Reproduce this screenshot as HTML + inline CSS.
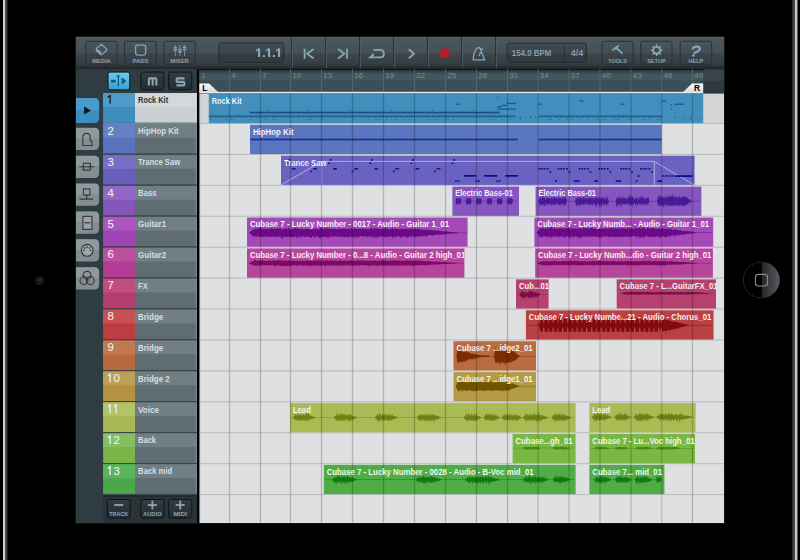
<!DOCTYPE html>
<html><head><meta charset="utf-8"><style>html,body{margin:0;padding:0;background:#000;width:800px;height:560px;overflow:hidden}svg{display:block}</style></head>
<body><svg width="800" height="560" viewBox="0 0 800 560" font-family="Liberation Sans, sans-serif">
<rect width="800" height="560" fill="#000"/>
<rect x="3.00" y="0.00" width="2.00" height="560.00" fill="#cfcfd0" />
<rect x="5.00" y="0.00" width="1.00" height="560.00" fill="#55575b" />
<rect x="6.00" y="0.00" width="1.00" height="560.00" fill="#3c3e42" />
<rect x="7.00" y="0.00" width="1.00" height="560.00" fill="#1c1d1f" />
<rect x="792.00" y="0.00" width="1.00" height="560.00" fill="#2a2b2e" />
<rect x="793.00" y="0.00" width="1.00" height="560.00" fill="#3d3f43" />
<rect x="794.00" y="0.00" width="1.00" height="560.00" fill="#4a4c50" />
<rect x="795.00" y="0.00" width="2.00" height="560.00" fill="#c6c6c8" />
<rect x="797.00" y="0.00" width="1.00" height="560.00" fill="#58595c" />
<circle cx="39.6" cy="280.4" r="4.4" fill="#171819"/>
<circle cx="39.6" cy="281" r="3.6" fill="#262729"/>
<circle cx="39.6" cy="280.2" r="3.2" fill="#141516"/>
<circle cx="39.6" cy="280.4" r="2.0" fill="#0c1630"/>
<circle cx="39.9" cy="280.0" r="1.1" fill="#1d3a98"/>
<defs><linearGradient id="hb" x1="0" x2="1" y1="0" y2="0"><stop offset="0" stop-color="#26272a"/><stop offset="1" stop-color="#5a5b5f"/></linearGradient></defs>
<circle cx="761.2" cy="280" r="17.8" fill="#000" stroke="#2c2c2e" stroke-width="0.8"/>
<path d="M762,262.2 A17.8,17.8 0 0 1 762,297.8 Z" fill="url(#hb)"/>
<rect x="755.4" y="274.4" width="12.2" height="11.6" rx="3" fill="none" stroke="#8c8c8e" stroke-width="1.1"/>
<rect x="75.00" y="36.00" width="650.00" height="488.00" fill="#121416" />
<rect x="76.00" y="37.00" width="648.00" height="486.00" fill="#2f3a40" />
<defs>
<linearGradient id="tb" x1="0" x2="0" y1="0" y2="1"><stop offset="0" stop-color="#4c585f"/><stop offset="0.55" stop-color="#454f56"/><stop offset="0.56" stop-color="#3e474d"/><stop offset="1" stop-color="#343c41"/></linearGradient>
<linearGradient id="tbb" x1="0" x2="0" y1="0" y2="1"><stop offset="0" stop-color="#2d3438"/><stop offset="1" stop-color="#1f262a"/></linearGradient>
<linearGradient id="btn" x1="0" x2="0" y1="0" y2="1"><stop offset="0" stop-color="#4a555c"/><stop offset="0.5" stop-color="#434d53"/><stop offset="0.51" stop-color="#3c454b"/><stop offset="1" stop-color="#353d42"/></linearGradient>
<linearGradient id="blueb" x1="0" x2="0" y1="0" y2="1"><stop offset="0" stop-color="#6ccaee"/><stop offset="1" stop-color="#389fd0"/></linearGradient>
<linearGradient id="darkb" x1="0" x2="0" y1="0" y2="1"><stop offset="0" stop-color="#323c42"/><stop offset="1" stop-color="#252d32"/></linearGradient>
<linearGradient id="pbox" x1="0" x2="0" y1="0" y2="1"><stop offset="0" stop-color="#414b51"/><stop offset="0.5" stop-color="#3c454b"/><stop offset="0.52" stop-color="#353d43"/><stop offset="1" stop-color="#30383d"/></linearGradient>
<linearGradient id="rul" x1="0" x2="0" y1="0" y2="1"><stop offset="0" stop-color="#27363b"/><stop offset="0.45" stop-color="#3f565d"/><stop offset="1" stop-color="#42595f"/></linearGradient>
<linearGradient id="lmk" x1="0" x2="0" y1="0" y2="1"><stop offset="0" stop-color="#ffffff"/><stop offset="1" stop-color="#d8d8d8"/></linearGradient>
</defs>
<rect x="76.00" y="37.00" width="648.00" height="28.50" fill="url(#tb)" />
<rect x="76.00" y="37.00" width="648.00" height="1.20" fill="#56636a" />
<rect x="76.00" y="65.40" width="648.00" height="3.80" fill="url(#tbb)" />
<rect x="85.80" y="41.30" width="31.20" height="23.00" rx="2" fill="url(#btn)" stroke="#2a3136" stroke-width="1"/>
<text x="101.4" y="62.8" font-size="5.9" fill="#8aa1ad" font-weight="bold" text-anchor="middle" textLength="18.5" lengthAdjust="spacingAndGlyphs" >MEDIA</text>
<rect x="124.50" y="41.30" width="31.80" height="23.00" rx="2" fill="url(#btn)" stroke="#2a3136" stroke-width="1"/>
<text x="140.4" y="62.8" font-size="5.9" fill="#8aa1ad" font-weight="bold" text-anchor="middle" textLength="15.9" lengthAdjust="spacingAndGlyphs" >PADS</text>
<rect x="163.80" y="41.30" width="31.50" height="23.00" rx="2" fill="url(#btn)" stroke="#2a3136" stroke-width="1"/>
<text x="179.55" y="62.8" font-size="5.9" fill="#8aa1ad" font-weight="bold" text-anchor="middle" textLength="18.5" lengthAdjust="spacingAndGlyphs" >MIXER</text>
<rect x="602.10" y="41.30" width="31.10" height="23.00" rx="2" fill="url(#btn)" stroke="#2a3136" stroke-width="1"/>
<text x="617.6500000000001" y="62.8" font-size="5.9" fill="#8aa1ad" font-weight="bold" text-anchor="middle" textLength="18.6" lengthAdjust="spacingAndGlyphs" >TOOLS</text>
<rect x="640.80" y="41.30" width="31.20" height="23.00" rx="2" fill="url(#btn)" stroke="#2a3136" stroke-width="1"/>
<text x="656.4" y="62.8" font-size="5.9" fill="#8aa1ad" font-weight="bold" text-anchor="middle" textLength="18.5" lengthAdjust="spacingAndGlyphs" >SETUP</text>
<rect x="680.20" y="41.30" width="31.50" height="23.00" rx="2" fill="url(#btn)" stroke="#2a3136" stroke-width="1"/>
<text x="695.95" y="62.8" font-size="5.9" fill="#8aa1ad" font-weight="bold" text-anchor="middle" textLength="14.7" lengthAdjust="spacingAndGlyphs" >HELP</text>
<path d="M101.5,44.4 L106.5,49 L106.5,50.5 L101.4,54.9 L96.4,50.8 L96.4,48.5 Z" fill="none" stroke="#86a6b7" stroke-width="1.2" stroke-linejoin="round"/>
<path d="M96.3,48.4 L101.3,51.8 L101.3,54.9 L96.3,50.9 Z" fill="#86a6b7"/>
<rect x="135.6" y="45.1" width="10" height="10" rx="1.8" fill="none" stroke="#86a6b7" stroke-width="1.3"/>
<line x1="175.3" y1="44.8" x2="175.3" y2="56" stroke="#86a6b7" stroke-width="0.9" opacity="0.8"/>
<rect x="173.70000000000002" y="47.0" width="3.2" height="3.90" fill="#86a6b7"/><rect x="173.70000000000002" y="48.65" width="3.2" height="0.6" fill="#4a565c"/>
<line x1="179.9" y1="44.8" x2="179.9" y2="56" stroke="#86a6b7" stroke-width="0.9" opacity="0.8"/>
<rect x="178.3" y="48.9" width="3.2" height="3.90" fill="#86a6b7"/><rect x="178.3" y="50.55" width="3.2" height="0.6" fill="#4a565c"/>
<line x1="184.5" y1="44.8" x2="184.5" y2="56" stroke="#86a6b7" stroke-width="0.9" opacity="0.8"/>
<rect x="182.9" y="46.5" width="3.2" height="3.70" fill="#86a6b7"/><rect x="182.9" y="48.05" width="3.2" height="0.6" fill="#4a565c"/>
<path d="M611.9,49.6 L615.6,46.7 Q617.1,45.5 618.8,45.1 L619.4,46.1 Q617.9,46.9 617.5,48.3 L616.4,49.3 Q614.6,49.5 612.7,51 Z" fill="#86a6b7"/><line x1="616.4" y1="48" x2="622.6" y2="53.7" stroke="#86a6b7" stroke-width="1.75"/>
<polygon points="655.29,46.56 656.18,44.57 657.22,44.57 658.11,46.56 658.35,46.66 660.38,45.89 661.11,46.62 660.34,48.65 660.44,48.89 662.43,49.78 662.43,50.82 660.44,51.71 660.34,51.95 661.11,53.98 660.38,54.71 658.35,53.94 658.11,54.04 657.22,56.03 656.18,56.03 655.29,54.04 655.05,53.94 653.02,54.71 652.29,53.98 653.06,51.95 652.96,51.71 650.97,50.82 650.97,49.78 652.96,48.89 653.06,48.65 652.29,46.62 653.02,45.89 655.05,46.66" fill="#86a6b7"/><circle cx="656.7" cy="50.3" r="2.45" fill="#414b51"/>
<path d="M692.4,49.4 Q693.2,46.6 696.6,46.6 Q700,46.6 699.8,49 Q699.6,50.8 697,51.8 Q694.6,52.6 694.2,53.6" fill="none" stroke="#86a6b7" stroke-width="2.3"/><path d="M692.2,54.4 L695,54.4 L694.6,56.6 L691.8,56.6 Z" fill="#86a6b7"/>
<rect x="218.9" y="42.9" width="65" height="19.6" rx="2.5" fill="url(#pbox)" stroke="#262d31" stroke-width="1"/>
<rect x="258" y="48.6" width="2.1" height="8.4" fill="#88a7b7"/><path d="M258.3,48.6 L260.1,48.6 L256.2,51.4 L255.8,49.9 Z" fill="#88a7b7"/>
<rect x="262.8" y="55.1" width="2.2" height="1.9" fill="#88a7b7"/>
<rect x="268" y="48.6" width="2.1" height="8.4" fill="#88a7b7"/><path d="M268.3,48.6 L270.1,48.6 L266.2,51.4 L265.8,49.9 Z" fill="#88a7b7"/>
<rect x="272.8" y="55.1" width="2.2" height="1.9" fill="#88a7b7"/>
<rect x="278" y="48.6" width="2.1" height="8.4" fill="#88a7b7"/><path d="M278.3,48.6 L280.1,48.6 L276.2,51.4 L275.8,49.9 Z" fill="#88a7b7"/>
<rect x="291.10" y="37.00" width="1.00" height="31.00" fill="#2a3236" />
<rect x="292.10" y="37.00" width="0.80" height="31.00" fill="#525d63" />
<rect x="325.10" y="37.00" width="1.00" height="31.00" fill="#2a3236" />
<rect x="326.10" y="37.00" width="0.80" height="31.00" fill="#525d63" />
<rect x="359.00" y="37.00" width="1.00" height="31.00" fill="#2a3236" />
<rect x="360.00" y="37.00" width="0.80" height="31.00" fill="#525d63" />
<rect x="393.00" y="37.00" width="1.00" height="31.00" fill="#2a3236" />
<rect x="394.00" y="37.00" width="0.80" height="31.00" fill="#525d63" />
<rect x="427.00" y="37.00" width="1.00" height="31.00" fill="#2a3236" />
<rect x="428.00" y="37.00" width="0.80" height="31.00" fill="#525d63" />
<rect x="461.00" y="37.00" width="1.00" height="31.00" fill="#2a3236" />
<rect x="462.00" y="37.00" width="0.80" height="31.00" fill="#525d63" />
<rect x="495.00" y="37.00" width="1.00" height="31.00" fill="#2a3236" />
<rect x="496.00" y="37.00" width="0.80" height="31.00" fill="#525d63" />
<path d="M304.6,48.7 L304.6,58.8 M313.6,49 L307.2,53.8 L313.6,58.6" fill="none" stroke="#86a6b7" stroke-width="1.85" stroke-linecap="butt" stroke-linejoin="miter"/>
<path d="M338,49 L344.4,53.8 L338,58.6 M347,48.7 L347,58.8" fill="none" stroke="#86a6b7" stroke-width="1.85" stroke-linecap="butt" stroke-linejoin="miter"/>
<path d="M373.4,49.9 L380.2,49.9 Q383.9,49.9 383.9,53.7 Q383.9,57.4 380.2,57.4 L370.2,57.4 L373.8,54" fill="none" stroke="#86a6b7" stroke-width="1.85" stroke-linecap="butt" stroke-linejoin="miter"/>
<path d="M408.8,49.2 L414,53.8 L408.8,58.4" fill="none" stroke="#86a6b7" stroke-width="1.85" stroke-linecap="butt" stroke-linejoin="miter"/>
<circle cx="444.7" cy="53.2" r="5" fill="#b31d24"/>
<path d="M473.2,59.9 Q473.4,52.4 476.6,48.6 Q478.4,46.6 480.2,48.4 L484.6,59.9 Z M479,56 L482.6,48" fill="none" stroke="#86a6b7" stroke-width="1.3" stroke-linejoin="round"/>
<rect x="507.2" y="43.2" width="79.2" height="19.2" rx="2.5" fill="url(#pbox)" stroke="#262d31" stroke-width="1"/>
<rect x="564.00" y="43.50" width="0.90" height="18.60" fill="#2b3237" />
<text x="511.8" y="56.3" font-size="8.4" fill="#879eab" font-weight="bold" text-anchor="start" textLength="39.5" lengthAdjust="spacingAndGlyphs" >154.0 BPM</text>
<text x="570.7" y="56.3" font-size="8.4" fill="#879eab" font-weight="bold" text-anchor="start" textLength="12.5" lengthAdjust="spacingAndGlyphs" >4/4</text>
<rect x="76.00" y="69.20" width="121.00" height="453.80" fill="#2f3c42" />
<rect x="108.00" y="72.10" width="21.80" height="17.80" rx="2" fill="url(#blueb)" stroke="#101417" stroke-width="1"/>
<rect x="140.80" y="72.10" width="23.10" height="17.80" rx="2" fill="url(#darkb)" stroke="#101417" stroke-width="1"/>
<rect x="168.60" y="72.10" width="23.20" height="17.80" rx="2" fill="url(#darkb)" stroke="#101417" stroke-width="1"/>
<rect x="111.1" y="79.8" width="4.5" height="2.8" fill="#0f5a80"/><path d="M115.6,75.4 L120.9,75.4 L119,77 L119,86.5 L117.8,86.5 L117.8,77 Z" fill="#0f5a80"/><path d="M121,78.3 L123.3,78.3 L126.1,81 L123.3,83.7 L121,83.7 L122,81 Z" fill="#0f5a80"/>
<path d="M148.9,85.4 L148.9,79.4 Q148.9,78.4 149.9,78.4 L155.4,78.4 Q156.4,78.4 156.4,79.4 L156.4,85.4 M152.65,78.8 L152.65,85.4" fill="none" stroke="#8aa5b3" stroke-width="2.1"/>
<path d="M184.6,78.4 L177.6,78.4 Q176.6,78.4 176.6,79.4 L176.6,80.9 Q176.6,81.9 177.6,81.9 L183.4,81.9 Q184.4,81.9 184.4,82.9 L184.4,84.4 Q184.4,85.4 183.4,85.4 L176.4,85.4" fill="none" stroke="#8aa5b3" stroke-width="2.1"/>
<rect x="103.10" y="494.50" width="93.80" height="28.50" fill="#293338" />
<rect x="103.10" y="494.50" width="93.80" height="2.20" fill="#20282c" />
<rect x="107.40" y="499.50" width="22.70" height="18.60" rx="2" fill="url(#darkb)" stroke="#101417" stroke-width="1"/>
<path d="M114.25,505 L123.25,505" stroke="#8aa8b8" stroke-width="1.8"/>
<text x="118.75" y="516.3" font-size="6.0" fill="#8aa4b2" font-weight="bold" text-anchor="middle" textLength="19" lengthAdjust="spacingAndGlyphs" >TRACK</text>
<rect x="140.80" y="499.50" width="23.10" height="18.60" rx="2" fill="url(#darkb)" stroke="#101417" stroke-width="1"/>
<path d="M147.85000000000002,505 L156.85000000000002,505" stroke="#8aa8b8" stroke-width="1.8"/>
<path d="M152.35000000000002,500.6 L152.35000000000002,509.4" stroke="#8aa8b8" stroke-width="1.8"/>
<text x="152.35000000000002" y="516.3" font-size="6.0" fill="#8aa4b2" font-weight="bold" text-anchor="middle" textLength="18.8" lengthAdjust="spacingAndGlyphs" >AUDIO</text>
<rect x="168.60" y="499.50" width="23.20" height="18.60" rx="2" fill="url(#darkb)" stroke="#101417" stroke-width="1"/>
<path d="M175.7,505 L184.7,505" stroke="#8aa8b8" stroke-width="1.8"/>
<path d="M180.2,500.6 L180.2,509.4" stroke="#8aa8b8" stroke-width="1.8"/>
<text x="180.2" y="516.3" font-size="6.0" fill="#8aa4b2" font-weight="bold" text-anchor="middle" textLength="13.4" lengthAdjust="spacingAndGlyphs" >MIDI</text>
<path d="M76,98 L94.1,98 Q99.1,98 99.1,103 L99.1,118.1 Q99.1,123.1 94.1,123.1 L76,123.1 Z" fill="#3b8dc2"/>
<clipPath id="c98"><path d="M76,98 L94.1,98 Q99.1,98 99.1,103 L99.1,118.1 Q99.1,123.1 94.1,123.1 L76,123.1 Z"/></clipPath><rect x="76" y="98" width="24" height="12.05" fill="#4a9bcd" clip-path="url(#c98)"/>
<path d="M84.1,106.6 L90.9,110.6 L84.1,114.6 Z" fill="#0e161c"/>
<path d="M76,127.8 L94.1,127.8 Q99.1,127.8 99.1,132.8 L99.1,145.1 Q99.1,150.1 94.1,150.1 L76,150.1 Z" fill="#838e92"/>
<clipPath id="c127"><path d="M76,127.8 L94.1,127.8 Q99.1,127.8 99.1,132.8 L99.1,145.1 Q99.1,150.1 94.1,150.1 L76,150.1 Z"/></clipPath><rect x="76" y="127.8" width="24" height="10.70" fill="#8f9a9e" clip-path="url(#c127)"/>
<path d="M76,155.68 L94.1,155.68 Q99.1,155.68 99.1,160.68 L99.1,172.98000000000002 Q99.1,177.98000000000002 94.1,177.98000000000002 L76,177.98000000000002 Z" fill="#838e92"/>
<clipPath id="c155"><path d="M76,155.68 L94.1,155.68 Q99.1,155.68 99.1,160.68 L99.1,172.98000000000002 Q99.1,177.98000000000002 94.1,177.98000000000002 L76,177.98000000000002 Z"/></clipPath><rect x="76" y="155.68" width="24" height="10.70" fill="#8f9a9e" clip-path="url(#c155)"/>
<path d="M76,183.56 L94.1,183.56 Q99.1,183.56 99.1,188.56 L99.1,200.86 Q99.1,205.86 94.1,205.86 L76,205.86 Z" fill="#838e92"/>
<clipPath id="c183"><path d="M76,183.56 L94.1,183.56 Q99.1,183.56 99.1,188.56 L99.1,200.86 Q99.1,205.86 94.1,205.86 L76,205.86 Z"/></clipPath><rect x="76" y="183.56" width="24" height="10.70" fill="#8f9a9e" clip-path="url(#c183)"/>
<path d="M76,211.44 L94.1,211.44 Q99.1,211.44 99.1,216.44 L99.1,228.74 Q99.1,233.74 94.1,233.74 L76,233.74 Z" fill="#838e92"/>
<clipPath id="c211"><path d="M76,211.44 L94.1,211.44 Q99.1,211.44 99.1,216.44 L99.1,228.74 Q99.1,233.74 94.1,233.74 L76,233.74 Z"/></clipPath><rect x="76" y="211.44" width="24" height="10.70" fill="#8f9a9e" clip-path="url(#c211)"/>
<path d="M76,239.32 L94.1,239.32 Q99.1,239.32 99.1,244.32 L99.1,256.62 Q99.1,261.62 94.1,261.62 L76,261.62 Z" fill="#838e92"/>
<clipPath id="c239"><path d="M76,239.32 L94.1,239.32 Q99.1,239.32 99.1,244.32 L99.1,256.62 Q99.1,261.62 94.1,261.62 L76,261.62 Z"/></clipPath><rect x="76" y="239.32" width="24" height="10.70" fill="#8f9a9e" clip-path="url(#c239)"/>
<path d="M76,267.2 L94.1,267.2 Q99.1,267.2 99.1,272.2 L99.1,284.5 Q99.1,289.5 94.1,289.5 L76,289.5 Z" fill="#838e92"/>
<clipPath id="c267"><path d="M76,267.2 L94.1,267.2 Q99.1,267.2 99.1,272.2 L99.1,284.5 Q99.1,289.5 94.1,289.5 L76,289.5 Z"/></clipPath><rect x="76" y="267.2" width="24" height="10.70" fill="#8f9a9e" clip-path="url(#c267)"/>
<path d="M82.8,145.5 L82.8,137.3 Q82.8,133.3 86.6,133.3 Q90.2,133.3 90.2,137.3 L90.2,140.4 Q92,141.0 92,142.8 L92,145.5 Z" fill="none" stroke="#3b3637" stroke-width="1.15"/>
<path d="M79.3,166.78 L94.3,166.78" stroke="#3b3637" stroke-width="1.05"/><rect x="83.4" y="163.28" width="7" height="6.9" fill="none" stroke="#3b3637" stroke-width="1.15"/>
<rect x="83.4" y="188.96" width="6.6" height="6" fill="none" stroke="#3b3637" stroke-width="1.15"/><path d="M86.7,194.96 L86.7,199.16 M79.5,199.16 L93.3,199.16" stroke="#3b3637" stroke-width="1.15"/>
<rect x="82.9" y="216.34" width="9" height="13" fill="#9ca6aa" stroke="#3b3637" stroke-width="1.15"/><path d="M84.6,222.74 L90.2,222.74" stroke="#3b3637" stroke-width="1.3"/>
<circle cx="87.2" cy="250.32" r="5.9" fill="#9fa9ad" stroke="#3b3637" stroke-width="1.15"/><circle cx="90.60" cy="250.32" r="0.85" fill="#3b3637"/><circle cx="89.60" cy="247.92" r="0.85" fill="#3b3637"/><circle cx="87.20" cy="246.92" r="0.85" fill="#3b3637"/><circle cx="84.80" cy="247.92" r="0.85" fill="#3b3637"/><circle cx="83.80" cy="250.32" r="0.85" fill="#3b3637"/>
<circle cx="87.1" cy="275.3" r="3.95" fill="none" stroke="#3b3637" stroke-width="1.1"/><circle cx="83.9" cy="280.59999999999997" r="3.95" fill="none" stroke="#3b3637" stroke-width="1.1"/><circle cx="90.3" cy="280.59999999999997" r="3.95" fill="none" stroke="#3b3637" stroke-width="1.1"/>
<rect x="103.10" y="93.10" width="31.90" height="29.68" fill="#3d8dbd" />
<rect x="103.10" y="93.10" width="31.90" height="13.80" fill="#4c9bc8" />
<rect x="135.00" y="93.10" width="61.90" height="29.68" fill="#c9cfd2" />
<rect x="135.00" y="93.10" width="61.90" height="13.80" fill="#d3d8db" />
<rect x="195.80" y="93.10" width="1.10" height="29.68" fill="#e0e6e8" />
<rect x="103.10" y="122.78" width="93.80" height="1.25" fill="#7a868b" />
<path d="M110.10,103.80 L110.10,95.70 L107.70,97.40" fill="none" stroke="#142028" stroke-width="1.3" stroke-linejoin="miter"/>
<text x="138.1" y="103.19999999999999" font-size="8.6" fill="#2a3135" font-weight="bold" text-anchor="start" textLength="30" lengthAdjust="spacingAndGlyphs" >Rock Kit</text>
<rect x="103.10" y="124.03" width="31.90" height="29.68" fill="#5a72bd" />
<rect x="103.10" y="124.03" width="31.90" height="13.80" fill="#6680c4" />
<rect x="135.00" y="124.03" width="61.90" height="29.68" fill="#5f6d73" />
<rect x="135.00" y="124.03" width="61.90" height="13.80" fill="#717f85" />
<rect x="195.80" y="124.03" width="1.10" height="29.68" fill="#8a969b" />
<rect x="103.10" y="153.71" width="93.80" height="1.25" fill="#3c474c" />
<text x="107.40" y="134.73" font-size="11.4" fill="#eef2f6" font-weight="normal" text-anchor="start" stroke="#eef2f6" stroke-width="0.08">2</text>
<text x="138.1" y="134.13" font-size="8.6" fill="#d6dee2" font-weight="bold" text-anchor="start" textLength="40.6" lengthAdjust="spacingAndGlyphs" >HipHop Kit</text>
<rect x="103.10" y="154.96" width="31.90" height="29.68" fill="#6a5ebd" />
<rect x="103.10" y="154.96" width="31.90" height="13.80" fill="#7a6ec4" />
<rect x="135.00" y="154.96" width="61.90" height="29.68" fill="#5f6d73" />
<rect x="135.00" y="154.96" width="61.90" height="13.80" fill="#717f85" />
<rect x="195.80" y="154.96" width="1.10" height="29.68" fill="#8a969b" />
<rect x="103.10" y="184.64" width="93.80" height="1.25" fill="#3c474c" />
<text x="107.40" y="165.66" font-size="11.4" fill="#eef2f6" font-weight="normal" text-anchor="start" stroke="#eef2f6" stroke-width="0.08">3</text>
<text x="138.1" y="165.05999999999997" font-size="8.6" fill="#d6dee2" font-weight="bold" text-anchor="start" textLength="42" lengthAdjust="spacingAndGlyphs" >Trance Saw</text>
<rect x="103.10" y="185.89" width="31.90" height="29.68" fill="#8456b8" />
<rect x="103.10" y="185.89" width="31.90" height="13.80" fill="#9268c4" />
<rect x="135.00" y="185.89" width="61.90" height="29.68" fill="#5f6d73" />
<rect x="135.00" y="185.89" width="61.90" height="13.80" fill="#717f85" />
<rect x="195.80" y="185.89" width="1.10" height="29.68" fill="#8a969b" />
<rect x="103.10" y="215.57" width="93.80" height="1.25" fill="#3c474c" />
<text x="107.40" y="196.59" font-size="11.4" fill="#eef2f6" font-weight="normal" text-anchor="start" stroke="#eef2f6" stroke-width="0.08">4</text>
<text x="138.1" y="195.98999999999998" font-size="8.6" fill="#d6dee2" font-weight="bold" text-anchor="start" textLength="18.4" lengthAdjust="spacingAndGlyphs" >Bass</text>
<rect x="103.10" y="216.82" width="31.90" height="29.68" fill="#a043b4" />
<rect x="103.10" y="216.82" width="31.90" height="13.80" fill="#ad55bc" />
<rect x="135.00" y="216.82" width="61.90" height="29.68" fill="#5f6d73" />
<rect x="135.00" y="216.82" width="61.90" height="13.80" fill="#717f85" />
<rect x="195.80" y="216.82" width="1.10" height="29.68" fill="#8a969b" />
<rect x="103.10" y="246.50" width="93.80" height="1.25" fill="#3c474c" />
<text x="107.40" y="227.52" font-size="11.4" fill="#eef2f6" font-weight="normal" text-anchor="start" stroke="#eef2f6" stroke-width="0.08">5</text>
<text x="138.1" y="226.92" font-size="8.6" fill="#d6dee2" font-weight="bold" text-anchor="start" textLength="28" lengthAdjust="spacingAndGlyphs" >Guitar1</text>
<rect x="103.10" y="247.75" width="31.90" height="29.68" fill="#b33c94" />
<rect x="103.10" y="247.75" width="31.90" height="13.80" fill="#bd509e" />
<rect x="135.00" y="247.75" width="61.90" height="29.68" fill="#5f6d73" />
<rect x="135.00" y="247.75" width="61.90" height="13.80" fill="#717f85" />
<rect x="195.80" y="247.75" width="1.10" height="29.68" fill="#8a969b" />
<rect x="103.10" y="277.43" width="93.80" height="1.25" fill="#3c474c" />
<text x="107.40" y="258.45" font-size="11.4" fill="#eef2f6" font-weight="normal" text-anchor="start" stroke="#eef2f6" stroke-width="0.08">6</text>
<text x="138.1" y="257.85" font-size="8.6" fill="#d6dee2" font-weight="bold" text-anchor="start" textLength="28" lengthAdjust="spacingAndGlyphs" >Guitar2</text>
<rect x="103.10" y="278.68" width="31.90" height="29.68" fill="#b53d6c" />
<rect x="103.10" y="278.68" width="31.90" height="13.80" fill="#c04c80" />
<rect x="135.00" y="278.68" width="61.90" height="29.68" fill="#5f6d73" />
<rect x="135.00" y="278.68" width="61.90" height="13.80" fill="#717f85" />
<rect x="195.80" y="278.68" width="1.10" height="29.68" fill="#8a969b" />
<rect x="103.10" y="308.36" width="93.80" height="1.25" fill="#3c474c" />
<text x="107.40" y="289.38" font-size="11.4" fill="#eef2f6" font-weight="normal" text-anchor="start" stroke="#eef2f6" stroke-width="0.08">7</text>
<text x="138.1" y="288.78" font-size="8.6" fill="#d6dee2" font-weight="bold" text-anchor="start" textLength="9.6" lengthAdjust="spacingAndGlyphs" >FX</text>
<rect x="103.10" y="309.61" width="31.90" height="29.68" fill="#bd3e42" />
<rect x="103.10" y="309.61" width="31.90" height="13.80" fill="#c85050" />
<rect x="135.00" y="309.61" width="61.90" height="29.68" fill="#5f6d73" />
<rect x="135.00" y="309.61" width="61.90" height="13.80" fill="#717f85" />
<rect x="195.80" y="309.61" width="1.10" height="29.68" fill="#8a969b" />
<rect x="103.10" y="339.29" width="93.80" height="1.25" fill="#3c474c" />
<text x="107.40" y="320.31" font-size="11.4" fill="#eef2f6" font-weight="normal" text-anchor="start" stroke="#eef2f6" stroke-width="0.08">8</text>
<text x="138.1" y="319.71000000000004" font-size="8.6" fill="#d6dee2" font-weight="bold" text-anchor="start" textLength="25" lengthAdjust="spacingAndGlyphs" >Bridge</text>
<rect x="103.10" y="340.54" width="31.90" height="29.68" fill="#b86a3e" />
<rect x="103.10" y="340.54" width="31.90" height="13.80" fill="#c07a50" />
<rect x="135.00" y="340.54" width="61.90" height="29.68" fill="#5f6d73" />
<rect x="135.00" y="340.54" width="61.90" height="13.80" fill="#717f85" />
<rect x="195.80" y="340.54" width="1.10" height="29.68" fill="#8a969b" />
<rect x="103.10" y="370.22" width="93.80" height="1.25" fill="#3c474c" />
<text x="107.40" y="351.24" font-size="11.4" fill="#eef2f6" font-weight="normal" text-anchor="start" stroke="#eef2f6" stroke-width="0.08">9</text>
<text x="138.1" y="350.64" font-size="8.6" fill="#d6dee2" font-weight="bold" text-anchor="start" textLength="25" lengthAdjust="spacingAndGlyphs" >Bridge</text>
<rect x="103.10" y="371.47" width="31.90" height="29.68" fill="#b39244" />
<rect x="103.10" y="371.47" width="31.90" height="13.80" fill="#bca056" />
<rect x="135.00" y="371.47" width="61.90" height="29.68" fill="#5f6d73" />
<rect x="135.00" y="371.47" width="61.90" height="13.80" fill="#717f85" />
<rect x="195.80" y="371.47" width="1.10" height="29.68" fill="#8a969b" />
<rect x="103.10" y="401.15" width="93.80" height="1.25" fill="#3c474c" />
<path d="M110.10,382.17 L110.10,374.07 L107.70,375.77" fill="none" stroke="#eef2f6" stroke-width="1.3" stroke-linejoin="miter"/>
<text x="113.50" y="382.17" font-size="11.4" fill="#eef2f6" font-weight="normal" text-anchor="start" stroke="#eef2f6" stroke-width="0.08">0</text>
<text x="138.1" y="381.57000000000005" font-size="8.6" fill="#d6dee2" font-weight="bold" text-anchor="start" textLength="31.5" lengthAdjust="spacingAndGlyphs" >Bridge 2</text>
<rect x="103.10" y="402.40" width="31.90" height="29.68" fill="#a8b852" />
<rect x="103.10" y="402.40" width="31.90" height="13.80" fill="#b4c464" />
<rect x="135.00" y="402.40" width="61.90" height="29.68" fill="#5f6d73" />
<rect x="135.00" y="402.40" width="61.90" height="13.80" fill="#717f85" />
<rect x="195.80" y="402.40" width="1.10" height="29.68" fill="#8a969b" />
<rect x="103.10" y="432.08" width="93.80" height="1.25" fill="#3c474c" />
<path d="M110.10,413.10 L110.10,405.00 L107.70,406.70" fill="none" stroke="#eef2f6" stroke-width="1.3" stroke-linejoin="miter"/>
<path d="M116.20,413.10 L116.20,405.00 L113.80,406.70" fill="none" stroke="#eef2f6" stroke-width="1.3" stroke-linejoin="miter"/>
<text x="138.1" y="412.5" font-size="8.6" fill="#d6dee2" font-weight="bold" text-anchor="start" textLength="20.8" lengthAdjust="spacingAndGlyphs" >Voice</text>
<rect x="103.10" y="433.33" width="31.90" height="29.68" fill="#78b448" />
<rect x="103.10" y="433.33" width="31.90" height="13.80" fill="#84c060" />
<rect x="135.00" y="433.33" width="61.90" height="29.68" fill="#5f6d73" />
<rect x="135.00" y="433.33" width="61.90" height="13.80" fill="#717f85" />
<rect x="195.80" y="433.33" width="1.10" height="29.68" fill="#8a969b" />
<rect x="103.10" y="463.01" width="93.80" height="1.25" fill="#3c474c" />
<path d="M110.10,444.03 L110.10,435.93 L107.70,437.63" fill="none" stroke="#eef2f6" stroke-width="1.3" stroke-linejoin="miter"/>
<text x="113.50" y="444.03" font-size="11.4" fill="#eef2f6" font-weight="normal" text-anchor="start" stroke="#eef2f6" stroke-width="0.08">2</text>
<text x="138.1" y="443.43000000000006" font-size="8.6" fill="#d6dee2" font-weight="bold" text-anchor="start" textLength="17.9" lengthAdjust="spacingAndGlyphs" >Back</text>
<rect x="103.10" y="464.26" width="31.90" height="29.68" fill="#4aa848" />
<rect x="103.10" y="464.26" width="31.90" height="13.80" fill="#5cb45a" />
<rect x="135.00" y="464.26" width="61.90" height="29.68" fill="#5f6d73" />
<rect x="135.00" y="464.26" width="61.90" height="13.80" fill="#717f85" />
<rect x="195.80" y="464.26" width="1.10" height="29.68" fill="#8a969b" />
<rect x="103.10" y="493.94" width="93.80" height="1.25" fill="#3c474c" />
<path d="M110.10,474.96 L110.10,466.86 L107.70,468.56" fill="none" stroke="#eef2f6" stroke-width="1.3" stroke-linejoin="miter"/>
<text x="113.50" y="474.96" font-size="11.4" fill="#eef2f6" font-weight="normal" text-anchor="start" stroke="#eef2f6" stroke-width="0.08">3</text>
<text x="138.1" y="474.36" font-size="8.6" fill="#d6dee2" font-weight="bold" text-anchor="start" textLength="34.2" lengthAdjust="spacingAndGlyphs" >Back mid</text>
<rect x="196.90" y="69.20" width="2.20" height="454.00" fill="#030404" />
<rect x="199.30" y="93.30" width="524.70" height="429.70" fill="#dfe0e2" />
<rect x="199.30" y="93.30" width="524.70" height="30.40" fill="#d2d4d6" />
<rect x="199.30" y="122.95" width="524.70" height="1.00" fill="#b5babc" />
<rect x="199.30" y="153.88" width="524.70" height="1.00" fill="#b5babc" />
<rect x="199.30" y="184.81" width="524.70" height="1.00" fill="#b5babc" />
<rect x="199.30" y="215.74" width="524.70" height="1.00" fill="#b5babc" />
<rect x="199.30" y="246.67" width="524.70" height="1.00" fill="#b5babc" />
<rect x="199.30" y="277.60" width="524.70" height="1.00" fill="#b5babc" />
<rect x="199.30" y="308.53" width="524.70" height="1.00" fill="#b5babc" />
<rect x="199.30" y="339.46" width="524.70" height="1.00" fill="#b5babc" />
<rect x="199.30" y="370.39" width="524.70" height="1.00" fill="#b5babc" />
<rect x="199.30" y="401.32" width="524.70" height="1.00" fill="#b5babc" />
<rect x="199.30" y="432.25" width="524.70" height="1.00" fill="#b5babc" />
<rect x="199.30" y="463.18" width="524.70" height="1.00" fill="#b5babc" />
<rect x="199.30" y="494.11" width="524.70" height="1.00" fill="#b5babc" />
<rect x="199.30" y="69.20" width="524.70" height="11.60" fill="url(#rul)" />
<rect x="199.30" y="80.80" width="524.70" height="11.20" fill="#3a4f56" />
<rect x="199.30" y="69.00" width="524.70" height="1.10" fill="#0f1417" />
<rect x="703.20" y="69.20" width="20.80" height="11.60" fill="#374449" />
<rect x="703.20" y="80.80" width="20.80" height="12.80" fill="#2d393e" />
<rect x="229.00" y="69.20" width="1.00" height="22.60" fill="#51656b" />
<rect x="260.00" y="69.20" width="1.00" height="22.60" fill="#51656b" />
<rect x="290.00" y="69.20" width="1.00" height="22.60" fill="#51656b" />
<rect x="321.00" y="69.20" width="1.00" height="22.60" fill="#51656b" />
<rect x="352.00" y="69.20" width="1.00" height="22.60" fill="#51656b" />
<rect x="383.00" y="69.20" width="1.00" height="22.60" fill="#51656b" />
<rect x="414.00" y="69.20" width="1.00" height="22.60" fill="#51656b" />
<rect x="445.00" y="69.20" width="1.00" height="22.60" fill="#51656b" />
<rect x="476.00" y="69.20" width="1.00" height="22.60" fill="#51656b" />
<rect x="507.00" y="69.20" width="1.00" height="22.60" fill="#51656b" />
<rect x="537.50" y="69.20" width="1.00" height="22.60" fill="#51656b" />
<rect x="568.50" y="69.20" width="1.00" height="22.60" fill="#51656b" />
<rect x="599.50" y="69.20" width="1.00" height="22.60" fill="#51656b" />
<rect x="630.50" y="69.20" width="1.00" height="22.60" fill="#51656b" />
<rect x="661.20" y="69.20" width="1.00" height="22.60" fill="#51656b" />
<rect x="692.00" y="69.20" width="1.00" height="22.60" fill="#51656b" />
<text x="201.3" y="78.0" font-size="7.9" fill="#768d94" font-weight="normal" text-anchor="start" >1</text>
<text x="231.3" y="78.0" font-size="7.9" fill="#768d94" font-weight="normal" text-anchor="start" >4</text>
<text x="262.3" y="78.0" font-size="7.9" fill="#768d94" font-weight="normal" text-anchor="start" >7</text>
<text x="292.3" y="78.0" font-size="7.9" fill="#768d94" font-weight="normal" text-anchor="start" >10</text>
<text x="323.3" y="78.0" font-size="7.9" fill="#768d94" font-weight="normal" text-anchor="start" >13</text>
<text x="354.3" y="78.0" font-size="7.9" fill="#768d94" font-weight="normal" text-anchor="start" >16</text>
<text x="385.3" y="78.0" font-size="7.9" fill="#768d94" font-weight="normal" text-anchor="start" >19</text>
<text x="416.3" y="78.0" font-size="7.9" fill="#768d94" font-weight="normal" text-anchor="start" >22</text>
<text x="447.3" y="78.0" font-size="7.9" fill="#768d94" font-weight="normal" text-anchor="start" >25</text>
<text x="478.3" y="78.0" font-size="7.9" fill="#768d94" font-weight="normal" text-anchor="start" >28</text>
<text x="509.3" y="78.0" font-size="7.9" fill="#768d94" font-weight="normal" text-anchor="start" >31</text>
<text x="539.8" y="78.0" font-size="7.9" fill="#768d94" font-weight="normal" text-anchor="start" >34</text>
<text x="570.8" y="78.0" font-size="7.9" fill="#768d94" font-weight="normal" text-anchor="start" >37</text>
<text x="601.8" y="78.0" font-size="7.9" fill="#768d94" font-weight="normal" text-anchor="start" >40</text>
<text x="632.8" y="78.0" font-size="7.9" fill="#768d94" font-weight="normal" text-anchor="start" >43</text>
<text x="663.5" y="78.0" font-size="7.9" fill="#768d94" font-weight="normal" text-anchor="start" >46</text>
<text x="694.3" y="78.0" font-size="7.9" fill="#768d94" font-weight="normal" text-anchor="start" >49</text>
<rect x="199.30" y="91.80" width="503.90" height="1.60" fill="#e8e8e8" />
<rect x="199.30" y="93.30" width="503.90" height="0.70" fill="#6a6662" />
<path d="M199.3,83.5 L209,83.5 L218.2,92 L199.3,92 Z" fill="url(#lmk)"/>
<text x="202.3" y="91.4" font-size="8.4" fill="#000" font-weight="bold" text-anchor="start" >L</text>
<path d="M692,83.5 L703.2,83.5 L703.2,92 L683,92 Z" fill="url(#lmk)"/>
<text x="694" y="91.4" font-size="8.4" fill="#000" font-weight="bold" text-anchor="start" >R</text>
<rect x="208.80" y="93.90" width="494.40" height="29.20" fill="#428ebd" />
<clipPath id="cl0"><rect x="208.8" y="93.9" width="494.40000000000003" height="29.2"/></clipPath>
<rect x="250.00" y="124.81" width="411.70" height="29.20" fill="#5a76c0" />
<clipPath id="cl1"><rect x="250" y="124.815" width="411.70000000000005" height="29.2"/></clipPath>
<rect x="281.00" y="155.73" width="413.60" height="29.20" fill="#6a62c0" />
<clipPath id="cl2"><rect x="281" y="155.73000000000002" width="413.6" height="29.2"/></clipPath>
<rect x="452.40" y="186.65" width="66.60" height="29.20" fill="#8557be" />
<clipPath id="cl3"><rect x="452.4" y="186.645" width="66.60000000000002" height="29.2"/></clipPath>
<rect x="535.60" y="186.65" width="165.80" height="29.20" fill="#8557be" />
<clipPath id="cl4"><rect x="535.6" y="186.645" width="165.79999999999995" height="29.2"/></clipPath>
<rect x="247.00" y="217.56" width="220.60" height="29.20" fill="#a34ab8" />
<clipPath id="cl5"><rect x="247" y="217.56" width="220.60000000000002" height="29.2"/></clipPath>
<rect x="534.40" y="217.56" width="178.80" height="29.20" fill="#a34ab8" />
<clipPath id="cl6"><rect x="534.4" y="217.56" width="178.80000000000007" height="29.2"/></clipPath>
<rect x="247.00" y="248.47" width="217.40" height="29.20" fill="#b6459c" />
<clipPath id="cl7"><rect x="247" y="248.475" width="217.39999999999998" height="29.2"/></clipPath>
<rect x="535.20" y="248.47" width="177.70" height="29.20" fill="#b6459c" />
<clipPath id="cl8"><rect x="535.2" y="248.475" width="177.69999999999993" height="29.2"/></clipPath>
<rect x="516.00" y="279.39" width="32.60" height="29.20" fill="#b5426e" />
<clipPath id="cl9"><rect x="516" y="279.39" width="32.60000000000002" height="29.2"/></clipPath>
<rect x="616.70" y="279.39" width="99.30" height="29.20" fill="#b5426e" />
<clipPath id="cl10"><rect x="616.7" y="279.39" width="99.29999999999995" height="29.2"/></clipPath>
<rect x="525.90" y="310.31" width="187.70" height="29.20" fill="#b94142" />
<clipPath id="cl11"><rect x="525.9" y="310.305" width="187.70000000000005" height="29.2"/></clipPath>
<rect x="453.50" y="341.22" width="82.50" height="29.20" fill="#b86c40" />
<clipPath id="cl12"><rect x="453.5" y="341.22" width="82.5" height="29.2"/></clipPath>
<rect x="453.50" y="372.13" width="82.50" height="29.20" fill="#b39b46" />
<clipPath id="cl13"><rect x="453.5" y="372.135" width="82.5" height="29.2"/></clipPath>
<rect x="290.00" y="403.05" width="285.60" height="29.20" fill="#a9bb54" />
<clipPath id="cl14"><rect x="290" y="403.04999999999995" width="285.6" height="29.2"/></clipPath>
<rect x="589.40" y="403.05" width="106.20" height="29.20" fill="#a9bb54" />
<clipPath id="cl15"><rect x="589.4" y="403.04999999999995" width="106.20000000000005" height="29.2"/></clipPath>
<rect x="512.60" y="433.97" width="63.00" height="29.20" fill="#7ab842" />
<clipPath id="cl16"><rect x="512.6" y="433.96500000000003" width="63.0" height="29.2"/></clipPath>
<rect x="589.40" y="433.97" width="105.60" height="29.20" fill="#7ab842" />
<clipPath id="cl17"><rect x="589.4" y="433.96500000000003" width="105.60000000000002" height="29.2"/></clipPath>
<rect x="323.80" y="464.88" width="251.80" height="29.20" fill="#4fad45" />
<clipPath id="cl18"><rect x="323.8" y="464.88" width="251.8" height="29.2"/></clipPath>
<rect x="589.40" y="464.88" width="75.00" height="29.20" fill="#4fad45" />
<clipPath id="cl19"><rect x="589.4" y="464.88" width="75.0" height="29.2"/></clipPath>
<rect x="249.70" y="111.70" width="249.80" height="1.70" fill="#1a5282" />
<rect x="266.70" y="109.60" width="1.20" height="1.20" fill="#1d5a88" />
<rect x="308.00" y="109.60" width="1.20" height="1.20" fill="#1d5a88" />
<rect x="349.30" y="109.60" width="1.20" height="1.20" fill="#1d5a88" />
<rect x="390.60" y="109.60" width="1.20" height="1.20" fill="#1d5a88" />
<rect x="431.90" y="109.60" width="1.20" height="1.20" fill="#1d5a88" />
<rect x="473.20" y="109.60" width="1.20" height="1.20" fill="#1d5a88" />
<rect x="208.80" y="115.50" width="306.40" height="1.30" fill="#1f5a86" />
<rect x="538.70" y="115.50" width="123.30" height="1.30" fill="#1f5a86" />
<rect x="210.00" y="116.50" width="1.20" height="1.30" fill="#1f5b88" />
<rect x="210.60" y="118.90" width="1.00" height="1.30" fill="#2a6896" />
<rect x="212.58" y="117.00" width="1.00" height="0.70" fill="#2d6e9c" />
<rect x="215.16" y="116.50" width="1.20" height="1.30" fill="#1f5b88" />
<rect x="217.74" y="117.00" width="1.00" height="0.70" fill="#2d6e9c" />
<rect x="220.32" y="116.50" width="1.20" height="1.30" fill="#1f5b88" />
<rect x="222.90" y="117.00" width="1.00" height="0.70" fill="#2d6e9c" />
<rect x="223.50" y="118.90" width="1.00" height="1.30" fill="#2a6896" />
<rect x="225.48" y="116.50" width="1.20" height="1.30" fill="#1f5b88" />
<rect x="226.08" y="118.90" width="1.00" height="1.30" fill="#2a6896" />
<rect x="228.06" y="117.00" width="1.00" height="0.70" fill="#2d6e9c" />
<rect x="230.64" y="116.50" width="1.20" height="1.30" fill="#1f5b88" />
<rect x="231.24" y="118.90" width="1.00" height="1.30" fill="#2a6896" />
<rect x="233.22" y="117.00" width="1.00" height="0.70" fill="#2d6e9c" />
<rect x="233.82" y="118.90" width="1.00" height="1.30" fill="#2a6896" />
<rect x="235.80" y="116.50" width="1.20" height="1.30" fill="#1f5b88" />
<rect x="238.38" y="117.00" width="1.00" height="0.70" fill="#2d6e9c" />
<rect x="240.96" y="116.50" width="1.20" height="1.30" fill="#1f5b88" />
<rect x="243.54" y="117.00" width="1.00" height="0.70" fill="#2d6e9c" />
<rect x="246.12" y="116.50" width="1.20" height="1.30" fill="#1f5b88" />
<rect x="248.70" y="117.00" width="1.00" height="0.70" fill="#2d6e9c" />
<rect x="249.30" y="118.90" width="1.00" height="1.30" fill="#2a6896" />
<rect x="251.28" y="116.50" width="1.20" height="1.30" fill="#1f5b88" />
<rect x="253.86" y="117.00" width="1.00" height="0.70" fill="#2d6e9c" />
<rect x="256.44" y="116.50" width="1.20" height="1.30" fill="#1f5b88" />
<rect x="259.02" y="117.00" width="1.00" height="0.70" fill="#2d6e9c" />
<rect x="261.60" y="116.50" width="1.20" height="1.30" fill="#1f5b88" />
<rect x="264.18" y="117.00" width="1.00" height="0.70" fill="#2d6e9c" />
<rect x="264.78" y="118.90" width="1.00" height="1.30" fill="#2a6896" />
<rect x="266.76" y="116.50" width="1.20" height="1.30" fill="#1f5b88" />
<rect x="269.34" y="117.00" width="1.00" height="0.70" fill="#2d6e9c" />
<rect x="271.92" y="116.50" width="1.20" height="1.30" fill="#1f5b88" />
<rect x="272.52" y="118.90" width="1.00" height="1.30" fill="#2a6896" />
<rect x="274.50" y="117.00" width="1.00" height="0.70" fill="#2d6e9c" />
<rect x="275.10" y="118.90" width="1.00" height="1.30" fill="#2a6896" />
<rect x="277.08" y="116.50" width="1.20" height="1.30" fill="#1f5b88" />
<rect x="279.66" y="117.00" width="1.00" height="0.70" fill="#2d6e9c" />
<rect x="282.24" y="116.50" width="1.20" height="1.30" fill="#1f5b88" />
<rect x="284.82" y="117.00" width="1.00" height="0.70" fill="#2d6e9c" />
<rect x="287.40" y="116.50" width="1.20" height="1.30" fill="#1f5b88" />
<rect x="289.98" y="117.00" width="1.00" height="0.70" fill="#2d6e9c" />
<rect x="292.56" y="116.50" width="1.20" height="1.30" fill="#1f5b88" />
<rect x="295.14" y="117.00" width="1.00" height="0.70" fill="#2d6e9c" />
<rect x="297.72" y="116.50" width="1.20" height="1.30" fill="#1f5b88" />
<rect x="300.30" y="117.00" width="1.00" height="0.70" fill="#2d6e9c" />
<rect x="302.88" y="116.50" width="1.20" height="1.30" fill="#1f5b88" />
<rect x="305.46" y="117.00" width="1.00" height="0.70" fill="#2d6e9c" />
<rect x="306.06" y="118.90" width="1.00" height="1.30" fill="#2a6896" />
<rect x="308.04" y="116.50" width="1.20" height="1.30" fill="#1f5b88" />
<rect x="308.64" y="118.90" width="1.00" height="1.30" fill="#2a6896" />
<rect x="310.62" y="117.00" width="1.00" height="0.70" fill="#2d6e9c" />
<rect x="311.22" y="118.90" width="1.00" height="1.30" fill="#2a6896" />
<rect x="313.20" y="116.50" width="1.20" height="1.30" fill="#1f5b88" />
<rect x="315.78" y="117.00" width="1.00" height="0.70" fill="#2d6e9c" />
<rect x="318.36" y="116.50" width="1.20" height="1.30" fill="#1f5b88" />
<rect x="320.94" y="117.00" width="1.00" height="0.70" fill="#2d6e9c" />
<rect x="321.54" y="118.90" width="1.00" height="1.30" fill="#2a6896" />
<rect x="323.52" y="116.50" width="1.20" height="1.30" fill="#1f5b88" />
<rect x="326.10" y="117.00" width="1.00" height="0.70" fill="#2d6e9c" />
<rect x="328.68" y="116.50" width="1.20" height="1.30" fill="#1f5b88" />
<rect x="331.26" y="117.00" width="1.00" height="0.70" fill="#2d6e9c" />
<rect x="333.84" y="116.50" width="1.20" height="1.30" fill="#1f5b88" />
<rect x="336.42" y="117.00" width="1.00" height="0.70" fill="#2d6e9c" />
<rect x="339.00" y="116.50" width="1.20" height="1.30" fill="#1f5b88" />
<rect x="341.58" y="117.00" width="1.00" height="0.70" fill="#2d6e9c" />
<rect x="344.16" y="116.50" width="1.20" height="1.30" fill="#1f5b88" />
<rect x="346.74" y="117.00" width="1.00" height="0.70" fill="#2d6e9c" />
<rect x="349.32" y="116.50" width="1.20" height="1.30" fill="#1f5b88" />
<rect x="351.90" y="117.00" width="1.00" height="0.70" fill="#2d6e9c" />
<rect x="352.50" y="118.90" width="1.00" height="1.30" fill="#2a6896" />
<rect x="354.48" y="116.50" width="1.20" height="1.30" fill="#1f5b88" />
<rect x="357.06" y="117.00" width="1.00" height="0.70" fill="#2d6e9c" />
<rect x="359.64" y="116.50" width="1.20" height="1.30" fill="#1f5b88" />
<rect x="362.22" y="117.00" width="1.00" height="0.70" fill="#2d6e9c" />
<rect x="364.80" y="116.50" width="1.20" height="1.30" fill="#1f5b88" />
<rect x="367.38" y="117.00" width="1.00" height="0.70" fill="#2d6e9c" />
<rect x="367.98" y="118.90" width="1.00" height="1.30" fill="#2a6896" />
<rect x="369.96" y="116.50" width="1.20" height="1.30" fill="#1f5b88" />
<rect x="372.54" y="117.00" width="1.00" height="0.70" fill="#2d6e9c" />
<rect x="375.12" y="116.50" width="1.20" height="1.30" fill="#1f5b88" />
<rect x="375.72" y="118.90" width="1.00" height="1.30" fill="#2a6896" />
<rect x="377.70" y="117.00" width="1.00" height="0.70" fill="#2d6e9c" />
<rect x="378.30" y="118.90" width="1.00" height="1.30" fill="#2a6896" />
<rect x="380.28" y="116.50" width="1.20" height="1.30" fill="#1f5b88" />
<rect x="382.86" y="117.00" width="1.00" height="0.70" fill="#2d6e9c" />
<rect x="385.44" y="116.50" width="1.20" height="1.30" fill="#1f5b88" />
<rect x="386.04" y="118.90" width="1.00" height="1.30" fill="#2a6896" />
<rect x="388.02" y="117.00" width="1.00" height="0.70" fill="#2d6e9c" />
<rect x="390.60" y="116.50" width="1.20" height="1.30" fill="#1f5b88" />
<rect x="393.18" y="117.00" width="1.00" height="0.70" fill="#2d6e9c" />
<rect x="393.78" y="118.90" width="1.00" height="1.30" fill="#2a6896" />
<rect x="395.76" y="116.50" width="1.20" height="1.30" fill="#1f5b88" />
<rect x="396.36" y="118.90" width="1.00" height="1.30" fill="#2a6896" />
<rect x="398.34" y="117.00" width="1.00" height="0.70" fill="#2d6e9c" />
<rect x="400.92" y="116.50" width="1.20" height="1.30" fill="#1f5b88" />
<rect x="403.50" y="117.00" width="1.00" height="0.70" fill="#2d6e9c" />
<rect x="404.10" y="118.90" width="1.00" height="1.30" fill="#2a6896" />
<rect x="406.08" y="116.50" width="1.20" height="1.30" fill="#1f5b88" />
<rect x="408.66" y="117.00" width="1.00" height="0.70" fill="#2d6e9c" />
<rect x="409.26" y="118.90" width="1.00" height="1.30" fill="#2a6896" />
<rect x="411.24" y="116.50" width="1.20" height="1.30" fill="#1f5b88" />
<rect x="413.82" y="117.00" width="1.00" height="0.70" fill="#2d6e9c" />
<rect x="414.42" y="118.90" width="1.00" height="1.30" fill="#2a6896" />
<rect x="416.40" y="116.50" width="1.20" height="1.30" fill="#1f5b88" />
<rect x="418.98" y="117.00" width="1.00" height="0.70" fill="#2d6e9c" />
<rect x="421.56" y="116.50" width="1.20" height="1.30" fill="#1f5b88" />
<rect x="424.14" y="117.00" width="1.00" height="0.70" fill="#2d6e9c" />
<rect x="426.72" y="116.50" width="1.20" height="1.30" fill="#1f5b88" />
<rect x="427.32" y="118.90" width="1.00" height="1.30" fill="#2a6896" />
<rect x="429.30" y="117.00" width="1.00" height="0.70" fill="#2d6e9c" />
<rect x="429.90" y="118.90" width="1.00" height="1.30" fill="#2a6896" />
<rect x="431.88" y="116.50" width="1.20" height="1.30" fill="#1f5b88" />
<rect x="434.46" y="117.00" width="1.00" height="0.70" fill="#2d6e9c" />
<rect x="435.06" y="118.90" width="1.00" height="1.30" fill="#2a6896" />
<rect x="437.04" y="116.50" width="1.20" height="1.30" fill="#1f5b88" />
<rect x="437.64" y="118.90" width="1.00" height="1.30" fill="#2a6896" />
<rect x="439.62" y="117.00" width="1.00" height="0.70" fill="#2d6e9c" />
<rect x="442.20" y="116.50" width="1.20" height="1.30" fill="#1f5b88" />
<rect x="444.78" y="117.00" width="1.00" height="0.70" fill="#2d6e9c" />
<rect x="445.38" y="118.90" width="1.00" height="1.30" fill="#2a6896" />
<rect x="447.36" y="116.50" width="1.20" height="1.30" fill="#1f5b88" />
<rect x="447.96" y="118.90" width="1.00" height="1.30" fill="#2a6896" />
<rect x="449.94" y="117.00" width="1.00" height="0.70" fill="#2d6e9c" />
<rect x="452.52" y="116.50" width="1.20" height="1.30" fill="#1f5b88" />
<rect x="453.12" y="118.90" width="1.00" height="1.30" fill="#2a6896" />
<rect x="455.10" y="117.00" width="1.00" height="0.70" fill="#2d6e9c" />
<rect x="457.68" y="116.50" width="1.20" height="1.30" fill="#1f5b88" />
<rect x="460.26" y="117.00" width="1.00" height="0.70" fill="#2d6e9c" />
<rect x="462.84" y="116.50" width="1.20" height="1.30" fill="#1f5b88" />
<rect x="465.42" y="117.00" width="1.00" height="0.70" fill="#2d6e9c" />
<rect x="468.00" y="116.50" width="1.20" height="1.30" fill="#1f5b88" />
<rect x="470.58" y="117.00" width="1.00" height="0.70" fill="#2d6e9c" />
<rect x="473.16" y="116.50" width="1.20" height="1.30" fill="#1f5b88" />
<rect x="475.74" y="117.00" width="1.00" height="0.70" fill="#2d6e9c" />
<rect x="478.32" y="116.50" width="1.20" height="1.30" fill="#1f5b88" />
<rect x="480.90" y="117.00" width="1.00" height="0.70" fill="#2d6e9c" />
<rect x="483.48" y="116.50" width="1.20" height="1.30" fill="#1f5b88" />
<rect x="486.06" y="117.00" width="1.00" height="0.70" fill="#2d6e9c" />
<rect x="488.64" y="116.50" width="1.20" height="1.30" fill="#1f5b88" />
<rect x="489.24" y="118.90" width="1.00" height="1.30" fill="#2a6896" />
<rect x="491.22" y="117.00" width="1.00" height="0.70" fill="#2d6e9c" />
<rect x="491.82" y="118.90" width="1.00" height="1.30" fill="#2a6896" />
<rect x="493.80" y="116.50" width="1.20" height="1.30" fill="#1f5b88" />
<rect x="496.38" y="117.00" width="1.00" height="0.70" fill="#2d6e9c" />
<rect x="498.96" y="116.50" width="1.20" height="1.30" fill="#1f5b88" />
<rect x="501.54" y="117.00" width="1.00" height="0.70" fill="#2d6e9c" />
<rect x="502.14" y="118.90" width="1.00" height="1.30" fill="#2a6896" />
<rect x="504.12" y="116.50" width="1.20" height="1.30" fill="#1f5b88" />
<rect x="506.70" y="117.00" width="1.00" height="0.70" fill="#2d6e9c" />
<rect x="509.28" y="116.50" width="1.20" height="1.30" fill="#1f5b88" />
<rect x="509.88" y="118.90" width="1.00" height="1.30" fill="#2a6896" />
<rect x="511.86" y="117.00" width="1.00" height="0.70" fill="#2d6e9c" />
<rect x="514.44" y="116.50" width="1.20" height="1.30" fill="#1f5b88" />
<rect x="519.60" y="116.50" width="1.20" height="1.30" fill="#1f5b88" />
<rect x="520.20" y="118.90" width="1.00" height="1.30" fill="#2a6896" />
<rect x="524.76" y="116.50" width="1.20" height="1.30" fill="#1f5b88" />
<rect x="529.92" y="116.50" width="1.20" height="1.30" fill="#1f5b88" />
<rect x="535.08" y="116.50" width="1.20" height="1.30" fill="#1f5b88" />
<rect x="540.24" y="116.50" width="1.20" height="1.30" fill="#1f5b88" />
<rect x="542.82" y="117.00" width="1.00" height="0.70" fill="#2d6e9c" />
<rect x="545.40" y="116.50" width="1.20" height="1.30" fill="#1f5b88" />
<rect x="547.98" y="117.00" width="1.00" height="0.70" fill="#2d6e9c" />
<rect x="548.58" y="118.90" width="1.00" height="1.30" fill="#2a6896" />
<rect x="550.56" y="116.50" width="1.20" height="1.30" fill="#1f5b88" />
<rect x="551.16" y="118.90" width="1.00" height="1.30" fill="#2a6896" />
<rect x="553.14" y="117.00" width="1.00" height="0.70" fill="#2d6e9c" />
<rect x="555.72" y="116.50" width="1.20" height="1.30" fill="#1f5b88" />
<rect x="558.30" y="117.00" width="1.00" height="0.70" fill="#2d6e9c" />
<rect x="558.90" y="118.90" width="1.00" height="1.30" fill="#2a6896" />
<rect x="560.88" y="116.50" width="1.20" height="1.30" fill="#1f5b88" />
<rect x="563.46" y="117.00" width="1.00" height="0.70" fill="#2d6e9c" />
<rect x="566.04" y="116.50" width="1.20" height="1.30" fill="#1f5b88" />
<rect x="566.64" y="118.90" width="1.00" height="1.30" fill="#2a6896" />
<rect x="568.62" y="117.00" width="1.00" height="0.70" fill="#2d6e9c" />
<rect x="571.20" y="116.50" width="1.20" height="1.30" fill="#1f5b88" />
<rect x="571.80" y="118.90" width="1.00" height="1.30" fill="#2a6896" />
<rect x="573.78" y="117.00" width="1.00" height="0.70" fill="#2d6e9c" />
<rect x="576.36" y="116.50" width="1.20" height="1.30" fill="#1f5b88" />
<rect x="578.94" y="117.00" width="1.00" height="0.70" fill="#2d6e9c" />
<rect x="579.54" y="118.90" width="1.00" height="1.30" fill="#2a6896" />
<rect x="581.52" y="116.50" width="1.20" height="1.30" fill="#1f5b88" />
<rect x="584.10" y="117.00" width="1.00" height="0.70" fill="#2d6e9c" />
<rect x="586.68" y="116.50" width="1.20" height="1.30" fill="#1f5b88" />
<rect x="587.28" y="118.90" width="1.00" height="1.30" fill="#2a6896" />
<rect x="589.26" y="117.00" width="1.00" height="0.70" fill="#2d6e9c" />
<rect x="591.84" y="116.50" width="1.20" height="1.30" fill="#1f5b88" />
<rect x="594.42" y="117.00" width="1.00" height="0.70" fill="#2d6e9c" />
<rect x="595.02" y="118.90" width="1.00" height="1.30" fill="#2a6896" />
<rect x="597.00" y="116.50" width="1.20" height="1.30" fill="#1f5b88" />
<rect x="597.60" y="118.90" width="1.00" height="1.30" fill="#2a6896" />
<rect x="599.58" y="117.00" width="1.00" height="0.70" fill="#2d6e9c" />
<rect x="602.16" y="116.50" width="1.20" height="1.30" fill="#1f5b88" />
<rect x="602.76" y="118.90" width="1.00" height="1.30" fill="#2a6896" />
<rect x="604.74" y="117.00" width="1.00" height="0.70" fill="#2d6e9c" />
<rect x="605.34" y="118.90" width="1.00" height="1.30" fill="#2a6896" />
<rect x="607.32" y="116.50" width="1.20" height="1.30" fill="#1f5b88" />
<rect x="609.90" y="117.00" width="1.00" height="0.70" fill="#2d6e9c" />
<rect x="612.48" y="116.50" width="1.20" height="1.30" fill="#1f5b88" />
<rect x="613.08" y="118.90" width="1.00" height="1.30" fill="#2a6896" />
<rect x="615.06" y="117.00" width="1.00" height="0.70" fill="#2d6e9c" />
<rect x="615.66" y="118.90" width="1.00" height="1.30" fill="#2a6896" />
<rect x="617.64" y="116.50" width="1.20" height="1.30" fill="#1f5b88" />
<rect x="618.24" y="118.90" width="1.00" height="1.30" fill="#2a6896" />
<rect x="620.22" y="117.00" width="1.00" height="0.70" fill="#2d6e9c" />
<rect x="622.80" y="116.50" width="1.20" height="1.30" fill="#1f5b88" />
<rect x="625.38" y="117.00" width="1.00" height="0.70" fill="#2d6e9c" />
<rect x="627.96" y="116.50" width="1.20" height="1.30" fill="#1f5b88" />
<rect x="628.56" y="118.90" width="1.00" height="1.30" fill="#2a6896" />
<rect x="630.54" y="117.00" width="1.00" height="0.70" fill="#2d6e9c" />
<rect x="631.14" y="118.90" width="1.00" height="1.30" fill="#2a6896" />
<rect x="633.12" y="116.50" width="1.20" height="1.30" fill="#1f5b88" />
<rect x="635.70" y="117.00" width="1.00" height="0.70" fill="#2d6e9c" />
<rect x="638.28" y="116.50" width="1.20" height="1.30" fill="#1f5b88" />
<rect x="640.86" y="117.00" width="1.00" height="0.70" fill="#2d6e9c" />
<rect x="641.46" y="118.90" width="1.00" height="1.30" fill="#2a6896" />
<rect x="643.44" y="116.50" width="1.20" height="1.30" fill="#1f5b88" />
<rect x="644.04" y="118.90" width="1.00" height="1.30" fill="#2a6896" />
<rect x="646.02" y="117.00" width="1.00" height="0.70" fill="#2d6e9c" />
<rect x="648.60" y="116.50" width="1.20" height="1.30" fill="#1f5b88" />
<rect x="649.20" y="118.90" width="1.00" height="1.30" fill="#2a6896" />
<rect x="651.18" y="117.00" width="1.00" height="0.70" fill="#2d6e9c" />
<rect x="653.76" y="116.50" width="1.20" height="1.30" fill="#1f5b88" />
<rect x="656.34" y="117.00" width="1.00" height="0.70" fill="#2d6e9c" />
<rect x="656.94" y="118.90" width="1.00" height="1.30" fill="#2a6896" />
<rect x="658.92" y="116.50" width="1.20" height="1.30" fill="#1f5b88" />
<rect x="659.52" y="118.90" width="1.00" height="1.30" fill="#2a6896" />
<rect x="661.50" y="117.00" width="1.00" height="0.70" fill="#2d6e9c" />
<rect x="666.66" y="117.00" width="1.00" height="0.70" fill="#2d6e9c" />
<rect x="674.40" y="116.50" width="1.20" height="1.30" fill="#1f5b88" />
<rect x="682.14" y="117.00" width="1.00" height="0.70" fill="#2d6e9c" />
<rect x="682.74" y="118.90" width="1.00" height="1.30" fill="#2a6896" />
<rect x="689.88" y="116.50" width="1.20" height="1.30" fill="#1f5b88" />
<rect x="690.48" y="118.90" width="1.00" height="1.30" fill="#2a6896" />
<rect x="697.62" y="117.00" width="1.00" height="0.70" fill="#2d6e9c" />
<rect x="698.22" y="118.90" width="1.00" height="1.30" fill="#2a6896" />
<rect x="456.30" y="103.60" width="3.60" height="1.30" fill="#1d5a88" />
<rect x="538.70" y="103.60" width="3.30" height="1.30" fill="#1d5a88" />
<rect x="507.00" y="102.80" width="9.00" height="1.30" fill="#1d5a88" />
<rect x="497.30" y="106.00" width="4.70" height="1.30" fill="#1d5a88" />
<rect x="502.00" y="104.70" width="5.00" height="1.30" fill="#1d5a88" />
<rect x="497.30" y="108.40" width="18.70" height="1.30" fill="#1d5a88" />
<rect x="579.40" y="100.30" width="4.00" height="1.30" fill="#1d5a88" />
<rect x="620.60" y="103.60" width="4.10" height="1.30" fill="#1d5a88" />
<rect x="662.00" y="100.30" width="4.20" height="1.30" fill="#1d5a88" />
<rect x="674.30" y="103.60" width="9.70" height="1.30" fill="#1d5a88" />
<rect x="497.00" y="96.80" width="1.20" height="1.20" fill="#1d5a88" />
<rect x="670.90" y="104.40" width="1.20" height="1.20" fill="#1d5a88" />
<rect x="670.90" y="108.10" width="1.20" height="1.20" fill="#1d5a88" />
<rect x="250.00" y="138.60" width="268.00" height="1.80" fill="#1a3696" />
<rect x="538.75" y="138.60" width="122.90" height="1.80" fill="#1a3696" />
<path d="M281.5,184.8 L321.8,161.4 L654.3,161.4 L693.8,184.8 M321.8,161.4 L321.8,185 M654.3,161.4 L654.3,185" fill="none" stroke="#b9b2ec" stroke-width="0.9"/>
<rect x="288.40" y="159.20" width="2.00" height="1.60" fill="#0c0c8c" />
<rect x="286.95" y="162.45" width="1.70" height="1.50" fill="#0c0c8c" />
<rect x="329.60" y="159.20" width="2.00" height="1.60" fill="#0c0c8c" />
<rect x="328.15" y="162.45" width="1.70" height="1.50" fill="#0c0c8c" />
<rect x="370.80" y="159.20" width="2.00" height="1.60" fill="#0c0c8c" />
<rect x="369.35" y="162.45" width="1.70" height="1.50" fill="#0c0c8c" />
<rect x="412.00" y="159.20" width="2.00" height="1.60" fill="#0c0c8c" />
<rect x="410.55" y="162.45" width="1.70" height="1.50" fill="#0c0c8c" />
<rect x="453.20" y="159.20" width="2.00" height="1.60" fill="#0c0c8c" />
<rect x="451.75" y="162.45" width="1.70" height="1.50" fill="#0c0c8c" />
<rect x="292.05" y="168.00" width="1.70" height="1.60" fill="#0c0c8c" />
<rect x="293.85" y="168.00" width="1.70" height="1.60" fill="#0c0c8c" />
<rect x="310.45" y="170.60" width="1.70" height="1.60" fill="#0c0c8c" />
<rect x="313.05" y="168.00" width="1.70" height="1.60" fill="#0c0c8c" />
<rect x="315.05" y="168.00" width="1.70" height="1.60" fill="#0c0c8c" />
<rect x="333.25" y="168.00" width="1.70" height="1.60" fill="#0c0c8c" />
<rect x="335.05" y="168.00" width="1.70" height="1.60" fill="#0c0c8c" />
<rect x="351.65" y="170.60" width="1.70" height="1.60" fill="#0c0c8c" />
<rect x="354.25" y="168.00" width="1.70" height="1.60" fill="#0c0c8c" />
<rect x="356.25" y="168.00" width="1.70" height="1.60" fill="#0c0c8c" />
<rect x="374.45" y="168.00" width="1.70" height="1.60" fill="#0c0c8c" />
<rect x="376.25" y="168.00" width="1.70" height="1.60" fill="#0c0c8c" />
<rect x="392.85" y="170.60" width="1.70" height="1.60" fill="#0c0c8c" />
<rect x="395.45" y="168.00" width="1.70" height="1.60" fill="#0c0c8c" />
<rect x="397.45" y="168.00" width="1.70" height="1.60" fill="#0c0c8c" />
<rect x="415.65" y="168.00" width="1.70" height="1.60" fill="#0c0c8c" />
<rect x="417.45" y="168.00" width="1.70" height="1.60" fill="#0c0c8c" />
<rect x="434.05" y="170.60" width="1.70" height="1.60" fill="#0c0c8c" />
<rect x="436.65" y="168.00" width="1.70" height="1.60" fill="#0c0c8c" />
<rect x="438.65" y="168.00" width="1.70" height="1.60" fill="#0c0c8c" />
<rect x="464.00" y="175.00" width="12.30" height="1.70" fill="#0c0c8c" />
<rect x="484.20" y="175.00" width="13.10" height="1.70" fill="#0c0c8c" />
<rect x="505.20" y="175.00" width="12.80" height="1.70" fill="#0c0c8c" />
<rect x="455.15" y="180.20" width="1.70" height="1.60" fill="#0c0c8c" />
<rect x="457.65" y="180.20" width="1.70" height="1.60" fill="#0c0c8c" />
<rect x="475.45" y="180.20" width="1.70" height="1.60" fill="#0c0c8c" />
<rect x="477.95" y="180.20" width="1.70" height="1.60" fill="#0c0c8c" />
<rect x="496.45" y="180.20" width="1.70" height="1.60" fill="#0c0c8c" />
<rect x="498.95" y="180.20" width="1.70" height="1.60" fill="#0c0c8c" />
<rect x="538.45" y="168.00" width="1.70" height="1.60" fill="#0c0c8c" />
<rect x="541.05" y="168.00" width="1.70" height="1.60" fill="#0c0c8c" />
<rect x="543.65" y="168.00" width="1.70" height="1.60" fill="#0c0c8c" />
<rect x="546.85" y="168.00" width="1.70" height="1.60" fill="#0c0c8c" />
<rect x="549.45" y="171.20" width="1.70" height="1.60" fill="#0c0c8c" />
<rect x="557.75" y="168.00" width="1.70" height="1.60" fill="#0c0c8c" />
<rect x="560.35" y="168.00" width="1.70" height="1.60" fill="#0c0c8c" />
<rect x="562.95" y="168.00" width="1.70" height="1.60" fill="#0c0c8c" />
<rect x="566.15" y="168.00" width="1.70" height="1.60" fill="#0c0c8c" />
<rect x="568.75" y="171.20" width="1.70" height="1.60" fill="#0c0c8c" />
<rect x="578.65" y="168.00" width="1.70" height="1.60" fill="#0c0c8c" />
<rect x="581.25" y="168.00" width="1.70" height="1.60" fill="#0c0c8c" />
<rect x="583.85" y="168.00" width="1.70" height="1.60" fill="#0c0c8c" />
<rect x="587.05" y="168.00" width="1.70" height="1.60" fill="#0c0c8c" />
<rect x="589.65" y="171.20" width="1.70" height="1.60" fill="#0c0c8c" />
<rect x="598.55" y="168.00" width="1.70" height="1.60" fill="#0c0c8c" />
<rect x="601.15" y="168.00" width="1.70" height="1.60" fill="#0c0c8c" />
<rect x="603.75" y="168.00" width="1.70" height="1.60" fill="#0c0c8c" />
<rect x="606.95" y="168.00" width="1.70" height="1.60" fill="#0c0c8c" />
<rect x="609.55" y="171.20" width="1.70" height="1.60" fill="#0c0c8c" />
<rect x="620.15" y="168.00" width="1.70" height="1.60" fill="#0c0c8c" />
<rect x="622.75" y="168.00" width="1.70" height="1.60" fill="#0c0c8c" />
<rect x="625.35" y="168.00" width="1.70" height="1.60" fill="#0c0c8c" />
<rect x="628.55" y="168.00" width="1.70" height="1.60" fill="#0c0c8c" />
<rect x="631.15" y="171.20" width="1.70" height="1.60" fill="#0c0c8c" />
<rect x="640.15" y="168.00" width="1.70" height="1.60" fill="#0c0c8c" />
<rect x="642.75" y="168.00" width="1.70" height="1.60" fill="#0c0c8c" />
<rect x="645.35" y="168.00" width="1.70" height="1.60" fill="#0c0c8c" />
<rect x="648.55" y="168.00" width="1.70" height="1.60" fill="#0c0c8c" />
<rect x="651.15" y="171.20" width="1.70" height="1.60" fill="#0c0c8c" />
<rect x="555.00" y="180.30" width="2.00" height="1.60" fill="#0c0c8c" />
<rect x="574.00" y="180.30" width="5.50" height="1.60" fill="#0c0c8c" />
<rect x="594.50" y="180.30" width="3.60" height="1.60" fill="#0c0c8c" />
<rect x="615.70" y="180.30" width="5.40" height="1.60" fill="#0c0c8c" />
<rect x="635.60" y="180.30" width="1.80" height="1.60" fill="#0c0c8c" />
<rect x="657.40" y="180.30" width="4.60" height="1.60" fill="#0c0c8c" />
<rect x="637.70" y="175.20" width="2.00" height="1.60" fill="#0c0c8c" />
<rect x="662.40" y="175.20" width="1.80" height="1.60" fill="#0c0c8c" />
<rect x="665.40" y="175.20" width="1.80" height="1.60" fill="#0c0c8c" />
<rect x="668.40" y="175.20" width="1.80" height="1.60" fill="#0c0c8c" />
<rect x="671.40" y="175.20" width="1.80" height="1.60" fill="#0c0c8c" />
<rect x="674.60" y="175.20" width="18.00" height="1.80" fill="#0c0c8c" />
<rect x="455.00" y="200.80" width="62.00" height="0.80" fill="#4a1a96" opacity="0.55"/>
<polygon points="455.80,200.95 456.30,198.02 456.80,198.21 457.30,198.06 457.80,197.99 458.30,199.87 458.80,198.17 459.30,198.15 459.80,198.04 460.30,198.50 460.80,199.06 461.10,199.40 461.10,203.17 460.80,203.40 460.30,203.92 459.80,204.28 459.30,204.49 458.80,204.32 458.30,202.51 457.80,204.63 457.30,204.59 456.80,204.44 456.30,204.41 455.80,201.55" fill="#4a1a96"/>
<polygon points="466.00,200.95 466.50,198.07 467.00,198.21 467.50,197.90 468.00,198.01 468.50,199.93 469.00,197.98 469.50,198.08 470.00,198.18 470.50,198.67 471.00,199.15 471.30,199.28 471.30,203.23 471.00,203.44 470.50,203.87 470.00,204.30 469.50,204.53 469.00,204.65 468.50,202.59 468.00,204.45 467.50,204.39 467.00,204.53 466.50,204.56 466.00,201.55" fill="#4a1a96"/>
<polygon points="476.20,200.95 476.70,198.16 477.20,198.00 477.70,198.08 478.20,198.03 478.70,199.88 479.20,198.08 479.70,198.20 480.20,198.12 480.70,198.68 481.20,199.02 481.50,199.38 481.50,203.08 481.20,203.36 480.70,203.90 480.20,204.27 479.70,204.30 479.20,204.43 478.70,202.61 478.20,204.51 477.70,204.49 477.20,204.38 476.70,204.36 476.20,201.55" fill="#4a1a96"/>
<polygon points="486.90,200.95 487.40,198.09 487.90,198.21 488.40,198.02 488.90,197.90 489.40,199.97 489.90,198.10 490.40,197.90 490.90,198.16 491.40,198.70 491.90,198.94 492.20,199.25 492.20,203.13 491.90,203.44 491.40,203.88 490.90,204.45 490.40,204.58 489.90,204.36 489.40,202.61 488.90,204.54 488.40,204.29 487.90,204.63 487.40,204.38 486.90,201.55" fill="#4a1a96"/>
<polygon points="497.00,200.95 497.50,197.91 498.00,198.19 498.50,197.94 499.00,198.10 499.50,199.94 500.00,198.17 500.50,198.17 501.00,198.12 501.50,198.41 502.00,199.07 502.30,199.40 502.30,203.11 502.00,203.54 501.50,203.99 501.00,204.46 500.50,204.59 500.00,204.33 499.50,202.63 499.00,204.58 498.50,204.46 498.00,204.52 497.50,204.46 497.00,201.55" fill="#4a1a96"/>
<polygon points="507.30,200.95 507.80,198.09 508.30,198.07 508.80,198.03 509.30,198.22 509.80,199.90 510.30,198.02 510.80,198.13 511.30,198.04 511.80,198.52 512.30,199.06 512.60,199.31 512.60,203.23 512.30,203.46 511.80,203.95 511.30,204.54 510.80,204.38 510.30,204.57 509.80,202.58 509.30,204.58 508.80,204.28 508.30,204.62 507.80,204.45 507.30,201.55" fill="#4a1a96"/>
<rect x="538.00" y="200.80" width="162.00" height="0.80" fill="#4a1a96" opacity="0.55"/>
<polygon points="538.50,200.90 539.00,199.31 539.50,198.22 540.00,198.05 540.50,196.54 541.00,199.39 541.50,198.04 542.00,197.96 542.50,195.57 543.00,195.36 543.50,198.18 544.00,198.29 544.50,197.50 545.00,198.06 545.50,199.68 546.00,199.69 546.50,196.98 547.00,197.43 547.50,197.82 548.00,199.10 548.50,197.72 549.00,197.33 549.50,197.85 550.00,199.59 550.50,199.00 551.00,197.56 551.50,197.66 552.00,196.02 552.50,199.70 553.00,198.20 553.50,197.79 554.00,198.04 554.50,196.36 555.00,198.83 555.50,197.39 556.00,197.22 556.50,198.28 557.00,199.22 557.50,199.09 558.00,196.33 558.50,198.28 559.00,196.85 559.50,199.29 560.00,197.16 560.50,197.89 561.00,198.15 561.50,199.18 562.00,199.02 562.50,197.01 563.00,198.22 563.50,196.84 564.00,199.32 564.50,197.04 565.00,196.83 565.50,198.24 566.00,196.97 566.50,199.52 567.00,200.90 567.00,200.90 567.00,201.50 567.00,201.50 566.50,202.60 566.00,204.63 565.50,204.59 565.00,206.08 564.50,204.19 564.00,203.28 563.50,206.05 563.00,204.58 562.50,204.17 562.00,203.34 561.50,204.07 561.00,205.76 560.50,204.09 560.00,205.88 559.50,203.42 559.00,205.71 558.50,205.76 558.00,204.34 557.50,203.46 557.00,203.13 556.50,204.08 556.00,204.58 555.50,205.07 555.00,202.97 554.50,205.16 554.00,204.95 553.50,204.53 553.00,205.77 552.50,203.33 552.00,204.75 551.50,205.75 551.00,205.08 550.50,203.04 550.00,203.79 549.50,204.06 549.00,205.70 548.50,204.66 548.00,202.79 547.50,204.30 547.00,204.73 546.50,205.80 546.00,203.51 545.50,202.69 545.00,205.93 544.50,205.92 544.00,205.64 543.50,203.54 543.00,205.09 542.50,204.94 542.00,206.12 541.50,204.92 541.00,203.09 540.50,206.03 540.00,205.51 539.50,205.42 539.00,202.86 538.50,201.50" fill="#4a1a96"/>
<polygon points="575.00,200.90 575.50,199.96 576.00,196.67 576.50,197.89 577.00,198.36 577.50,199.63 578.00,198.37 578.50,196.45 579.00,197.60 579.50,197.62 580.00,199.67 580.50,197.85 581.00,197.60 581.50,197.06 582.00,199.09 582.50,199.06 583.00,196.45 583.50,197.75 584.00,197.01 584.50,199.61 585.00,197.34 585.50,197.44 586.00,197.66 586.50,199.23 587.00,199.38 587.50,198.24 588.00,197.33 588.50,197.81 589.00,198.87 589.50,198.30 590.00,197.15 590.50,196.66 591.00,198.14 591.50,198.88 592.00,195.86 592.50,197.89 593.00,198.11 593.50,199.66 594.00,199.40 594.50,197.75 595.00,196.54 595.50,196.38 596.00,199.30 596.50,196.99 597.00,197.67 597.50,196.72 598.00,198.86 598.50,199.56 599.00,197.34 599.50,196.99 600.00,197.93 600.50,199.71 601.00,196.85 601.50,197.99 602.00,196.99 602.50,198.02 603.00,198.87 603.50,197.63 604.00,198.27 604.50,197.97 605.00,199.38 605.50,199.73 606.00,196.82 606.50,196.39 607.00,196.28 607.50,198.91 608.00,197.89 608.50,199.67 608.75,200.90 608.75,201.50 608.50,202.63 608.00,205.01 607.50,204.01 607.00,204.60 606.50,205.31 606.00,205.89 605.50,202.70 605.00,204.25 604.50,206.26 604.00,205.01 603.50,205.73 603.00,202.75 602.50,204.04 602.00,204.81 601.50,207.98 601.00,206.09 600.50,203.00 600.00,208.09 599.50,205.99 599.00,204.42 598.50,203.35 598.00,202.93 597.50,205.56 597.00,204.90 596.50,207.95 596.00,203.27 595.50,207.28 595.00,205.01 594.50,204.98 594.00,203.45 593.50,202.70 593.00,204.55 592.50,205.93 592.00,205.17 591.50,203.31 591.00,204.35 590.50,205.80 590.00,204.03 589.50,205.50 589.00,204.30 588.50,204.54 588.00,205.33 587.50,204.60 587.00,203.13 586.50,203.46 586.00,204.22 585.50,205.59 585.00,204.49 584.50,202.79 584.00,204.65 583.50,205.56 583.00,204.29 582.50,204.02 582.00,202.68 581.50,205.92 581.00,206.01 580.50,204.58 580.00,203.42 579.50,206.45 579.00,204.84 578.50,205.51 578.00,205.58 577.50,202.96 577.00,205.05 576.50,207.86 576.00,205.08 575.50,202.70 575.00,201.50" fill="#4a1a96"/>
<polygon points="615.50,200.90 616.00,199.84 616.50,197.96 617.00,198.30 617.50,196.54 618.00,199.67 618.50,197.89 619.00,196.82 619.50,196.63 620.00,196.84 620.50,199.62 621.00,197.55 621.50,196.70 622.00,197.39 622.50,199.19 623.00,198.86 623.50,196.58 624.00,196.41 624.50,197.92 625.00,199.52 625.50,198.35 626.00,197.72 626.50,198.24 627.00,199.17 627.50,199.38 628.00,197.72 628.50,196.58 629.00,195.05 629.50,199.37 630.00,195.85 630.50,195.31 631.00,197.60 631.50,195.67 632.00,199.01 632.50,196.42 633.00,196.45 633.50,196.66 634.00,199.38 634.50,199.56 635.00,198.12 635.50,198.28 636.00,196.63 636.50,199.18 637.00,197.49 637.50,198.32 638.00,196.79 638.50,199.32 639.00,199.68 639.50,197.05 640.00,197.31 640.50,196.40 641.00,199.08 641.50,197.35 642.00,194.87 642.50,196.80 643.00,196.68 643.50,199.57 644.00,198.29 644.50,196.96 645.00,198.13 645.50,198.95 646.00,199.66 646.50,196.72 647.00,197.62 647.50,196.83 648.00,199.17 648.50,196.29 649.00,199.21 649.30,200.90 649.30,201.50 649.00,203.02 648.50,204.03 648.00,203.56 647.50,204.13 647.00,205.61 646.50,204.58 646.00,203.56 645.50,203.16 645.00,205.13 644.50,205.88 644.00,204.41 643.50,202.88 643.00,204.33 642.50,204.36 642.00,205.96 641.50,206.01 641.00,203.40 640.50,204.31 640.00,204.14 639.50,204.20 639.00,203.75 638.50,202.74 638.00,205.64 637.50,205.31 637.00,205.39 636.50,202.92 636.00,204.27 635.50,206.86 635.00,204.54 634.50,203.01 634.00,203.43 633.50,204.36 633.00,204.83 632.50,208.10 632.00,203.54 631.50,205.95 631.00,205.07 630.50,205.91 630.00,204.37 629.50,203.40 629.00,204.45 628.50,206.09 628.00,205.20 627.50,202.90 627.00,202.72 626.50,204.24 626.00,204.45 625.50,204.71 625.00,203.20 624.50,204.79 624.00,204.25 623.50,204.96 623.00,203.18 622.50,202.91 622.00,205.73 621.50,207.13 621.00,206.08 620.50,203.46 620.00,204.44 619.50,204.64 619.00,205.78 618.50,204.89 618.00,203.10 617.50,208.13 617.00,205.17 616.50,207.43 616.00,203.08 615.50,201.50" fill="#4a1a96"/>
<polygon points="657.00,200.90 657.50,199.19 658.00,196.29 658.50,195.07 659.00,195.90 659.50,197.24 660.00,198.11 660.50,195.06 661.00,194.70 661.50,197.24 662.00,196.95 662.50,197.95 663.00,197.18 663.50,197.25 664.00,196.10 664.50,196.90 665.00,198.07 665.50,198.20 666.00,196.85 666.50,195.89 667.00,196.10 667.50,197.89 668.00,198.13 668.50,196.53 669.00,196.58 669.50,195.14 670.00,195.29 670.50,197.27 671.00,196.18 671.50,197.16 672.00,193.77 672.50,193.55 673.00,198.61 673.50,196.27 674.00,197.10 674.50,194.90 675.00,196.82 675.50,197.81 676.00,197.21 676.50,196.72 677.00,195.91 677.50,197.26 678.00,198.71 678.50,198.54 679.00,196.85 679.50,194.04 680.00,197.13 680.50,198.13 681.00,197.88 681.50,196.94 682.00,196.67 682.50,196.43 683.00,196.72 683.50,198.10 684.00,196.05 684.50,195.88 685.00,196.16 685.50,197.16 686.00,198.76 686.50,196.57 687.00,197.20 687.50,197.22 688.00,198.47 688.50,199.48 689.00,199.25 689.50,199.09 690.00,199.67 690.50,199.86 691.00,200.50 691.50,200.74 692.00,200.90 692.00,200.90 692.00,201.50 692.00,201.50 691.50,201.68 691.00,201.87 690.50,202.51 690.00,202.64 689.50,203.04 689.00,203.46 688.50,202.83 688.00,203.61 687.50,204.48 687.00,204.99 686.50,205.54 686.00,203.52 685.50,205.35 685.00,206.46 684.50,205.51 684.00,206.04 683.50,204.38 683.00,205.65 682.50,206.32 682.00,206.52 681.50,205.55 681.00,204.78 680.50,204.02 680.00,206.37 679.50,205.92 679.00,206.61 678.50,204.15 678.00,204.14 677.50,205.46 677.00,205.28 676.50,206.24 676.00,205.78 675.50,204.16 675.00,206.26 674.50,205.80 674.00,205.29 673.50,206.43 673.00,203.72 672.50,206.61 672.00,206.53 671.50,206.06 671.00,206.13 670.50,204.86 670.00,205.18 669.50,206.11 669.00,206.27 668.50,206.45 668.00,204.33 667.50,203.99 667.00,206.61 666.50,205.16 666.00,206.14 665.50,204.09 665.00,204.48 664.50,205.20 664.00,207.80 663.50,206.46 663.00,206.53 662.50,203.85 662.00,206.09 661.50,206.00 661.00,205.51 660.50,206.55 660.00,204.10 659.50,206.15 659.00,206.36 658.50,205.37 658.00,205.88 657.50,203.45 657.00,201.50" fill="#4a1a96"/>
<rect x="249.00" y="232.40" width="218.00" height="0.80" fill="#6a0a86" opacity="0.55"/>
<polygon points="249.50,232.50 250.00,231.88 250.50,231.74 251.00,231.39 251.50,230.78 252.00,230.42 252.50,230.02 253.00,229.65 253.50,229.66 254.00,229.12 254.50,228.38 255.00,229.07 255.50,228.54 256.00,229.28 256.50,228.53 257.00,228.87 257.50,228.49 258.00,227.46 258.50,229.21 259.00,229.02 259.50,226.54 260.00,228.42 260.50,227.08 261.00,227.04 261.50,229.27 262.00,228.42 262.50,228.79 263.00,228.57 263.50,228.89 264.00,228.86 264.50,228.94 265.00,228.94 265.50,229.55 266.00,228.72 266.50,228.35 267.00,229.52 267.50,229.14 268.00,228.43 268.50,229.13 269.00,228.90 269.50,229.03 270.00,228.52 270.50,228.92 271.00,229.14 271.50,227.08 272.00,226.62 272.50,229.55 273.00,228.73 273.50,228.78 274.00,228.70 274.50,228.60 275.00,228.58 275.50,228.52 276.00,229.18 276.50,227.06 277.00,229.51 277.50,226.56 278.00,228.81 278.50,229.04 279.00,227.96 279.50,228.01 280.00,229.40 280.50,226.90 281.00,228.66 281.50,228.77 282.00,229.24 282.50,229.54 283.00,229.17 283.50,228.95 284.00,229.01 284.50,229.10 285.00,229.07 285.50,227.20 286.00,228.67 286.50,228.33 287.00,229.02 287.50,228.80 288.00,229.56 288.50,226.75 289.00,228.54 289.50,228.49 290.00,229.12 290.50,229.31 291.00,228.80 291.50,229.24 292.00,229.45 292.50,228.83 293.00,228.96 293.50,229.33 294.00,229.05 294.50,226.42 295.00,228.57 295.50,227.29 296.00,228.47 296.50,228.58 297.00,228.53 297.50,227.87 298.00,228.86 298.50,228.41 299.00,229.41 299.50,228.75 300.00,229.00 300.50,229.28 301.00,228.42 301.50,228.57 302.00,229.49 302.50,228.71 303.00,229.43 303.50,228.95 304.00,228.71 304.50,229.51 305.00,228.47 305.50,229.44 306.00,228.99 306.50,228.77 307.00,228.66 307.50,229.22 308.00,228.50 308.50,227.66 309.00,229.49 309.50,228.96 310.00,229.10 310.50,229.44 311.00,228.64 311.50,228.54 312.00,228.51 312.50,228.41 313.00,229.33 313.50,229.46 314.00,229.21 314.50,228.54 315.00,228.64 315.50,228.54 316.00,228.94 316.50,228.46 317.00,229.10 317.50,229.55 318.00,229.41 318.50,229.16 319.00,229.48 319.50,228.91 320.00,228.34 320.50,227.78 321.00,226.96 321.50,228.83 322.00,226.65 322.50,228.94 323.00,229.05 323.50,229.37 324.00,228.52 324.50,228.50 325.00,228.58 325.50,229.01 326.00,226.75 326.50,228.35 327.00,228.76 327.50,227.45 328.00,228.34 328.50,228.54 329.00,228.75 329.50,228.88 330.00,228.90 330.50,229.18 331.00,228.36 331.50,228.89 332.00,229.19 332.50,229.45 333.00,228.84 333.50,228.98 334.00,229.17 334.50,227.54 335.00,228.47 335.50,229.20 336.00,229.36 336.50,229.48 337.00,229.42 337.50,229.37 338.00,228.78 338.50,228.63 339.00,228.57 339.50,228.46 340.00,228.93 340.50,228.57 341.00,228.99 341.50,229.07 342.00,228.57 342.50,229.33 343.00,228.83 343.50,228.50 344.00,227.46 344.50,228.85 345.00,228.88 345.50,228.70 346.00,229.12 346.50,229.44 347.00,228.84 347.50,229.01 348.00,228.89 348.50,228.33 349.00,228.43 349.50,228.44 350.00,228.92 350.50,228.77 351.00,228.76 351.50,227.68 352.00,228.50 352.50,228.93 353.00,228.89 353.50,229.41 354.00,229.43 354.50,227.12 355.00,228.59 355.50,227.93 356.00,228.83 356.50,229.49 357.00,229.01 357.50,228.39 358.00,228.53 358.50,228.94 359.00,228.65 359.50,228.95 360.00,229.11 360.50,228.85 361.00,229.05 361.50,229.12 362.00,229.26 362.50,227.95 363.00,228.51 363.50,228.55 364.00,229.09 364.50,228.92 365.00,228.67 365.50,229.10 366.00,228.46 366.50,229.22 367.00,228.84 367.50,229.34 368.00,229.42 368.50,229.19 369.00,229.40 369.50,228.41 370.00,228.00 370.50,228.72 371.00,228.68 371.50,227.09 372.00,226.90 372.50,229.36 373.00,229.51 373.50,228.50 374.00,229.01 374.50,228.51 375.00,226.68 375.50,229.42 376.00,228.62 376.50,228.62 377.00,228.37 377.50,228.63 378.00,229.49 378.50,228.39 379.00,228.67 379.50,228.34 380.00,229.49 380.50,229.17 381.00,229.26 381.50,228.38 382.00,229.38 382.50,228.87 383.00,228.81 383.50,229.42 384.00,229.48 384.50,229.00 385.00,227.57 385.50,226.42 386.00,226.45 386.50,229.01 387.00,228.40 387.50,228.74 388.00,229.53 388.50,229.33 389.00,229.35 389.50,229.15 390.00,229.10 390.50,229.26 391.00,228.53 391.50,228.94 392.00,228.83 392.50,227.43 393.00,229.01 393.50,228.50 394.00,229.20 394.50,229.13 395.00,228.42 395.50,228.85 396.00,229.15 396.50,228.47 397.00,228.54 397.50,229.19 398.00,228.74 398.50,229.52 399.00,229.45 399.50,229.04 400.00,229.42 400.50,229.42 401.00,228.89 401.50,227.82 402.00,228.82 402.50,229.01 403.00,228.61 403.50,229.43 404.00,228.35 404.50,228.58 405.00,229.54 405.50,228.67 406.00,228.46 406.50,229.35 407.00,228.70 407.50,228.63 408.00,228.80 408.50,229.42 409.00,229.32 409.50,228.03 410.00,229.33 410.50,229.08 411.00,228.69 411.50,229.13 412.00,228.55 412.50,228.70 413.00,228.50 413.50,229.46 414.00,228.82 414.50,228.97 415.00,229.55 415.50,227.40 416.00,228.72 416.50,229.28 417.00,228.42 417.50,228.62 418.00,229.27 418.50,228.63 419.00,228.92 419.50,227.69 420.00,229.48 420.50,229.61 421.00,229.91 421.50,229.34 422.00,229.67 422.50,229.03 423.00,229.98 423.50,229.73 424.00,230.06 424.50,229.91 425.00,229.51 425.50,229.65 426.00,229.57 426.50,229.55 427.00,230.17 427.50,229.54 428.00,229.84 428.50,229.46 429.00,230.20 429.50,230.13 430.00,229.73 430.50,230.32 431.00,230.01 431.50,230.24 432.00,230.23 432.50,230.19 433.00,230.20 433.50,230.42 434.00,230.50 434.50,230.19 435.00,230.17 435.50,230.58 436.00,230.88 436.50,230.91 437.00,230.44 437.50,230.60 438.00,230.41 438.50,230.22 439.00,230.96 439.50,231.11 440.00,231.14 440.50,231.14 441.00,231.26 441.50,231.01 442.00,231.18 442.50,231.17 443.00,231.38 443.50,231.14 444.00,230.94 444.50,231.58 445.00,231.58 445.50,231.53 446.00,231.35 446.50,231.49 447.00,231.23 447.50,231.70 448.00,231.79 448.50,231.82 449.00,231.81 449.50,231.88 450.00,231.91 450.50,232.00 451.00,231.97 451.50,231.98 452.00,231.97 452.50,232.08 453.00,232.13 453.50,232.14 454.00,232.21 454.50,232.21 455.00,232.27 455.50,232.27 456.00,232.36 456.50,232.42 457.00,232.45 457.50,232.50 457.50,232.50 457.50,233.10 457.50,233.10 457.00,233.14 456.50,233.19 456.00,233.23 455.50,233.30 455.00,233.30 454.50,233.51 454.00,233.50 453.50,233.49 453.00,233.59 452.50,233.60 452.00,233.61 451.50,233.62 451.00,233.56 450.50,233.70 450.00,233.93 449.50,233.90 449.00,233.83 448.50,234.31 448.00,233.89 447.50,234.07 447.00,233.88 446.50,233.89 446.00,233.92 445.50,234.28 445.00,234.47 444.50,234.38 444.00,234.06 443.50,234.17 443.00,234.51 442.50,234.37 442.00,234.61 441.50,234.63 441.00,234.70 440.50,234.81 440.00,234.44 439.50,234.51 439.00,234.92 438.50,234.94 438.00,234.91 437.50,234.79 437.00,234.86 436.50,234.60 436.00,234.74 435.50,234.78 435.00,234.78 434.50,235.69 434.00,235.23 433.50,236.55 433.00,235.56 432.50,235.44 432.00,235.16 431.50,235.40 431.00,235.04 430.50,235.08 430.00,235.09 429.50,235.09 429.00,235.54 428.50,235.51 428.00,235.55 427.50,235.41 427.00,235.75 426.50,236.11 426.00,237.66 425.50,236.20 425.00,235.61 424.50,235.46 424.00,235.96 423.50,236.30 423.00,235.72 422.50,235.93 422.00,235.94 421.50,237.27 421.00,236.64 420.50,235.98 420.00,236.87 419.50,236.25 419.00,236.41 418.50,236.66 418.00,236.23 417.50,236.87 417.00,236.00 416.50,236.70 416.00,236.38 415.50,237.28 415.00,238.42 414.50,236.77 414.00,236.10 413.50,236.45 413.00,236.54 412.50,236.53 412.00,236.08 411.50,236.23 411.00,238.84 410.50,236.22 410.00,236.74 409.50,236.07 409.00,236.60 408.50,237.21 408.00,236.17 407.50,239.10 407.00,237.08 406.50,236.98 406.00,236.75 405.50,236.58 405.00,236.79 404.50,236.11 404.00,236.75 403.50,237.09 403.00,236.18 402.50,237.13 402.00,237.51 401.50,236.76 401.00,236.36 400.50,238.94 400.00,236.27 399.50,236.71 399.00,236.87 398.50,236.28 398.00,236.42 397.50,236.76 397.00,236.12 396.50,237.27 396.00,236.62 395.50,238.00 395.00,236.25 394.50,236.59 394.00,236.87 393.50,237.12 393.00,237.71 392.50,239.13 392.00,236.14 391.50,236.67 391.00,236.93 390.50,236.09 390.00,236.73 389.50,236.27 389.00,237.03 388.50,236.84 388.00,237.02 387.50,236.36 387.00,236.85 386.50,237.71 386.00,236.75 385.50,236.99 385.00,237.67 384.50,236.18 384.00,236.39 383.50,236.40 383.00,236.62 382.50,237.00 382.00,236.75 381.50,236.48 381.00,236.34 380.50,236.21 380.00,236.49 379.50,236.84 379.00,237.06 378.50,237.60 378.00,236.92 377.50,237.09 377.00,236.57 376.50,238.88 376.00,236.15 375.50,237.04 375.00,236.81 374.50,238.78 374.00,238.61 373.50,236.76 373.00,236.43 372.50,236.29 372.00,238.66 371.50,236.27 371.00,236.35 370.50,236.48 370.00,236.39 369.50,237.02 369.00,236.94 368.50,236.12 368.00,236.75 367.50,237.11 367.00,237.93 366.50,237.01 366.00,236.19 365.50,236.35 365.00,236.37 364.50,236.33 364.00,237.25 363.50,236.24 363.00,236.20 362.50,236.93 362.00,236.08 361.50,236.35 361.00,236.12 360.50,236.18 360.00,236.28 359.50,237.04 359.00,236.32 358.50,237.24 358.00,236.42 357.50,237.12 357.00,238.50 356.50,237.16 356.00,236.48 355.50,236.38 355.00,236.45 354.50,238.84 354.00,236.25 353.50,237.65 353.00,237.30 352.50,236.74 352.00,236.78 351.50,236.91 351.00,236.09 350.50,236.80 350.00,236.68 349.50,236.57 349.00,236.91 348.50,238.87 348.00,237.07 347.50,236.83 347.00,237.15 346.50,236.51 346.00,237.23 345.50,236.53 345.00,237.30 344.50,236.67 344.00,239.03 343.50,237.10 343.00,236.15 342.50,236.42 342.00,237.11 341.50,236.74 341.00,236.62 340.50,237.14 340.00,237.25 339.50,236.05 339.00,236.93 338.50,236.98 338.00,237.11 337.50,236.46 337.00,236.32 336.50,236.53 336.00,236.12 335.50,237.28 335.00,236.34 334.50,236.78 334.00,236.35 333.50,236.73 333.00,236.86 332.50,236.73 332.00,236.55 331.50,236.23 331.00,236.69 330.50,236.86 330.00,236.59 329.50,237.20 329.00,236.37 328.50,238.98 328.00,237.02 327.50,236.68 327.00,238.03 326.50,237.22 326.00,237.11 325.50,237.28 325.00,236.47 324.50,236.70 324.00,237.22 323.50,236.76 323.00,236.21 322.50,236.67 322.00,236.94 321.50,238.32 321.00,236.29 320.50,238.86 320.00,237.77 319.50,238.33 319.00,237.14 318.50,236.94 318.00,236.94 317.50,236.69 317.00,236.25 316.50,236.38 316.00,236.06 315.50,236.46 315.00,238.11 314.50,238.43 314.00,236.30 313.50,236.15 313.00,237.01 312.50,236.32 312.00,236.70 311.50,237.99 311.00,237.90 310.50,237.89 310.00,237.29 309.50,236.40 309.00,237.17 308.50,237.18 308.00,236.46 307.50,236.56 307.00,236.74 306.50,237.62 306.00,236.47 305.50,237.21 305.00,237.16 304.50,237.21 304.00,236.06 303.50,236.25 303.00,236.45 302.50,236.42 302.00,236.22 301.50,236.93 301.00,239.02 300.50,236.09 300.00,236.24 299.50,237.25 299.00,237.25 298.50,236.12 298.00,237.14 297.50,237.69 297.00,239.12 296.50,236.58 296.00,236.65 295.50,236.07 295.00,236.24 294.50,236.51 294.00,238.31 293.50,236.92 293.00,236.78 292.50,237.17 292.00,237.06 291.50,236.99 291.00,236.89 290.50,236.99 290.00,236.15 289.50,237.06 289.00,237.13 288.50,237.16 288.00,236.37 287.50,237.17 287.00,237.16 286.50,237.09 286.00,237.08 285.50,236.41 285.00,237.03 284.50,236.85 284.00,236.89 283.50,236.12 283.00,236.96 282.50,238.55 282.00,239.12 281.50,236.93 281.00,238.93 280.50,236.28 280.00,236.06 279.50,237.26 279.00,236.06 278.50,236.17 278.00,237.22 277.50,236.60 277.00,236.19 276.50,237.22 276.00,236.57 275.50,237.03 275.00,237.19 274.50,237.55 274.00,236.31 273.50,236.83 273.00,237.03 272.50,236.28 272.00,236.73 271.50,237.03 271.00,236.44 270.50,237.27 270.00,236.55 269.50,236.74 269.00,237.01 268.50,237.13 268.00,236.08 267.50,237.28 267.00,236.81 266.50,236.13 266.00,237.10 265.50,237.10 265.00,236.67 264.50,236.11 264.00,236.37 263.50,236.97 263.00,237.10 262.50,237.02 262.00,237.04 261.50,237.02 261.00,236.36 260.50,236.06 260.00,237.03 259.50,237.12 259.00,236.84 258.50,236.35 258.00,236.27 257.50,236.38 257.00,236.20 256.50,237.07 256.00,237.25 255.50,236.84 255.00,236.31 254.50,236.70 254.00,236.37 253.50,236.43 253.00,235.63 252.50,235.91 252.00,235.58 251.50,234.90 251.00,234.42 250.50,234.04 250.00,233.60 249.50,233.10" fill="#6a0a86"/>
<rect x="536.00" y="232.20" width="177.00" height="0.80" fill="#6a0a86" opacity="0.55"/>
<polygon points="537.00,232.30 537.50,231.77 538.00,231.12 538.50,230.74 539.00,229.68 539.50,229.49 540.00,227.82 540.50,228.16 541.00,228.70 541.50,228.59 542.00,228.32 542.50,228.73 543.00,227.45 543.50,228.27 544.00,228.12 544.50,228.95 545.00,228.73 545.50,228.28 546.00,228.15 546.50,228.00 547.00,228.73 547.50,228.22 548.00,226.11 548.50,228.61 549.00,228.59 549.50,228.54 550.00,228.69 550.50,226.36 551.00,227.69 551.50,226.39 552.00,226.47 552.50,228.67 553.00,228.07 553.50,229.21 554.00,228.81 554.50,226.86 555.00,228.08 555.50,228.95 556.00,228.61 556.50,228.16 557.00,229.15 557.50,228.47 558.00,228.84 558.50,228.62 559.00,229.14 559.50,228.08 560.00,228.00 560.50,228.33 561.00,228.11 561.50,229.09 562.00,228.67 562.50,226.52 563.00,229.16 563.50,228.45 564.00,228.02 564.50,228.16 565.00,228.72 565.50,229.10 566.00,228.32 566.50,228.00 567.00,228.84 567.50,227.99 568.00,226.69 568.50,228.86 569.00,228.00 569.50,228.77 570.00,228.78 570.50,228.98 571.00,228.48 571.50,226.69 572.00,229.09 572.50,228.75 573.00,229.00 573.50,228.07 574.00,228.06 574.50,229.06 575.00,228.55 575.50,228.95 576.00,226.87 576.50,228.58 577.00,228.92 577.50,229.18 578.00,228.04 578.50,228.43 579.00,228.90 579.50,228.40 580.00,228.15 580.50,227.98 581.00,228.90 581.50,228.77 582.00,228.78 582.50,228.59 583.00,228.23 583.50,226.22 584.00,228.76 584.50,228.24 585.00,228.03 585.50,228.44 586.00,228.07 586.50,227.97 587.00,228.89 587.50,228.62 588.00,228.32 588.50,228.17 589.00,228.68 589.50,228.77 590.00,227.83 590.50,228.15 591.00,228.78 591.50,226.65 592.00,228.29 592.50,227.60 593.00,228.98 593.50,228.92 594.00,228.70 594.50,227.92 595.00,228.52 595.50,228.62 596.00,229.09 596.50,228.72 597.00,229.12 597.50,228.74 598.00,228.53 598.50,227.14 599.00,228.32 599.50,228.04 600.00,228.79 600.50,229.03 601.00,228.70 601.50,228.21 602.00,227.93 602.50,228.72 603.00,228.85 603.50,228.17 604.00,228.06 604.50,228.81 605.00,227.94 605.50,227.97 606.00,229.08 606.50,227.95 607.00,228.63 607.50,228.80 608.00,228.48 608.50,228.74 609.00,228.39 609.50,228.13 610.00,227.33 610.50,228.23 611.00,229.07 611.50,228.38 612.00,227.98 612.50,228.16 613.00,228.52 613.50,227.58 614.00,228.56 614.50,228.69 615.00,228.18 615.50,228.22 616.00,228.24 616.50,229.05 617.00,228.86 617.50,228.86 618.00,228.33 618.50,228.30 619.00,229.22 619.50,229.14 620.00,227.76 620.50,228.39 621.00,228.93 621.50,226.29 622.00,229.18 622.50,228.39 623.00,228.54 623.50,227.91 624.00,227.92 624.50,228.62 625.00,228.77 625.50,228.96 626.00,228.96 626.50,228.48 627.00,227.97 627.50,227.71 628.00,228.27 628.50,229.00 629.00,229.16 629.50,226.29 630.00,229.02 630.50,228.02 631.00,229.05 631.50,227.43 632.00,228.28 632.50,228.25 633.00,229.04 633.50,228.72 634.00,228.61 634.50,229.13 635.00,228.58 635.50,226.10 636.00,229.05 636.50,228.38 637.00,228.26 637.50,228.33 638.00,228.31 638.50,228.43 639.00,228.92 639.50,226.62 640.00,225.97 640.50,228.90 641.00,227.99 641.50,229.02 642.00,227.94 642.50,227.52 643.00,226.13 643.50,228.49 644.00,226.70 644.50,228.50 645.00,228.24 645.50,228.62 646.00,228.65 646.50,228.75 647.00,228.10 647.50,228.21 648.00,226.36 648.50,228.31 649.00,228.68 649.50,228.25 650.00,228.27 650.50,228.65 651.00,228.64 651.50,227.17 652.00,227.93 652.50,228.12 653.00,227.36 653.50,228.05 654.00,228.20 654.50,229.08 655.00,228.74 655.50,228.52 656.00,228.68 656.50,229.10 657.00,229.20 657.50,228.99 658.00,228.24 658.50,229.18 659.00,227.95 659.50,228.43 660.00,229.13 660.50,229.07 661.00,228.86 661.50,228.82 662.00,228.26 662.50,228.12 663.00,228.09 663.50,229.21 664.00,228.35 664.50,229.04 665.00,228.43 665.50,229.30 666.00,228.91 666.50,229.11 667.00,229.17 667.50,228.60 668.00,229.11 668.50,228.61 669.00,229.40 669.50,227.80 670.00,229.23 670.50,229.68 671.00,227.33 671.50,229.14 672.00,229.09 672.50,229.76 673.00,229.97 673.50,229.41 674.00,229.95 674.50,229.30 675.00,228.48 675.50,229.65 676.00,229.83 676.50,229.61 677.00,229.71 677.50,229.78 678.00,230.20 678.50,230.15 679.00,230.62 679.50,230.32 680.00,230.30 680.50,230.12 681.00,230.62 681.50,230.86 682.00,230.92 682.50,230.64 683.00,230.95 683.50,230.79 684.00,230.99 684.50,230.96 685.00,230.76 685.50,230.75 686.00,231.18 686.50,231.18 687.00,230.63 687.50,231.21 688.00,230.66 688.50,231.36 689.00,231.52 689.50,231.62 690.00,231.16 690.50,231.58 691.00,231.58 691.50,231.65 692.00,231.72 692.50,231.83 693.00,231.79 693.50,231.84 694.00,231.99 694.50,232.09 695.00,232.14 695.50,232.20 696.00,232.26 696.30,232.30 696.30,232.90 696.00,232.94 695.50,233.01 695.00,233.03 694.50,233.17 694.00,233.18 693.50,233.22 693.00,233.26 692.50,233.39 692.00,233.36 691.50,233.41 691.00,233.58 690.50,233.63 690.00,233.72 689.50,233.77 689.00,233.72 688.50,233.71 688.00,233.77 687.50,233.96 687.00,234.00 686.50,234.06 686.00,234.02 685.50,235.01 685.00,234.12 684.50,234.48 684.00,234.17 683.50,235.14 683.00,234.71 682.50,234.64 682.00,234.64 681.50,234.56 681.00,234.64 680.50,234.73 680.00,234.62 679.50,235.18 679.00,235.25 678.50,235.31 678.00,234.78 677.50,235.63 677.00,234.91 676.50,235.42 676.00,235.41 675.50,235.37 675.00,235.41 674.50,236.59 674.00,236.91 673.50,235.17 673.00,235.41 672.50,235.37 672.00,235.36 671.50,235.88 671.00,235.93 670.50,235.47 670.00,235.63 669.50,237.80 669.00,236.78 668.50,235.65 668.00,236.06 667.50,235.95 667.00,236.70 666.50,237.73 666.00,236.74 665.50,236.97 665.00,238.36 664.50,236.10 664.00,236.75 663.50,236.23 663.00,237.04 662.50,236.02 662.00,236.11 661.50,236.52 661.00,238.84 660.50,236.63 660.00,236.00 659.50,238.70 659.00,236.83 658.50,236.89 658.00,236.97 657.50,236.56 657.00,236.32 656.50,236.26 656.00,237.19 655.50,236.84 655.00,236.69 654.50,237.07 654.00,237.15 653.50,237.20 653.00,236.52 652.50,237.29 652.00,236.84 651.50,236.41 651.00,236.91 650.50,237.14 650.00,236.02 649.50,237.03 649.00,236.79 648.50,236.77 648.00,237.38 647.50,236.18 647.00,236.11 646.50,236.10 646.00,236.13 645.50,236.14 645.00,236.01 644.50,237.92 644.00,238.90 643.50,237.06 643.00,237.19 642.50,236.66 642.00,236.92 641.50,237.40 641.00,236.82 640.50,237.21 640.00,238.90 639.50,238.79 639.00,236.50 638.50,236.06 638.00,236.60 637.50,236.92 637.00,236.05 636.50,238.72 636.00,236.24 635.50,236.49 635.00,236.82 634.50,236.41 634.00,236.04 633.50,235.99 633.00,236.00 632.50,236.49 632.00,237.23 631.50,236.31 631.00,236.12 630.50,237.03 630.00,237.01 629.50,238.24 629.00,236.21 628.50,236.81 628.00,236.81 627.50,236.25 627.00,237.19 626.50,236.91 626.00,236.91 625.50,236.95 625.00,236.23 624.50,236.88 624.00,236.07 623.50,237.04 623.00,236.76 622.50,236.94 622.00,238.33 621.50,236.69 621.00,237.03 620.50,236.43 620.00,237.07 619.50,236.57 619.00,236.81 618.50,236.08 618.00,237.27 617.50,237.77 617.00,236.07 616.50,236.91 616.00,237.06 615.50,236.64 615.00,237.09 614.50,236.74 614.00,237.10 613.50,236.43 613.00,236.67 612.50,236.44 612.00,236.96 611.50,236.89 611.00,236.39 610.50,236.88 610.00,236.30 609.50,236.73 609.00,237.86 608.50,237.19 608.00,236.87 607.50,236.18 607.00,237.08 606.50,236.33 606.00,236.32 605.50,236.24 605.00,237.25 604.50,236.05 604.00,236.19 603.50,236.44 603.00,236.19 602.50,237.25 602.00,236.84 601.50,236.36 601.00,236.97 600.50,238.49 600.00,236.16 599.50,238.76 599.00,236.72 598.50,237.27 598.00,236.87 597.50,236.85 597.00,236.80 596.50,237.21 596.00,236.71 595.50,237.05 595.00,235.98 594.50,236.23 594.00,236.64 593.50,237.15 593.00,236.34 592.50,236.88 592.00,236.56 591.50,236.37 591.00,236.26 590.50,236.53 590.00,238.30 589.50,236.77 589.00,236.09 588.50,236.88 588.00,236.92 587.50,236.29 587.00,237.09 586.50,236.13 586.00,236.37 585.50,236.55 585.00,236.96 584.50,236.16 584.00,236.19 583.50,237.02 583.00,236.82 582.50,236.64 582.00,237.27 581.50,236.17 581.00,236.95 580.50,238.15 580.00,238.25 579.50,236.89 579.00,238.51 578.50,238.87 578.00,236.09 577.50,236.50 577.00,236.97 576.50,237.02 576.00,237.16 575.50,236.15 575.00,236.46 574.50,236.60 574.00,236.13 573.50,238.29 573.00,237.22 572.50,236.47 572.00,236.83 571.50,236.59 571.00,236.11 570.50,238.87 570.00,236.57 569.50,239.17 569.00,236.02 568.50,237.16 568.00,236.69 567.50,236.10 567.00,236.44 566.50,237.29 566.00,236.13 565.50,236.59 565.00,236.83 564.50,239.24 564.00,236.41 563.50,236.40 563.00,237.08 562.50,236.18 562.00,236.85 561.50,236.11 561.00,236.17 560.50,236.87 560.00,236.72 559.50,236.07 559.00,238.20 558.50,237.21 558.00,236.92 557.50,236.41 557.00,236.39 556.50,236.24 556.00,236.63 555.50,236.05 555.00,237.04 554.50,236.53 554.00,236.32 553.50,237.29 553.00,236.17 552.50,236.75 552.00,236.62 551.50,236.73 551.00,238.93 550.50,237.00 550.00,236.03 549.50,237.07 549.00,237.16 548.50,236.59 548.00,236.98 547.50,236.48 547.00,238.64 546.50,236.23 546.00,236.45 545.50,236.37 545.00,236.04 544.50,236.54 544.00,236.10 543.50,236.34 543.00,236.73 542.50,238.02 542.00,236.46 541.50,237.03 541.00,237.30 540.50,238.36 540.00,236.11 539.50,236.18 539.00,236.78 538.50,234.86 538.00,234.09 537.50,233.41 537.00,232.90" fill="#6a0a86"/>
<rect x="249.00" y="262.70" width="215.00" height="0.80" fill="#7a0a62" opacity="0.55"/>
<polygon points="249.50,262.80 250.00,262.61 250.50,262.41 251.00,262.23 251.50,260.99 252.00,261.25 252.50,261.43 253.00,261.44 253.50,260.67 254.00,260.48 254.50,259.14 255.00,260.52 255.50,259.34 256.00,261.04 256.50,261.00 257.00,261.10 257.50,260.58 258.00,259.73 258.50,261.01 259.00,260.60 259.50,260.55 260.00,260.44 260.50,260.41 261.00,260.45 261.50,260.71 262.00,259.84 262.50,260.70 263.00,259.37 263.50,260.74 264.00,260.91 264.50,260.85 265.00,260.60 265.50,260.95 266.00,261.11 266.50,261.17 267.00,260.41 267.50,261.19 268.00,261.13 268.50,260.37 269.00,260.80 269.50,260.23 270.00,260.31 270.50,260.61 271.00,260.48 271.50,261.13 272.00,260.97 272.50,260.35 273.00,260.88 273.50,259.24 274.00,260.61 274.50,260.36 275.00,260.85 275.50,261.00 276.00,260.32 276.50,260.40 277.00,260.39 277.50,260.37 278.00,260.39 278.50,260.33 279.00,259.52 279.50,260.67 280.00,260.43 280.50,260.98 281.00,259.34 281.50,260.47 282.00,260.41 282.50,260.31 283.00,260.92 283.50,260.63 284.00,260.81 284.50,260.86 285.00,260.35 285.50,260.79 286.00,260.70 286.50,261.01 287.00,260.32 287.50,260.50 288.00,260.90 288.50,260.72 289.00,260.20 289.50,260.29 290.00,260.86 290.50,260.72 291.00,260.71 291.50,260.58 292.00,260.97 292.50,259.83 293.00,260.49 293.50,260.70 294.00,261.03 294.50,260.50 295.00,260.28 295.50,261.15 296.00,261.09 296.50,260.89 297.00,261.07 297.50,260.29 298.00,260.91 298.50,260.78 299.00,260.75 299.50,261.06 300.00,260.82 300.50,260.52 301.00,260.64 301.50,260.87 302.00,260.79 302.50,260.48 303.00,260.35 303.50,260.89 304.00,261.05 304.50,261.21 305.00,260.86 305.50,260.27 306.00,260.84 306.50,260.85 307.00,260.68 307.50,260.30 308.00,261.18 308.50,261.18 309.00,260.29 309.50,261.15 310.00,260.46 310.50,260.33 311.00,261.20 311.50,259.47 312.00,261.05 312.50,260.86 313.00,260.98 313.50,260.51 314.00,260.01 314.50,260.53 315.00,260.64 315.50,260.89 316.00,260.29 316.50,259.96 317.00,259.35 317.50,260.81 318.00,260.81 318.50,260.60 319.00,260.30 319.50,260.21 320.00,260.97 320.50,260.73 321.00,260.27 321.50,260.64 322.00,260.27 322.50,260.95 323.00,260.48 323.50,261.14 324.00,260.56 324.50,260.26 325.00,260.40 325.50,260.82 326.00,260.46 326.50,260.21 327.00,260.58 327.50,260.49 328.00,260.31 328.50,260.49 329.00,261.05 329.50,261.05 330.00,260.27 330.50,260.29 331.00,260.23 331.50,259.25 332.00,260.40 332.50,260.76 333.00,261.07 333.50,261.07 334.00,260.96 334.50,260.63 335.00,260.24 335.50,260.23 336.00,261.21 336.50,260.59 337.00,260.86 337.50,260.34 338.00,260.93 338.50,261.17 339.00,260.71 339.50,260.53 340.00,259.46 340.50,260.23 341.00,260.81 341.50,261.23 342.00,261.13 342.50,260.70 343.00,260.51 343.50,261.13 344.00,260.86 344.50,260.21 345.00,260.48 345.50,260.97 346.00,260.63 346.50,260.64 347.00,261.22 347.50,260.45 348.00,261.14 348.50,260.44 349.00,260.77 349.50,260.27 350.00,261.15 350.50,260.71 351.00,260.92 351.50,259.89 352.00,260.36 352.50,261.18 353.00,260.47 353.50,260.54 354.00,260.30 354.50,261.03 355.00,260.89 355.50,260.82 356.00,261.17 356.50,261.14 357.00,260.54 357.50,260.27 358.00,260.74 358.50,259.67 359.00,260.41 359.50,260.63 360.00,260.86 360.50,259.88 361.00,260.34 361.50,260.49 362.00,261.24 362.50,260.20 363.00,260.34 363.50,260.25 364.00,260.74 364.50,260.63 365.00,260.72 365.50,260.69 366.00,260.43 366.50,260.71 367.00,260.50 367.50,261.02 368.00,260.87 368.50,261.00 369.00,260.58 369.50,260.86 370.00,260.54 370.50,260.89 371.00,260.73 371.50,260.50 372.00,260.78 372.50,261.05 373.00,260.35 373.50,260.80 374.00,261.12 374.50,259.64 375.00,260.85 375.50,260.89 376.00,261.22 376.50,261.03 377.00,260.63 377.50,260.90 378.00,261.11 378.50,259.99 379.00,260.99 379.50,260.85 380.00,260.96 380.50,261.18 381.00,260.43 381.50,260.41 382.00,259.87 382.50,260.22 383.00,260.86 383.50,260.51 384.00,260.71 384.50,261.02 385.00,260.60 385.50,259.10 386.00,260.69 386.50,260.89 387.00,260.82 387.50,260.78 388.00,260.76 388.50,261.21 389.00,260.54 389.50,261.06 390.00,260.57 390.50,260.71 391.00,260.74 391.50,260.53 392.00,260.65 392.50,260.65 393.00,260.23 393.50,260.60 394.00,260.48 394.50,259.29 395.00,260.78 395.50,260.34 396.00,260.50 396.50,260.59 397.00,260.95 397.50,260.21 398.00,260.28 398.50,261.14 399.00,260.34 399.50,260.42 400.00,260.95 400.50,260.52 401.00,260.25 401.50,261.21 402.00,260.87 402.50,260.56 403.00,260.28 403.50,261.03 404.00,261.14 404.50,260.85 405.00,261.24 405.50,260.67 406.00,260.43 406.50,260.53 407.00,259.10 407.50,260.71 408.00,260.84 408.50,261.04 409.00,259.78 409.50,261.03 410.00,260.68 410.50,260.48 411.00,259.98 411.50,260.52 412.00,261.13 412.50,260.98 413.00,260.73 413.50,260.85 414.00,261.01 414.50,260.51 415.00,261.20 415.50,259.95 416.00,260.73 416.50,260.43 417.00,260.40 417.50,260.86 418.00,260.49 418.50,260.41 419.00,260.57 419.50,260.72 420.00,259.90 420.50,261.13 421.00,260.84 421.50,260.16 422.00,260.81 422.50,261.18 423.00,261.17 423.50,260.73 424.00,260.76 424.50,261.26 425.00,261.56 425.50,261.27 426.00,261.23 426.50,261.47 427.00,261.34 427.50,261.17 428.00,260.90 428.50,261.12 429.00,261.05 429.50,261.41 430.00,261.61 430.50,261.31 431.00,260.82 431.50,261.40 432.00,261.55 432.50,261.52 433.00,261.85 433.50,261.85 434.00,261.72 434.50,261.40 435.00,261.83 435.50,261.45 436.00,261.97 436.50,261.71 437.00,261.64 437.50,261.28 438.00,261.63 438.50,261.78 439.00,261.87 439.50,261.72 440.00,261.80 440.50,261.79 441.00,261.88 441.50,261.91 442.00,262.17 442.50,262.13 443.00,262.20 443.50,262.19 444.00,261.89 444.50,262.21 445.00,262.04 445.50,262.20 446.00,262.12 446.50,262.18 447.00,262.22 447.50,262.41 448.00,262.42 448.50,262.35 449.00,262.39 449.50,262.50 450.00,262.42 450.50,262.48 451.00,262.56 451.50,262.50 452.00,262.55 452.50,262.58 453.00,262.44 453.50,262.67 454.00,262.66 454.50,262.69 455.00,262.69 455.50,262.71 456.00,262.76 456.50,262.77 457.00,262.80 457.00,262.80 457.00,263.40 457.00,263.40 456.50,263.43 456.00,263.44 455.50,263.49 455.00,263.50 454.50,263.51 454.00,263.58 453.50,263.57 453.00,263.57 452.50,263.66 452.00,263.63 451.50,263.73 451.00,263.72 450.50,263.72 450.00,263.78 449.50,263.74 449.00,263.77 448.50,263.85 448.00,263.90 447.50,263.89 447.00,263.95 446.50,264.02 446.00,263.92 445.50,263.98 445.00,263.86 444.50,263.87 444.00,264.01 443.50,264.27 443.00,264.22 442.50,263.98 442.00,264.02 441.50,264.31 441.00,264.19 440.50,264.36 440.00,264.14 439.50,264.40 439.00,264.31 438.50,264.44 438.00,264.30 437.50,264.47 437.00,264.48 436.50,264.27 436.00,264.64 435.50,264.56 435.00,264.68 434.50,264.75 434.00,264.50 433.50,264.58 433.00,264.78 432.50,264.50 432.00,264.46 431.50,264.73 431.00,265.63 430.50,264.46 430.00,265.11 429.50,264.53 429.00,264.51 428.50,264.81 428.00,265.01 427.50,265.08 427.00,265.22 426.50,265.68 426.00,264.90 425.50,265.19 425.00,264.96 424.50,266.06 424.00,264.91 423.50,264.98 423.00,264.78 422.50,264.85 422.00,265.54 421.50,265.45 421.00,265.01 420.50,265.32 420.00,265.40 419.50,265.49 419.00,265.28 418.50,264.86 418.00,264.94 417.50,265.45 417.00,265.31 416.50,265.41 416.00,265.39 415.50,265.28 415.00,265.75 414.50,265.77 414.00,265.67 413.50,266.85 413.00,265.22 412.50,265.79 412.00,266.93 411.50,265.12 411.00,265.46 410.50,265.20 410.00,265.19 409.50,265.00 409.00,265.83 408.50,265.45 408.00,265.11 407.50,265.12 407.00,265.16 406.50,265.81 406.00,265.26 405.50,265.59 405.00,265.79 404.50,265.56 404.00,265.25 403.50,265.71 403.00,265.45 402.50,265.38 402.00,265.18 401.50,265.74 401.00,265.34 400.50,265.37 400.00,265.73 399.50,265.43 399.00,265.11 398.50,265.92 398.00,265.80 397.50,265.42 397.00,265.92 396.50,265.09 396.00,266.17 395.50,265.17 395.00,265.82 394.50,265.50 394.00,265.24 393.50,264.99 393.00,266.90 392.50,265.74 392.00,265.19 391.50,265.53 391.00,265.60 390.50,265.29 390.00,265.10 389.50,265.63 389.00,265.48 388.50,265.19 388.00,265.83 387.50,265.38 387.00,265.13 386.50,265.39 386.00,265.30 385.50,265.34 385.00,266.51 384.50,265.87 384.00,265.47 383.50,265.50 383.00,265.41 382.50,265.67 382.00,265.99 381.50,265.07 381.00,265.84 380.50,265.36 380.00,265.77 379.50,265.00 379.00,265.85 378.50,265.90 378.00,265.18 377.50,265.63 377.00,266.53 376.50,265.85 376.00,265.66 375.50,265.67 375.00,264.97 374.50,265.23 374.00,265.90 373.50,265.16 373.00,265.30 372.50,265.12 372.00,265.40 371.50,265.89 371.00,265.34 370.50,265.07 370.00,265.97 369.50,264.99 369.00,266.71 368.50,265.78 368.00,265.74 367.50,265.43 367.00,265.81 366.50,265.35 366.00,265.50 365.50,265.25 365.00,265.40 364.50,265.19 364.00,265.31 363.50,265.55 363.00,265.57 362.50,265.29 362.00,265.00 361.50,265.08 361.00,265.62 360.50,264.96 360.00,265.70 359.50,265.71 359.00,265.83 358.50,265.98 358.00,265.09 357.50,265.81 357.00,265.48 356.50,265.48 356.00,265.52 355.50,265.68 355.00,265.24 354.50,265.05 354.00,264.96 353.50,266.32 353.00,265.71 352.50,266.43 352.00,265.63 351.50,265.13 351.00,265.30 350.50,265.93 350.00,265.63 349.50,265.03 349.00,265.48 348.50,265.19 348.00,265.46 347.50,265.21 347.00,265.02 346.50,265.54 346.00,265.79 345.50,265.11 345.00,265.53 344.50,265.61 344.00,265.65 343.50,265.74 343.00,265.03 342.50,265.30 342.00,265.93 341.50,265.17 341.00,265.90 340.50,266.13 340.00,264.96 339.50,265.92 339.00,265.08 338.50,264.97 338.00,265.97 337.50,265.66 337.00,265.95 336.50,265.55 336.00,265.17 335.50,265.36 335.00,265.98 334.50,265.13 334.00,265.34 333.50,265.10 333.00,265.67 332.50,265.82 332.00,265.67 331.50,265.42 331.00,265.76 330.50,265.19 330.00,265.45 329.50,265.48 329.00,265.10 328.50,265.72 328.00,265.00 327.50,265.46 327.00,265.35 326.50,265.52 326.00,265.88 325.50,267.09 325.00,265.75 324.50,266.00 324.00,265.25 323.50,265.47 323.00,265.23 322.50,265.08 322.00,265.79 321.50,265.90 321.00,265.75 320.50,266.08 320.00,265.60 319.50,265.68 319.00,265.78 318.50,265.29 318.00,265.96 317.50,265.66 317.00,265.50 316.50,265.68 316.00,265.54 315.50,265.37 315.00,265.43 314.50,264.99 314.00,265.73 313.50,265.14 313.00,265.20 312.50,265.98 312.00,265.59 311.50,265.62 311.00,265.75 310.50,265.74 310.00,266.96 309.50,265.92 309.00,265.94 308.50,265.23 308.00,265.80 307.50,265.68 307.00,265.25 306.50,265.36 306.00,265.59 305.50,265.62 305.00,265.89 304.50,265.30 304.00,265.08 303.50,265.94 303.00,265.78 302.50,265.95 302.00,265.27 301.50,265.62 301.00,264.97 300.50,265.37 300.00,265.33 299.50,265.04 299.00,265.17 298.50,265.97 298.00,265.48 297.50,265.19 297.00,265.39 296.50,265.76 296.00,265.44 295.50,265.03 295.00,265.01 294.50,265.70 294.00,265.57 293.50,265.14 293.00,265.74 292.50,265.06 292.00,265.25 291.50,265.80 291.00,265.93 290.50,265.89 290.00,267.06 289.50,265.53 289.00,265.54 288.50,265.66 288.00,265.72 287.50,265.93 287.00,265.99 286.50,265.73 286.00,265.81 285.50,266.74 285.00,265.91 284.50,265.34 284.00,265.88 283.50,265.82 283.00,266.98 282.50,265.45 282.00,265.95 281.50,265.17 281.00,266.00 280.50,265.81 280.00,265.86 279.50,265.43 279.00,265.64 278.50,265.10 278.00,265.32 277.50,265.10 277.00,265.22 276.50,265.99 276.00,265.75 275.50,265.91 275.00,266.19 274.50,265.81 274.00,265.90 273.50,265.56 273.00,265.16 272.50,265.29 272.00,265.45 271.50,265.81 271.00,265.09 270.50,265.26 270.00,265.90 269.50,265.08 269.00,265.31 268.50,265.14 268.00,265.03 267.50,265.26 267.00,265.37 266.50,265.74 266.00,265.44 265.50,265.00 265.00,265.07 264.50,265.42 264.00,265.46 263.50,265.22 263.00,265.07 262.50,265.34 262.00,265.17 261.50,265.12 261.00,266.58 260.50,265.28 260.00,265.82 259.50,265.23 259.00,265.90 258.50,265.26 258.00,265.71 257.50,265.21 257.00,265.95 256.50,265.06 256.00,265.70 255.50,265.79 255.00,265.36 254.50,265.54 254.00,265.32 253.50,265.60 253.00,265.41 252.50,264.84 252.00,264.43 251.50,264.16 251.00,264.05 250.50,263.78 250.00,263.65 249.50,263.40" fill="#7a0a62"/>
<rect x="537.00" y="262.75" width="175.00" height="0.80" fill="#7a0a62" opacity="0.55"/>
<polygon points="538.30,262.85 538.80,262.43 539.30,262.25 539.80,261.95 540.30,261.67 540.80,261.66 541.30,261.46 541.80,260.92 542.30,261.28 542.80,261.15 543.30,260.29 543.80,260.95 544.30,261.13 544.80,261.47 545.30,261.39 545.80,260.89 546.30,261.37 546.80,260.21 547.30,261.26 547.80,261.33 548.30,261.39 548.80,261.09 549.30,261.24 549.80,261.48 550.30,261.65 550.80,261.04 551.30,260.86 551.80,261.40 552.30,261.20 552.80,261.54 553.30,261.09 553.80,260.22 554.30,261.03 554.80,261.56 555.30,261.02 555.80,261.58 556.30,260.64 556.80,261.46 557.30,261.22 557.80,261.42 558.30,261.39 558.80,261.27 559.30,261.29 559.80,261.44 560.30,261.52 560.80,261.34 561.30,261.55 561.80,261.12 562.30,261.29 562.80,260.91 563.30,260.91 563.80,260.86 564.30,261.35 564.80,261.28 565.30,261.07 565.80,261.35 566.30,260.89 566.80,261.59 567.30,260.86 567.80,261.51 568.30,261.31 568.80,261.29 569.30,261.61 569.80,260.94 570.30,260.49 570.80,261.12 571.30,260.16 571.80,260.35 572.30,261.62 572.80,261.29 573.30,261.00 573.80,261.00 574.30,261.20 574.80,260.49 575.30,260.84 575.80,260.96 576.30,261.46 576.80,261.37 577.30,260.86 577.80,260.95 578.30,261.03 578.80,261.21 579.30,261.03 579.80,261.44 580.30,261.30 580.80,261.22 581.30,260.75 581.80,261.07 582.30,261.56 582.80,261.45 583.30,260.90 583.80,261.20 584.30,261.64 584.80,260.61 585.30,261.40 585.80,261.48 586.30,261.51 586.80,261.41 587.30,261.38 587.80,261.27 588.30,261.16 588.80,261.62 589.30,260.98 589.80,261.50 590.30,260.89 590.80,261.56 591.30,261.01 591.80,261.55 592.30,260.90 592.80,261.37 593.30,260.48 593.80,261.03 594.30,260.88 594.80,261.40 595.30,261.62 595.80,261.27 596.30,261.08 596.80,261.11 597.30,260.88 597.80,261.17 598.30,261.17 598.80,260.04 599.30,260.85 599.80,260.93 600.30,260.63 600.80,261.04 601.30,260.13 601.80,261.26 602.30,261.01 602.80,261.44 603.30,261.19 603.80,259.96 604.30,261.40 604.80,260.91 605.30,261.07 605.80,261.49 606.30,261.52 606.80,260.87 607.30,261.07 607.80,261.24 608.30,261.13 608.80,261.19 609.30,261.30 609.80,261.31 610.30,261.64 610.80,261.18 611.30,260.95 611.80,261.39 612.30,261.46 612.80,261.27 613.30,260.11 613.80,260.86 614.30,261.04 614.80,261.12 615.30,261.16 615.80,261.45 616.30,261.47 616.80,261.30 617.30,261.39 617.80,261.17 618.30,260.37 618.80,261.20 619.30,260.93 619.80,261.43 620.30,261.30 620.80,261.54 621.30,261.04 621.80,261.03 622.30,261.45 622.80,261.34 623.30,261.36 623.80,261.48 624.30,261.22 624.80,261.59 625.30,261.21 625.80,261.43 626.30,261.09 626.80,261.61 627.30,260.99 627.80,260.86 628.30,260.86 628.80,261.13 629.30,261.57 629.80,261.14 630.30,261.01 630.80,261.37 631.30,261.45 631.80,261.24 632.30,261.51 632.80,261.21 633.30,261.06 633.80,261.54 634.30,261.41 634.80,261.10 635.30,261.12 635.80,261.33 636.30,261.21 636.80,261.39 637.30,261.04 637.80,260.97 638.30,261.39 638.80,261.09 639.30,261.40 639.80,261.35 640.30,261.28 640.80,261.24 641.30,261.10 641.80,261.21 642.30,260.18 642.80,260.88 643.30,261.21 643.80,261.01 644.30,261.11 644.80,260.03 645.30,261.03 645.80,261.52 646.30,261.33 646.80,261.02 647.30,261.26 647.80,261.10 648.30,260.50 648.80,261.08 649.30,261.38 649.80,259.96 650.30,261.59 650.80,261.29 651.30,261.20 651.80,261.37 652.30,260.99 652.80,261.55 653.30,260.88 653.80,261.43 654.30,261.11 654.80,261.06 655.30,260.57 655.80,261.16 656.30,260.97 656.80,261.43 657.30,261.64 657.80,261.56 658.30,261.39 658.80,260.43 659.30,261.06 659.80,261.35 660.30,261.45 660.80,261.20 661.30,260.89 661.80,261.64 662.30,261.36 662.80,261.13 663.30,261.09 663.80,260.85 664.30,260.87 664.80,261.24 665.30,261.01 665.80,260.95 666.30,261.27 666.80,261.59 667.30,261.75 667.80,261.58 668.30,261.66 668.80,261.55 669.30,261.42 669.80,261.38 670.30,261.21 670.80,261.78 671.30,260.74 671.80,261.09 672.30,261.53 672.80,261.51 673.30,261.62 673.80,261.68 674.30,261.83 674.80,261.90 675.30,261.55 675.80,261.97 676.30,261.94 676.80,261.11 677.30,261.78 677.80,261.85 678.30,261.73 678.80,261.72 679.30,262.07 679.80,262.10 680.30,261.93 680.80,262.09 681.30,262.00 681.80,261.99 682.30,262.22 682.80,261.94 683.30,261.70 683.80,262.34 684.30,261.84 684.80,262.17 685.30,262.19 685.80,262.19 686.30,262.32 686.80,262.26 687.30,262.43 687.80,262.43 688.30,262.40 688.80,262.49 689.30,262.53 689.80,262.39 690.30,262.45 690.80,262.54 691.30,262.56 691.80,262.63 692.30,262.63 692.80,262.67 693.30,262.70 693.80,262.72 694.30,262.72 694.80,262.78 695.30,262.80 695.80,262.83 696.30,262.85 696.30,262.85 696.30,263.45 696.30,263.45 695.80,263.47 695.30,263.49 694.80,263.57 694.30,263.62 693.80,263.66 693.30,263.63 692.80,263.59 692.30,263.70 691.80,263.65 691.30,263.72 690.80,263.74 690.30,263.70 689.80,263.94 689.30,263.87 688.80,263.88 688.30,263.86 687.80,263.80 687.30,264.06 686.80,263.83 686.30,264.08 685.80,263.96 685.30,264.10 684.80,264.13 684.30,264.16 683.80,264.15 683.30,264.21 682.80,264.08 682.30,264.69 681.80,264.25 681.30,264.66 680.80,264.43 680.30,264.22 679.80,264.73 679.30,264.94 678.80,264.46 678.30,264.30 677.80,264.25 677.30,264.38 676.80,265.00 676.30,264.45 675.80,264.84 675.30,264.48 674.80,264.64 674.30,264.41 673.80,264.82 673.30,264.57 672.80,264.62 672.30,264.59 671.80,264.95 671.30,264.52 670.80,264.68 670.30,264.65 669.80,264.53 669.30,265.91 668.80,264.51 668.30,264.52 667.80,265.11 667.30,264.62 666.80,264.88 666.30,264.70 665.80,265.27 665.30,264.95 664.80,265.43 664.30,265.39 663.80,265.29 663.30,265.59 662.80,265.30 662.30,265.12 661.80,264.98 661.30,265.35 660.80,264.94 660.30,264.67 659.80,265.45 659.30,266.33 658.80,265.31 658.30,264.89 657.80,265.33 657.30,264.93 656.80,266.05 656.30,265.30 655.80,264.80 655.30,264.88 654.80,265.20 654.30,265.10 653.80,264.70 653.30,265.45 652.80,264.99 652.30,264.71 651.80,265.43 651.30,265.01 650.80,264.71 650.30,265.11 649.80,265.17 649.30,265.22 648.80,265.04 648.30,265.42 647.80,265.01 647.30,265.29 646.80,265.19 646.30,265.03 645.80,265.07 645.30,264.77 644.80,264.69 644.30,265.16 643.80,265.39 643.30,265.08 642.80,264.68 642.30,264.89 641.80,264.94 641.30,264.97 640.80,265.25 640.30,265.30 639.80,264.92 639.30,264.77 638.80,265.29 638.30,265.66 637.80,264.85 637.30,265.08 636.80,265.40 636.30,265.66 635.80,264.75 635.30,264.91 634.80,265.29 634.30,266.18 633.80,265.13 633.30,265.31 632.80,265.23 632.30,264.84 631.80,265.40 631.30,264.78 630.80,264.80 630.30,265.44 629.80,265.20 629.30,264.81 628.80,264.94 628.30,265.49 627.80,266.06 627.30,265.12 626.80,264.78 626.30,266.22 625.80,264.93 625.30,264.91 624.80,264.86 624.30,264.65 623.80,264.79 623.30,265.21 622.80,264.87 622.30,265.43 621.80,265.37 621.30,264.97 620.80,264.82 620.30,265.38 619.80,265.28 619.30,265.06 618.80,264.79 618.30,264.92 617.80,264.74 617.30,265.41 616.80,265.30 616.30,264.92 615.80,265.39 615.30,264.73 614.80,265.03 614.30,265.24 613.80,265.22 613.30,265.34 612.80,264.96 612.30,264.85 611.80,264.70 611.30,265.40 610.80,265.62 610.30,265.23 609.80,265.62 609.30,265.10 608.80,264.75 608.30,265.12 607.80,265.10 607.30,265.25 606.80,265.33 606.30,264.93 605.80,265.09 605.30,265.26 604.80,265.04 604.30,265.33 603.80,264.82 603.30,265.36 602.80,264.84 602.30,264.76 601.80,265.04 601.30,265.24 600.80,265.45 600.30,265.41 599.80,265.18 599.30,265.24 598.80,264.87 598.30,266.14 597.80,264.66 597.30,264.72 596.80,264.99 596.30,265.04 595.80,265.30 595.30,265.40 594.80,265.20 594.30,264.73 593.80,266.06 593.30,265.40 592.80,265.42 592.30,264.92 591.80,264.82 591.30,264.73 590.80,264.77 590.30,265.22 589.80,265.15 589.30,264.93 588.80,265.21 588.30,264.73 587.80,264.91 587.30,265.38 586.80,265.07 586.30,264.85 585.80,265.33 585.30,264.66 584.80,265.37 584.30,264.91 583.80,264.85 583.30,264.88 582.80,265.06 582.30,266.06 581.80,265.11 581.30,264.92 580.80,265.13 580.30,265.24 579.80,265.18 579.30,265.44 578.80,266.07 578.30,264.90 577.80,264.67 577.30,265.63 576.80,265.26 576.30,265.21 575.80,265.28 575.30,265.32 574.80,265.16 574.30,264.80 573.80,265.13 573.30,265.01 572.80,264.84 572.30,265.24 571.80,264.83 571.30,264.89 570.80,265.20 570.30,265.81 569.80,264.84 569.30,264.78 568.80,265.43 568.30,264.85 567.80,265.40 567.30,264.98 566.80,265.07 566.30,265.92 565.80,264.98 565.30,264.72 564.80,264.98 564.30,265.31 563.80,264.67 563.30,265.16 562.80,265.03 562.30,265.02 561.80,264.90 561.30,265.16 560.80,265.32 560.30,265.00 559.80,264.73 559.30,265.10 558.80,264.95 558.30,264.88 557.80,264.88 557.30,265.21 556.80,265.28 556.30,265.01 555.80,264.85 555.30,265.25 554.80,264.93 554.30,265.02 553.80,264.90 553.30,265.19 552.80,265.34 552.30,264.87 551.80,265.20 551.30,264.91 550.80,265.27 550.30,266.20 549.80,265.40 549.30,264.76 548.80,265.11 548.30,264.77 547.80,265.83 547.30,265.40 546.80,265.40 546.30,265.29 545.80,264.85 545.30,265.12 544.80,265.21 544.30,265.29 543.80,265.26 543.30,265.41 542.80,265.03 542.30,265.09 541.80,265.85 541.30,265.00 540.80,264.59 540.30,264.66 539.80,264.27 539.30,264.36 538.80,263.72 538.30,263.45" fill="#7a0a62"/>
<rect x="517.00" y="294.20" width="30.00" height="0.80" fill="#7e0c48" opacity="0.55"/>
<polygon points="519.50,294.30 520.00,293.90 520.50,292.59 521.00,292.31 521.50,291.34 522.00,289.31 522.50,291.98 523.00,290.98 523.50,292.47 524.00,292.14 524.50,292.80 525.00,291.76 525.50,290.58 526.00,292.96 526.50,292.93 527.00,293.09 527.50,292.34 528.00,291.75 528.50,292.03 529.00,291.11 529.50,290.61 530.00,290.45 530.50,292.57 531.00,291.28 531.50,291.03 532.00,290.66 532.50,291.91 533.00,290.78 533.50,292.23 534.00,292.80 534.50,292.50 535.00,291.20 535.50,292.96 536.00,291.65 536.50,292.49 537.00,293.61 537.50,293.67 538.00,293.55 538.50,292.68 539.00,293.01 539.50,294.09 540.00,294.04 540.50,294.30 540.50,294.30 540.50,294.90 540.50,294.90 540.00,295.02 539.50,295.26 539.00,295.24 538.50,295.45 538.00,296.96 537.50,296.39 537.00,296.95 536.50,296.63 536.00,296.55 535.50,296.58 535.00,299.02 534.50,296.88 534.00,296.09 533.50,297.37 533.00,296.23 532.50,298.61 532.00,298.28 531.50,296.74 531.00,297.97 530.50,297.93 530.00,297.21 529.50,300.30 529.00,297.47 528.50,297.48 528.00,296.94 527.50,298.10 527.00,296.29 526.50,296.62 526.00,296.97 525.50,297.21 525.00,299.85 524.50,296.78 524.00,296.94 523.50,298.77 523.00,298.25 522.50,296.96 522.00,298.45 521.50,296.16 521.00,296.99 520.50,296.15 520.00,296.05 519.50,294.90" fill="#7e0c48"/>
<rect x="620.00" y="292.90" width="94.00" height="0.80" fill="#7e0c48" opacity="0.55"/>
<polygon points="622.60,293.00 623.10,292.79 623.60,292.55 624.10,292.18 624.60,292.32 625.10,292.28 625.60,292.13 626.10,292.20 626.60,291.91 627.10,292.23 627.60,292.12 628.10,292.29 628.60,292.26 629.10,292.07 629.60,291.93 630.10,292.01 630.60,291.91 631.10,291.71 631.60,292.14 632.10,291.97 632.60,292.06 633.10,292.29 633.60,291.41 634.10,292.28 634.60,292.34 635.10,291.87 635.60,291.95 636.10,292.07 636.60,292.29 637.10,292.29 637.60,292.18 638.10,292.09 638.60,292.09 639.10,292.08 639.60,292.33 640.10,291.98 640.60,292.23 641.10,292.00 641.60,291.97 642.10,292.00 642.60,292.04 643.10,292.27 643.60,292.08 644.10,292.33 644.60,292.10 645.10,292.22 645.60,292.34 646.10,292.12 646.60,292.30 647.10,291.63 647.60,291.51 648.10,291.94 648.60,291.93 649.10,292.30 649.60,292.28 650.10,292.31 650.60,291.95 651.10,292.19 651.60,292.05 652.10,292.31 652.60,292.12 653.10,291.91 653.60,292.20 654.10,292.22 654.60,292.27 655.10,292.22 655.60,292.21 656.10,292.00 656.60,292.13 657.10,292.03 657.60,292.09 658.10,291.80 658.60,292.32 659.10,292.27 659.60,292.05 660.10,291.97 660.60,292.23 661.10,291.95 661.60,291.95 662.10,292.10 662.60,292.05 663.10,291.91 663.60,292.18 664.10,292.00 664.60,292.32 665.10,291.92 665.60,292.07 666.10,292.20 666.60,291.63 667.10,292.18 667.60,292.06 668.10,292.27 668.60,291.99 669.10,291.98 669.60,292.26 670.10,292.00 670.60,292.00 671.10,292.18 671.60,292.06 672.10,292.22 672.60,292.28 673.10,292.31 673.60,292.32 674.10,292.15 674.60,292.16 675.10,292.26 675.60,292.02 676.10,291.93 676.60,292.11 677.10,292.03 677.60,292.02 678.10,292.29 678.60,292.05 679.10,292.23 679.60,292.09 680.10,292.15 680.60,292.30 681.10,292.06 681.60,292.18 682.10,292.25 682.60,291.92 683.10,291.97 683.60,291.96 684.10,292.15 684.60,292.29 685.10,292.21 685.60,292.25 686.10,292.30 686.60,292.25 687.10,291.89 687.60,291.59 688.10,291.93 688.60,292.12 689.10,292.19 689.60,291.97 690.10,292.25 690.60,291.68 691.10,292.06 691.60,292.15 692.10,292.03 692.60,292.01 693.10,292.34 693.60,292.21 694.10,292.22 694.60,292.22 695.10,292.18 695.60,292.30 696.10,292.42 696.60,291.99 697.10,292.35 697.60,292.54 698.10,292.51 698.60,292.51 699.10,292.50 699.60,292.51 700.10,292.68 700.60,292.68 701.10,292.58 701.60,292.63 702.10,292.71 702.60,292.69 703.10,292.81 703.60,292.60 704.10,292.83 704.60,292.84 705.10,292.82 705.60,292.90 706.10,292.90 706.60,292.91 707.10,292.93 707.60,292.98 708.00,293.00 708.00,293.60 707.60,293.62 707.10,293.65 706.60,293.68 706.10,293.69 705.60,293.78 705.10,293.75 704.60,293.78 704.10,293.94 703.60,293.79 703.10,293.91 702.60,293.86 702.10,293.89 701.60,293.92 701.10,293.90 700.60,294.03 700.10,294.02 699.60,294.24 699.10,293.97 698.60,294.09 698.10,294.13 697.60,294.04 697.10,294.26 696.60,294.05 696.10,294.30 695.60,294.35 695.10,294.41 694.60,294.32 694.10,294.28 693.60,294.42 693.10,294.45 692.60,294.36 692.10,294.23 691.60,294.24 691.10,294.52 690.60,294.27 690.10,294.27 689.60,294.43 689.10,294.39 688.60,294.28 688.10,294.43 687.60,294.48 687.10,294.96 686.60,294.34 686.10,294.47 685.60,294.54 685.10,294.51 684.60,294.64 684.10,294.32 683.60,294.53 683.10,294.27 682.60,294.68 682.10,294.32 681.60,294.42 681.10,294.30 680.60,294.42 680.10,294.53 679.60,294.37 679.10,294.34 678.60,294.41 678.10,294.32 677.60,294.97 677.10,294.39 676.60,294.38 676.10,294.39 675.60,294.28 675.10,294.32 674.60,294.49 674.10,294.59 673.60,294.55 673.10,294.67 672.60,294.48 672.10,294.49 671.60,294.45 671.10,294.43 670.60,294.40 670.10,294.74 669.60,294.41 669.10,294.61 668.60,294.68 668.10,294.59 667.60,294.29 667.10,294.47 666.60,294.29 666.10,294.26 665.60,294.49 665.10,294.54 664.60,295.10 664.10,294.42 663.60,294.29 663.10,294.73 662.60,294.41 662.10,294.48 661.60,294.29 661.10,294.56 660.60,294.82 660.10,294.50 659.60,294.53 659.10,294.64 658.60,294.70 658.10,294.50 657.60,294.48 657.10,294.32 656.60,294.55 656.10,294.28 655.60,294.30 655.10,294.69 654.60,294.87 654.10,294.44 653.60,294.55 653.10,294.50 652.60,294.30 652.10,294.64 651.60,294.54 651.10,294.65 650.60,294.31 650.10,294.51 649.60,295.11 649.10,294.46 648.60,294.64 648.10,294.50 647.60,294.52 647.10,294.48 646.60,294.27 646.10,294.47 645.60,294.42 645.10,294.46 644.60,294.66 644.10,294.54 643.60,294.31 643.10,294.42 642.60,294.41 642.10,294.54 641.60,294.66 641.10,294.48 640.60,294.48 640.10,294.47 639.60,294.48 639.10,294.40 638.60,294.69 638.10,294.64 637.60,294.68 637.10,294.37 636.60,294.70 636.10,294.53 635.60,294.92 635.10,294.64 634.60,294.26 634.10,294.53 633.60,294.52 633.10,294.61 632.60,294.69 632.10,294.31 631.60,294.40 631.10,294.50 630.60,294.78 630.10,294.30 629.60,294.36 629.10,294.30 628.60,294.74 628.10,294.46 627.60,294.69 627.10,294.59 626.60,294.29 626.10,294.63 625.60,294.32 625.10,294.49 624.60,294.64 624.10,294.51 623.60,294.22 623.10,293.97 622.60,293.60" fill="#7e0c48"/>
<rect x="527.00" y="324.90" width="185.00" height="0.80" fill="#820a12" opacity="0.55"/>
<polygon points="538.20,325.00 538.70,324.64 539.20,324.22 539.70,321.47 540.20,319.83 540.70,319.09 541.20,318.92 541.70,318.52 542.20,318.74 542.70,319.02 543.20,323.08 543.70,323.06 544.20,323.09 544.70,319.08 545.20,318.69 545.70,318.81 546.20,318.79 546.70,319.03 547.20,318.49 547.70,319.19 548.20,323.13 548.70,323.04 549.20,318.49 549.70,318.49 550.20,318.56 550.70,318.56 551.20,318.61 551.70,318.79 552.20,318.52 552.70,323.12 553.20,323.03 553.70,323.20 554.20,318.56 554.70,318.90 555.20,318.65 555.70,319.11 556.20,318.65 556.70,318.77 557.20,318.73 557.70,323.18 558.20,323.20 558.70,318.84 559.20,318.60 559.70,318.41 560.20,318.99 560.70,318.94 561.20,319.05 561.70,318.52 562.20,323.07 562.70,323.19 563.20,323.13 563.70,318.97 564.20,318.46 564.70,318.51 565.20,319.14 565.70,318.99 566.20,319.09 566.70,319.11 567.20,323.07 567.70,323.06 568.20,323.21 568.70,319.12 569.20,318.66 569.70,318.50 570.20,319.14 570.70,318.72 571.20,318.97 571.70,318.78 572.20,323.14 572.70,323.14 573.20,318.57 573.70,318.94 574.20,318.40 574.70,318.46 575.20,318.89 575.70,319.08 576.20,318.82 576.70,323.08 577.20,323.21 577.70,323.23 578.20,318.65 578.70,318.59 579.20,318.64 579.70,318.76 580.20,318.42 580.70,318.42 581.20,319.05 581.70,323.24 582.20,323.07 582.70,319.08 583.20,318.57 583.70,319.16 584.20,318.59 584.70,318.52 585.20,319.16 585.70,318.62 586.20,323.11 586.70,323.04 587.20,323.04 587.70,318.80 588.20,318.93 588.70,318.60 589.20,319.09 589.70,318.89 590.20,318.67 590.70,318.87 591.20,323.12 591.70,323.12 592.20,323.09 592.70,318.81 593.20,319.12 593.70,318.77 594.20,318.51 594.70,319.10 595.20,319.03 595.70,318.63 596.20,323.16 596.70,323.25 597.20,318.95 597.70,319.10 598.20,318.81 598.70,319.05 599.20,318.58 599.70,318.42 600.20,318.85 600.70,323.24 601.20,323.14 601.70,323.17 602.20,319.18 602.70,318.61 603.20,318.44 603.70,318.45 604.20,318.57 604.70,319.13 605.20,319.05 605.70,323.06 606.20,323.16 606.70,318.97 607.20,318.50 607.70,318.63 608.20,318.95 608.70,318.92 609.20,318.41 609.70,318.78 610.20,323.14 610.70,323.09 611.20,323.24 611.70,319.08 612.20,319.01 612.70,319.18 613.20,318.86 613.70,318.93 614.20,318.55 614.70,318.52 615.20,323.14 615.70,323.16 616.20,323.13 616.70,319.04 617.20,318.98 617.70,319.18 618.20,319.11 618.70,318.55 619.20,319.10 619.70,319.09 620.20,323.08 620.70,323.21 621.20,318.72 621.70,318.94 622.20,318.81 622.70,318.53 623.20,318.72 623.70,319.11 624.20,318.45 624.70,323.08 625.20,323.08 625.70,323.19 626.20,318.60 626.70,318.85 627.20,318.96 627.70,318.65 628.20,318.62 628.70,319.08 629.20,318.89 629.70,323.24 630.20,323.16 630.70,319.18 631.20,318.78 631.70,318.49 632.20,318.77 632.70,318.65 633.20,318.94 633.70,318.59 634.20,323.24 634.70,323.18 635.20,323.10 635.70,318.81 636.20,318.88 636.70,318.79 637.20,318.89 637.70,318.73 638.20,318.92 638.70,318.98 639.20,323.08 639.70,323.14 640.20,323.06 640.70,318.54 641.20,318.90 641.70,319.15 642.20,318.96 642.70,318.41 643.20,318.84 643.70,319.14 644.20,323.23 644.70,323.03 645.20,319.09 645.70,319.08 646.20,318.59 646.70,318.61 647.20,318.61 647.70,318.93 648.20,319.02 648.70,323.18 649.20,323.05 649.70,323.03 650.20,318.46 650.70,319.19 651.20,318.41 651.70,318.91 652.20,318.81 652.70,318.81 653.20,318.82 653.70,323.18 654.20,323.17 654.70,318.89 655.20,319.17 655.70,318.49 656.20,318.62 656.70,318.52 657.20,318.80 657.70,318.83 658.20,323.04 658.70,323.12 659.20,323.10 659.70,318.68 660.20,319.49 660.70,320.80 661.20,322.17 661.70,323.53 662.20,324.76 662.30,325.00 662.30,325.60 662.20,325.87 661.70,327.07 661.20,328.47 660.70,329.54 660.20,330.87 659.70,332.20 659.20,327.43 658.70,327.48 658.20,327.38 657.70,332.18 657.20,331.82 656.70,332.10 656.20,332.00 655.70,331.86 655.20,331.84 654.70,331.69 654.20,327.56 653.70,327.53 653.20,331.79 652.70,331.85 652.20,331.48 651.70,332.03 651.20,331.65 650.70,331.83 650.20,332.16 649.70,327.52 649.20,327.44 648.70,327.51 648.20,332.20 647.70,332.05 647.20,332.20 646.70,332.04 646.20,331.46 645.70,331.54 645.20,331.89 644.70,327.57 644.20,327.44 643.70,331.43 643.20,331.63 642.70,331.51 642.20,331.87 641.70,331.62 641.20,331.59 640.70,331.76 640.20,327.40 639.70,327.52 639.20,327.49 638.70,331.86 638.20,331.92 637.70,331.77 637.20,331.86 636.70,331.99 636.20,331.92 635.70,332.07 635.20,327.56 634.70,327.49 634.20,327.47 633.70,331.72 633.20,332.14 632.70,332.13 632.20,332.07 631.70,331.46 631.20,331.41 630.70,331.85 630.20,327.55 629.70,327.49 629.20,331.83 628.70,332.13 628.20,331.66 627.70,332.02 627.20,331.97 626.70,331.69 626.20,332.06 625.70,327.40 625.20,327.45 624.70,327.48 624.20,331.93 623.70,332.14 623.20,332.18 622.70,331.94 622.20,331.52 621.70,331.94 621.20,331.82 620.70,327.40 620.20,327.45 619.70,331.63 619.20,331.60 618.70,331.45 618.20,331.94 617.70,331.60 617.20,332.03 616.70,331.79 616.20,327.38 615.70,327.46 615.20,327.45 614.70,331.50 614.20,332.04 613.70,332.20 613.20,331.42 612.70,331.97 612.20,331.58 611.70,331.75 611.20,327.39 610.70,327.47 610.20,327.52 609.70,331.85 609.20,331.69 608.70,331.74 608.20,332.06 607.70,331.76 607.20,331.85 606.70,331.55 606.20,327.45 605.70,327.57 605.20,331.86 604.70,331.82 604.20,331.92 603.70,331.76 603.20,332.16 602.70,331.42 602.20,331.56 601.70,327.51 601.20,327.52 600.70,327.44 600.20,331.83 599.70,331.97 599.20,331.50 598.70,331.47 598.20,331.70 597.70,331.94 597.20,331.82 596.70,327.37 596.20,327.50 595.70,332.15 595.20,331.52 594.70,332.11 594.20,331.47 593.70,331.47 593.20,332.02 592.70,332.02 592.20,327.51 591.70,327.48 591.20,327.52 590.70,332.11 590.20,331.68 589.70,331.54 589.20,331.82 588.70,332.11 588.20,331.72 587.70,331.43 587.20,327.50 586.70,327.43 586.20,327.51 585.70,331.95 585.20,331.78 584.70,331.96 584.20,331.57 583.70,331.49 583.20,331.84 582.70,331.71 582.20,327.41 581.70,327.39 581.20,331.60 580.70,332.00 580.20,331.52 579.70,331.45 579.20,331.52 578.70,332.10 578.20,331.67 577.70,327.50 577.20,327.42 576.70,327.38 576.20,331.98 575.70,332.05 575.20,332.10 574.70,331.53 574.20,331.99 573.70,331.69 573.20,331.95 572.70,327.51 572.20,327.48 571.70,332.10 571.20,331.82 570.70,331.80 570.20,332.11 569.70,331.91 569.20,331.59 568.70,331.92 568.20,327.56 567.70,327.36 567.20,327.54 566.70,332.04 566.20,331.67 565.70,331.78 565.20,331.61 564.70,332.18 564.20,331.51 563.70,331.55 563.20,327.48 562.70,327.49 562.20,327.50 561.70,331.49 561.20,332.19 560.70,331.92 560.20,332.16 559.70,331.90 559.20,332.04 558.70,331.51 558.20,327.46 557.70,327.52 557.20,331.95 556.70,331.47 556.20,331.56 555.70,332.06 555.20,331.50 554.70,331.76 554.20,332.10 553.70,327.54 553.20,327.39 552.70,327.50 552.20,331.96 551.70,331.58 551.20,331.94 550.70,332.20 550.20,331.95 549.70,331.46 549.20,331.65 548.70,327.49 548.20,327.46 547.70,332.15 547.20,331.99 546.70,331.59 546.20,331.61 545.70,331.79 545.20,331.84 544.70,331.65 544.20,327.44 543.70,327.46 543.20,327.48 542.70,331.56 542.20,331.83 541.70,331.54 541.20,331.99 540.70,331.69 540.20,330.38 539.70,329.57 539.20,326.40 538.70,325.99 538.20,325.60" fill="#820a12"/>
<polygon points="662.00,319.00 662.50,318.81 663.00,319.34 663.50,319.46 664.00,319.24 664.50,319.57 665.00,319.57 665.50,320.00 666.00,319.62 666.50,319.89 667.00,320.26 667.50,320.42 668.00,320.08 668.50,320.35 669.00,320.75 669.50,318.99 670.00,320.68 670.50,321.06 671.00,320.89 671.50,321.04 672.00,321.30 672.50,321.40 673.00,321.51 673.50,321.65 674.00,321.69 674.50,321.89 675.00,321.79 675.50,322.04 676.00,322.27 676.50,321.11 677.00,322.37 677.50,322.55 678.00,322.49 678.50,322.82 679.00,322.93 679.50,322.97 680.00,323.06 680.50,323.14 681.00,322.52 681.50,323.42 682.00,323.49 682.50,323.70 683.00,323.79 683.50,323.87 684.00,323.53 684.50,324.13 685.00,324.24 685.50,324.08 686.00,324.43 686.50,324.55 687.00,324.68 687.50,324.80 688.00,324.90 688.40,325.00 688.40,325.60 688.00,325.69 687.50,325.80 687.00,325.92 686.50,326.06 686.00,326.15 685.50,326.30 685.00,326.40 684.50,326.49 684.00,327.03 683.50,327.23 683.00,326.78 682.50,326.93 682.00,327.11 681.50,327.13 681.00,327.32 680.50,327.48 680.00,327.55 679.50,327.75 679.00,327.81 678.50,328.92 678.00,328.05 677.50,329.14 677.00,328.31 676.50,328.34 676.00,328.42 675.50,328.48 675.00,328.81 674.50,328.71 674.00,328.81 673.50,330.62 673.00,329.25 672.50,329.24 672.00,329.34 671.50,329.49 671.00,329.67 670.50,329.66 670.00,331.52 669.50,330.03 669.00,330.11 668.50,330.11 668.00,330.14 667.50,330.21 667.00,330.71 666.50,330.60 666.00,333.39 665.50,331.13 665.00,331.09 664.50,330.83 664.00,331.14 663.50,331.36 663.00,331.14 662.50,331.65 662.00,331.68" fill="#820a12"/>
<rect x="455.00" y="355.85" width="80.00" height="0.80" fill="#7c2c02" opacity="0.55"/>
<polygon points="456.50,355.95 457.00,352.98 457.50,349.18 458.00,350.11 458.50,349.23 459.00,349.96 459.50,348.80 460.00,351.31 460.50,350.28 461.00,350.67 461.50,351.84 462.00,350.63 462.50,351.91 463.00,351.96 463.50,351.91 464.00,352.00 464.50,351.19 465.00,352.61 465.50,351.91 466.00,351.79 466.50,351.75 467.00,350.22 467.50,352.97 468.00,352.28 468.50,352.53 469.00,352.77 469.50,353.23 470.00,353.24 470.50,352.92 471.00,353.71 471.50,353.82 472.00,353.87 472.50,353.78 473.00,354.16 473.50,353.13 474.00,353.90 474.50,354.29 475.00,354.07 475.50,354.57 476.00,354.69 476.50,353.88 477.00,354.70 477.50,354.86 478.00,354.87 478.50,354.82 479.00,355.11 479.50,354.98 480.00,355.06 480.50,355.26 481.00,355.17 481.50,355.23 482.00,355.40 482.50,355.36 483.00,355.29 483.50,355.41 484.00,355.40 484.50,355.50 485.00,355.46 485.50,355.35 486.00,355.39 486.50,355.37 487.00,355.42 487.50,355.39 488.00,355.51 488.50,355.38 489.00,355.22 489.00,355.47 489.00,357.14 489.00,357.33 488.50,357.27 488.00,356.98 487.50,357.06 487.00,357.05 486.50,356.99 486.00,357.03 485.50,357.15 485.00,357.10 484.50,357.13 484.00,357.19 483.50,357.05 483.00,357.03 482.50,357.02 482.00,357.12 481.50,357.25 481.00,357.19 480.50,357.36 480.00,357.40 479.50,357.43 479.00,357.56 478.50,357.60 478.00,358.27 477.50,357.76 477.00,357.97 476.50,358.00 476.00,357.81 475.50,358.23 475.00,359.41 474.50,358.34 474.00,358.98 473.50,358.21 473.00,358.88 472.50,359.73 472.00,359.68 471.50,358.93 471.00,359.17 470.50,358.81 470.00,358.90 469.50,359.07 469.00,359.08 468.50,359.61 468.00,360.33 467.50,360.18 467.00,359.46 466.50,362.53 466.00,360.59 465.50,360.19 465.00,361.75 464.50,361.22 464.00,361.38 463.50,360.91 463.00,361.30 462.50,364.37 462.00,361.88 461.50,361.78 461.00,362.29 460.50,361.65 460.00,362.59 459.50,361.29 459.00,361.28 458.50,362.13 458.00,363.56 457.50,362.90 457.00,360.49 456.50,356.55" fill="#7c2c02"/>
<polygon points="494.20,355.95 494.70,352.12 495.20,346.30 495.70,349.68 496.20,350.12 496.70,348.95 497.20,350.03 497.70,350.78 498.20,349.28 498.70,349.68 499.20,349.42 499.70,350.67 500.20,350.27 500.70,349.37 501.20,349.16 501.70,349.95 502.20,349.92 502.70,348.79 503.20,350.79 503.70,350.32 504.20,350.54 504.70,348.81 505.20,350.12 505.70,349.67 506.20,349.95 506.70,350.76 507.20,347.42 507.70,349.43 508.20,350.34 508.70,350.07 509.20,348.75 509.70,349.04 510.20,349.74 510.70,348.90 511.20,349.34 511.70,350.33 512.20,350.64 512.70,351.55 513.20,351.07 513.70,351.37 514.20,352.87 514.70,351.20 515.20,353.24 515.70,351.61 516.20,353.40 516.70,354.29 517.20,354.46 517.70,354.64 518.20,355.12 518.70,355.49 519.20,355.62 519.50,355.95 519.50,356.55 519.20,356.78 518.70,357.16 518.20,357.32 517.70,358.44 517.20,358.12 516.70,358.86 516.20,359.82 515.70,360.24 515.20,359.64 514.70,360.22 514.20,360.72 513.70,360.80 513.20,361.21 512.70,362.07 512.20,361.25 511.70,361.26 511.20,362.68 510.70,362.78 510.20,362.17 509.70,362.38 509.20,362.31 508.70,362.33 508.20,362.73 507.70,361.83 507.20,362.97 506.70,362.36 506.20,363.51 505.70,362.94 505.20,365.39 504.70,361.82 504.20,365.95 503.70,362.41 503.20,363.47 502.70,361.60 502.20,363.49 501.70,361.66 501.20,362.14 500.70,366.72 500.20,361.99 499.70,362.97 499.20,363.55 498.70,363.56 498.20,362.43 497.70,362.02 497.20,362.94 496.70,361.80 496.20,364.43 495.70,362.09 495.20,362.68 494.70,360.59 494.20,356.55" fill="#7c2c02"/>
<rect x="455.00" y="385.90" width="80.00" height="0.80" fill="#725400" opacity="0.55"/>
<polygon points="455.90,386.00 456.40,384.48 456.90,382.76 457.40,382.60 457.90,382.32 458.40,381.95 458.90,381.44 459.40,381.79 459.90,382.22 460.40,381.79 460.90,381.56 461.40,382.45 461.90,381.76 462.40,381.98 462.90,381.49 463.40,380.32 463.90,381.86 464.40,381.51 464.90,381.73 465.40,382.57 465.90,381.70 466.40,382.39 466.90,382.40 467.40,381.64 467.90,382.74 468.40,381.45 468.90,382.23 469.40,382.34 469.90,381.89 470.40,381.66 470.90,382.37 471.40,382.04 471.90,382.20 472.40,381.99 472.90,380.60 473.40,382.06 473.90,381.08 474.40,382.08 474.90,382.31 475.40,381.79 475.90,381.76 476.40,381.49 476.90,382.64 477.40,381.71 477.90,380.14 478.40,382.06 478.90,379.85 479.40,381.90 479.90,382.27 480.40,381.89 480.90,381.44 481.40,382.48 481.90,381.82 482.40,381.45 482.90,381.41 483.40,382.10 483.90,382.75 484.40,382.42 484.90,381.59 485.40,382.27 485.90,381.57 486.40,382.46 486.90,382.03 487.40,381.94 487.90,382.53 488.40,382.15 488.90,382.27 489.40,382.56 489.90,381.57 490.40,380.21 490.90,381.81 491.40,382.65 491.90,381.54 492.40,382.20 492.90,382.75 493.40,382.42 493.90,381.58 494.40,382.37 494.90,382.41 495.40,382.29 495.90,381.98 496.40,382.72 496.90,382.03 497.40,380.11 497.90,381.50 498.40,382.18 498.90,381.68 499.40,382.27 499.90,379.78 500.40,382.52 500.90,382.06 501.40,382.70 501.90,381.95 502.40,382.04 502.90,381.56 503.40,382.39 503.90,382.51 504.40,382.62 504.90,380.02 505.40,381.58 505.90,381.63 506.40,381.53 506.90,381.82 507.40,381.75 507.90,382.79 508.40,382.08 508.90,383.00 509.40,382.56 509.90,383.45 510.40,383.42 510.90,382.98 511.40,383.86 511.90,383.61 512.40,382.98 512.90,383.55 513.40,384.05 513.90,383.99 514.40,384.51 514.90,384.75 515.40,383.86 515.90,384.75 516.40,384.93 516.90,385.07 517.40,385.30 517.90,385.47 518.40,385.66 518.90,385.82 519.40,385.97 519.50,386.00 519.50,386.60 519.40,386.63 518.90,386.78 518.40,386.90 517.90,387.28 517.40,387.29 516.90,387.42 516.40,387.49 515.90,387.55 515.40,387.79 514.90,387.88 514.40,388.19 513.90,388.51 513.40,388.50 512.90,388.67 512.40,388.40 511.90,388.78 511.40,388.81 510.90,389.54 510.40,389.83 509.90,389.89 509.40,391.21 508.90,390.29 508.40,389.93 507.90,390.03 507.40,390.02 506.90,391.04 506.40,389.90 505.90,391.89 505.40,389.94 504.90,389.82 504.40,390.64 503.90,390.79 503.40,391.08 502.90,390.21 502.40,390.31 501.90,393.12 501.40,390.02 500.90,390.89 500.40,391.00 499.90,390.14 499.40,389.85 498.90,391.05 498.40,390.04 497.90,390.64 497.40,390.88 496.90,390.64 496.40,389.98 495.90,390.24 495.40,390.63 494.90,390.16 494.40,389.96 493.90,390.40 493.40,390.69 492.90,390.56 492.40,390.97 491.90,390.97 491.40,390.18 490.90,390.97 490.40,390.89 489.90,390.03 489.40,390.87 488.90,390.60 488.40,390.10 487.90,390.92 487.40,390.40 486.90,390.33 486.40,389.89 485.90,390.96 485.40,390.57 484.90,390.33 484.40,392.23 483.90,390.66 483.40,390.02 482.90,390.30 482.40,391.08 481.90,390.87 481.40,390.83 480.90,390.58 480.40,390.15 479.90,390.63 479.40,390.38 478.90,390.07 478.40,390.16 477.90,390.89 477.40,390.17 476.90,390.60 476.40,391.18 475.90,390.50 475.40,391.19 474.90,390.42 474.40,391.15 473.90,390.81 473.40,392.23 472.90,390.27 472.40,390.78 471.90,390.97 471.40,390.71 470.90,390.44 470.40,390.40 469.90,389.97 469.40,390.08 468.90,389.91 468.40,391.18 467.90,390.43 467.40,391.12 466.90,390.38 466.40,390.97 465.90,390.17 465.40,390.50 464.90,391.06 464.40,390.34 463.90,390.69 463.40,390.22 462.90,390.95 462.40,389.93 461.90,392.64 461.40,390.43 460.90,390.02 460.40,390.03 459.90,391.13 459.40,390.34 458.90,390.85 458.40,392.32 457.90,389.84 457.40,390.52 456.90,389.14 456.40,387.97 455.90,386.60" fill="#725400"/>
<rect x="291.00" y="417.20" width="283.00" height="0.80" fill="#6e8012" opacity="0.55"/>
<rect x="590.00" y="416.80" width="104.00" height="0.80" fill="#6e8012" opacity="0.55"/>
<polygon points="293.00,417.30 293.50,416.37 294.00,415.98 294.50,415.01 295.00,416.03 295.50,413.33 296.00,415.20 296.50,415.87 297.00,414.87 297.50,413.51 298.00,415.46 298.50,413.77 299.00,413.66 299.50,416.01 300.00,414.62 300.50,414.24 301.00,414.32 301.50,416.26 302.00,414.19 302.50,414.45 303.00,416.04 303.50,413.83 304.00,413.95 304.50,416.46 305.00,413.89 305.50,414.01 306.00,416.28 306.50,411.83 307.00,411.82 307.50,415.68 308.00,412.86 308.50,413.49 309.00,414.27 309.50,415.93 310.00,414.77 310.50,415.74 311.00,416.43 311.50,415.90 312.00,415.49 312.50,416.72 313.00,416.52 313.50,416.47 314.00,417.06 314.50,417.04 315.00,417.30 315.00,417.30 315.00,417.90 315.00,417.90 314.50,418.12 314.00,418.12 313.50,418.44 313.00,418.72 312.50,418.33 312.00,419.63 311.50,419.33 311.00,418.84 310.50,420.12 310.00,419.87 309.50,418.71 309.00,419.82 308.50,421.29 308.00,420.43 307.50,419.09 307.00,421.31 306.50,420.68 306.00,419.27 305.50,423.02 305.00,420.79 304.50,418.74 304.00,420.72 303.50,420.40 303.00,418.78 302.50,420.76 302.00,420.51 301.50,419.10 301.00,421.23 300.50,421.07 300.00,421.15 299.50,419.29 299.00,419.90 298.50,421.13 298.00,419.52 297.50,420.10 297.00,419.91 296.50,420.19 296.00,420.72 295.50,420.14 295.00,419.35 294.50,419.43 294.00,419.38 293.50,418.61 293.00,417.90" fill="#6e8012"/>
<polygon points="334.00,417.30 334.50,416.50 335.00,415.92 335.50,415.13 336.00,416.36 336.50,414.43 337.00,412.06 337.50,416.14 338.00,414.13 338.50,414.55 339.00,416.26 339.50,414.09 340.00,413.91 340.50,416.27 341.00,413.37 341.50,413.89 342.00,413.29 342.50,415.64 343.00,413.50 343.50,413.98 344.00,416.03 344.50,413.49 345.00,415.00 345.50,415.86 346.00,413.70 346.50,414.88 347.00,416.42 347.50,414.53 348.00,414.38 348.50,415.59 349.00,414.95 349.50,413.73 350.00,414.88 350.50,415.81 351.00,414.39 351.50,414.93 352.00,416.45 352.50,415.08 353.00,415.65 353.50,416.66 354.00,416.13 354.50,416.37 355.00,416.90 355.50,416.10 356.00,416.98 356.50,417.24 357.00,417.30 357.00,417.30 357.00,417.90 357.00,417.90 356.50,417.96 356.00,418.39 355.50,418.45 355.00,418.26 354.50,419.03 354.00,418.98 353.50,418.59 353.00,421.23 352.50,419.89 352.00,418.65 351.50,421.22 351.00,420.21 350.50,419.34 350.00,421.14 349.50,421.97 349.00,421.10 348.50,419.21 348.00,420.70 347.50,420.71 347.00,419.01 346.50,420.32 346.00,421.09 345.50,418.87 345.00,420.28 344.50,421.15 344.00,419.47 343.50,421.09 343.00,420.45 342.50,419.02 342.00,420.46 341.50,421.20 341.00,421.27 340.50,418.94 340.00,420.83 339.50,421.43 339.00,419.29 338.50,420.45 338.00,420.08 337.50,419.96 337.00,421.83 336.50,421.44 336.00,418.65 335.50,419.79 335.00,418.78 334.50,418.69 334.00,417.90" fill="#6e8012"/>
<polygon points="375.00,417.30 375.50,416.49 376.00,415.84 376.50,414.90 377.00,416.58 377.50,413.40 378.00,413.41 378.50,416.43 379.00,414.03 379.50,412.16 380.00,415.75 380.50,413.53 381.00,415.24 381.50,416.39 382.00,414.24 382.50,414.14 383.00,413.44 383.50,416.50 384.00,414.92 384.50,413.74 385.00,416.06 385.50,413.35 386.00,414.10 386.50,415.78 387.00,413.48 387.50,415.23 388.00,416.15 388.50,414.29 389.00,413.94 389.50,416.09 390.00,414.77 390.50,413.83 391.00,415.17 391.50,416.25 392.00,413.97 392.50,414.54 393.00,416.25 393.50,415.96 394.00,415.80 394.50,416.62 395.00,415.81 395.50,416.31 396.00,417.05 396.50,416.43 397.00,416.95 397.50,417.19 398.00,417.30 398.00,417.30 398.00,417.90 398.00,417.90 397.50,417.98 397.00,418.23 396.50,418.34 396.00,418.19 395.50,418.81 395.00,418.98 394.50,418.47 394.00,419.99 393.50,419.41 393.00,418.52 392.50,419.73 392.00,420.89 391.50,419.35 391.00,420.66 390.50,421.11 390.00,420.23 389.50,419.31 389.00,420.16 388.50,421.40 388.00,419.74 387.50,421.76 387.00,420.06 386.50,419.58 386.00,420.43 385.50,420.01 385.00,418.98 384.50,421.59 384.00,420.79 383.50,419.44 383.00,421.06 382.50,421.21 382.00,420.07 381.50,418.73 381.00,420.03 380.50,421.52 380.00,418.92 379.50,420.96 379.00,421.48 378.50,419.64 378.00,421.72 377.50,421.48 377.00,418.86 376.50,419.63 376.00,418.91 375.50,418.50 375.00,417.90" fill="#6e8012"/>
<polygon points="417.00,417.30 417.50,416.47 418.00,415.85 418.50,415.47 419.00,416.07 419.50,413.77 420.00,415.03 420.50,415.96 421.00,415.30 421.50,413.60 422.00,415.64 422.50,413.39 423.00,414.29 423.50,416.03 424.00,415.02 424.50,414.74 425.00,413.95 425.50,416.23 426.00,413.89 426.50,414.33 427.00,416.46 427.50,414.06 428.00,413.39 428.50,416.29 429.00,413.75 429.50,415.08 430.00,415.98 430.50,413.51 431.00,414.01 431.50,416.47 432.00,414.53 432.50,413.79 433.00,413.81 433.50,416.35 434.00,415.31 434.50,415.09 435.00,416.05 435.50,414.91 436.00,414.56 436.50,416.58 437.00,415.55 437.50,415.69 438.00,416.67 438.50,416.17 439.00,415.71 439.50,417.09 440.00,416.97 440.50,417.08 441.00,417.30 441.00,417.30 441.00,417.90 441.00,417.90 440.50,418.16 440.00,418.27 439.50,418.21 439.00,418.98 438.50,418.98 438.00,418.53 437.50,419.77 437.00,420.09 436.50,418.82 436.00,419.54 435.50,420.21 435.00,419.17 434.50,421.49 434.00,421.89 433.50,419.03 433.00,420.40 432.50,420.16 432.00,420.32 431.50,418.72 431.00,421.68 430.50,421.31 430.00,419.79 429.50,420.89 429.00,420.56 428.50,419.27 428.00,421.38 427.50,421.43 427.00,419.06 426.50,421.21 426.00,420.18 425.50,420.01 425.00,421.51 424.50,420.14 424.00,419.92 423.50,419.21 423.00,420.07 422.50,420.90 422.00,418.84 421.50,421.14 421.00,420.58 420.50,418.83 420.00,421.58 419.50,420.73 419.00,419.49 418.50,420.17 418.00,419.23 417.50,418.54 417.00,417.90" fill="#6e8012"/>
<polygon points="464.00,417.30 464.50,416.49 465.00,415.71 465.50,415.11 466.00,416.29 466.50,413.83 467.00,413.64 467.50,416.43 468.00,413.59 468.50,412.14 469.00,415.85 469.50,414.02 470.00,414.93 470.50,416.48 471.00,414.91 471.50,413.73 472.00,413.36 472.50,416.23 473.00,414.79 473.50,413.85 474.00,416.33 474.50,413.68 475.00,414.60 475.50,416.33 476.00,412.57 476.50,414.38 477.00,416.25 477.50,415.20 478.00,415.99 478.50,416.58 479.00,416.37 479.50,416.26 480.00,416.59 480.50,417.22 481.00,417.30 481.00,417.30 481.00,417.90 481.00,417.90 480.50,418.05 480.00,418.96 479.50,418.93 479.00,419.71 478.50,418.40 478.00,419.54 477.50,420.21 477.00,419.02 476.50,421.12 476.00,421.88 475.50,419.05 475.00,421.10 474.50,421.48 474.00,419.31 473.50,421.56 473.00,421.35 472.50,419.45 472.00,420.28 471.50,420.80 471.00,420.04 470.50,419.31 470.00,421.68 469.50,419.96 469.00,419.31 468.50,420.52 468.00,420.95 467.50,418.90 467.00,421.75 466.50,421.19 466.00,419.49 465.50,419.75 465.00,419.73 464.50,418.61 464.00,417.90" fill="#6e8012"/>
<polygon points="484.00,417.30 484.50,415.94 485.00,415.04 485.50,414.36 486.00,415.70 486.50,413.62 487.00,413.52 487.50,416.30 488.00,413.70 488.50,413.52 489.00,415.81 489.50,413.65 490.00,414.69 490.50,415.41 491.00,413.75 491.50,414.30 492.00,412.57 492.50,416.49 493.00,413.91 493.50,414.80 494.00,415.73 494.50,413.48 495.00,414.76 495.50,416.12 496.00,414.77 496.50,415.60 497.00,416.46 497.50,415.31 498.00,416.15 498.50,417.02 499.00,416.76 499.50,416.91 500.00,417.30 500.00,417.30 500.00,417.90 500.00,417.90 499.50,418.14 499.00,418.48 498.50,418.30 498.00,419.55 497.50,419.50 497.00,418.72 496.50,419.54 496.00,420.23 495.50,419.19 495.00,420.17 494.50,420.39 494.00,419.73 493.50,421.15 493.00,421.63 492.50,418.90 492.00,420.24 491.50,421.57 491.00,421.31 490.50,418.94 490.00,420.42 489.50,420.75 489.00,419.50 488.50,420.74 488.00,420.81 487.50,418.78 487.00,420.61 486.50,421.14 486.00,418.94 485.50,420.43 485.00,419.32 484.50,418.69 484.00,417.90" fill="#6e8012"/>
<polygon points="502.00,417.30 502.50,416.65 503.00,415.86 503.50,415.55 504.00,415.70 504.50,414.28 505.00,413.99 505.50,416.48 506.00,414.64 506.50,414.36 507.00,415.32 507.50,414.66 508.00,414.42 508.50,416.49 509.00,415.30 509.50,413.34 510.00,414.53 510.50,415.97 511.00,413.44 511.50,414.88 512.00,416.34 512.50,414.85 513.00,414.82 513.50,416.08 514.00,415.20 514.50,414.69 515.00,416.46 515.50,414.64 516.00,414.28 516.50,415.99 517.00,414.48 517.50,415.53 518.00,414.84 518.50,416.72 519.00,415.88 519.50,415.24 520.00,416.79 520.50,416.68 521.00,416.88 521.50,417.20 522.00,417.30 522.00,417.30 522.00,417.90 522.00,417.90 521.50,418.02 521.00,418.57 520.50,418.89 520.00,418.31 519.50,419.38 519.00,419.86 518.50,418.65 518.00,419.56 517.50,420.74 517.00,421.21 516.50,419.44 516.00,421.29 515.50,420.11 515.00,418.83 514.50,420.70 514.00,420.86 513.50,418.77 513.00,420.43 512.50,420.73 512.00,418.89 511.50,420.26 511.00,420.40 510.50,418.94 510.00,420.00 509.50,420.98 509.00,420.17 508.50,418.74 508.00,420.04 507.50,420.73 507.00,419.42 506.50,420.16 506.00,420.16 505.50,418.75 505.00,421.79 504.50,420.01 504.00,419.07 503.50,419.66 503.00,419.31 502.50,418.84 502.00,417.90" fill="#6e8012"/>
<polygon points="523.00,417.30 523.50,416.72 524.00,416.08 524.50,415.66 525.00,416.51 525.50,412.34 526.00,414.12 526.50,416.03 527.00,414.61 527.50,413.87 528.00,415.96 528.50,414.78 529.00,413.86 529.50,416.20 530.00,414.30 530.50,414.04 531.00,413.78 531.50,415.40 532.00,414.93 532.50,414.72 533.00,416.18 533.50,413.45 534.00,412.45 534.50,415.74 535.00,413.34 535.50,414.21 536.00,416.31 536.50,414.32 537.00,414.39 537.50,416.42 538.00,414.21 538.50,412.33 539.00,412.10 539.50,415.87 540.00,414.96 540.50,414.33 541.00,416.29 541.50,414.99 542.00,414.73 542.50,416.66 543.00,415.09 543.50,415.50 544.00,416.86 544.50,415.82 545.00,415.94 545.50,416.99 546.00,416.41 546.50,416.85 547.00,416.78 547.50,417.19 548.00,417.30 548.00,417.30 548.00,417.90 548.00,417.90 547.50,417.97 547.00,418.28 546.50,418.44 546.00,418.85 545.50,418.41 545.00,419.39 544.50,419.72 544.00,418.51 543.50,419.35 543.00,420.37 542.50,418.98 542.00,419.82 541.50,421.31 541.00,418.70 540.50,422.37 540.00,422.06 539.50,418.76 539.00,420.26 538.50,421.88 538.00,420.31 537.50,419.05 537.00,421.80 536.50,421.88 536.00,419.39 535.50,419.92 535.00,421.41 534.50,418.94 534.00,420.32 533.50,421.46 533.00,419.25 532.50,421.26 532.00,420.74 531.50,418.74 531.00,419.93 530.50,421.10 530.00,420.24 529.50,418.81 529.00,421.73 528.50,420.10 528.00,419.39 527.50,421.00 527.00,420.36 526.50,419.19 526.00,423.05 525.50,419.91 525.00,418.84 524.50,419.91 524.00,419.35 523.50,418.58 523.00,417.90" fill="#6e8012"/>
<polygon points="552.00,417.30 552.50,416.62 553.00,415.31 553.50,414.22 554.00,415.61 554.50,414.30 555.00,413.46 555.50,416.32 556.00,414.30 556.50,413.62 557.00,415.90 557.50,413.48 558.00,413.92 558.50,415.74 559.00,413.44 559.50,414.37 560.00,414.15 560.50,416.48 561.00,413.61 561.50,414.16 562.00,415.78 562.50,413.93 563.00,413.31 563.50,416.41 564.00,414.38 564.50,414.03 565.00,416.04 565.50,414.74 566.00,414.86 566.50,416.34 567.00,415.72 567.50,415.78 568.00,416.21 568.50,416.85 569.00,415.98 569.50,416.28 570.00,417.02 570.50,417.07 571.00,417.30 571.00,417.30 571.00,417.90 571.00,417.90 570.50,418.17 570.00,418.15 569.50,418.52 569.00,419.10 568.50,418.41 568.00,419.98 567.50,419.55 567.00,419.81 566.50,418.97 566.00,420.99 565.50,419.90 565.00,419.19 564.50,420.99 564.00,421.14 563.50,419.93 563.00,421.23 562.50,420.22 562.00,418.95 561.50,421.19 561.00,420.39 560.50,418.83 560.00,421.07 559.50,420.39 559.00,420.91 558.50,418.88 558.00,422.24 557.50,420.61 557.00,419.62 556.50,421.23 556.00,421.17 555.50,419.68 555.00,420.60 554.50,422.17 554.00,419.07 553.50,420.50 553.00,419.26 552.50,418.65 552.00,417.90" fill="#6e8012"/>
<polygon points="592.00,416.90 592.50,416.28 593.00,415.51 593.50,414.77 594.00,416.01 594.50,411.87 595.00,413.85 595.50,415.82 596.00,414.44 596.50,413.39 597.00,415.54 597.50,412.79 598.00,413.48 598.50,415.59 599.00,413.64 599.50,414.21 600.00,413.35 600.50,415.62 601.00,413.78 601.50,413.11 602.00,415.84 602.50,414.28 603.00,414.27 603.50,415.56 604.00,414.43 604.50,411.56 605.00,416.08 605.50,413.25 606.00,414.87 606.50,415.81 607.00,414.56 607.50,414.59 608.00,414.83 608.50,415.90 609.00,416.12 609.50,415.89 610.00,416.71 610.50,416.55 611.00,416.90 611.00,416.90 611.00,417.50 611.00,417.50 610.50,417.79 610.00,417.65 609.50,418.45 609.00,418.45 608.50,418.09 608.00,419.46 607.50,418.99 607.00,419.12 606.50,418.47 606.00,419.39 605.50,420.91 605.00,418.86 604.50,421.48 604.00,419.56 603.50,418.96 603.00,420.85 602.50,419.72 602.00,419.81 601.50,420.17 601.00,419.94 600.50,419.46 600.00,420.84 599.50,420.80 599.00,420.02 598.50,418.40 598.00,421.04 597.50,420.15 597.00,418.67 596.50,421.11 596.00,422.22 595.50,418.87 595.00,420.71 594.50,422.23 594.00,418.68 593.50,419.13 593.00,419.11 592.50,418.23 592.00,417.50" fill="#6e8012"/>
<polygon points="615.00,416.90 615.50,415.62 616.00,414.53 616.50,414.40 617.00,415.52 617.50,414.20 618.00,413.07 618.50,415.74 619.00,413.97 619.50,411.44 620.00,415.71 620.50,412.77 621.00,413.68 621.50,415.39 622.00,413.99 622.50,413.43 623.00,414.20 623.50,415.80 624.00,414.51 624.50,412.08 625.00,415.68 625.50,413.59 626.00,413.19 626.50,415.82 627.00,414.45 627.50,414.87 628.00,416.34 628.50,415.68 629.00,416.15 629.50,416.51 630.00,416.58 630.50,416.84 630.60,416.90 630.60,417.50 630.50,417.58 630.00,417.98 629.50,417.77 629.00,418.78 628.50,418.50 628.00,418.00 627.50,419.21 627.00,419.39 626.50,419.53 626.00,420.43 625.50,420.20 625.00,418.80 624.50,420.30 624.00,420.80 623.50,418.53 623.00,420.81 622.50,420.67 622.00,420.91 621.50,418.79 621.00,419.88 620.50,420.64 620.00,418.34 619.50,421.33 619.00,420.38 618.50,418.32 618.00,420.63 617.50,420.44 617.00,418.93 616.50,420.44 616.00,419.27 615.50,418.59 615.00,417.50" fill="#6e8012"/>
<polygon points="634.00,416.90 634.50,416.39 635.00,415.19 635.50,412.77 636.00,415.94 636.50,414.15 637.00,414.72 637.50,415.95 638.00,413.48 638.50,414.22 639.00,415.29 639.50,413.67 640.00,411.55 640.50,415.94 641.00,413.22 641.50,412.51 642.00,414.65 642.50,415.67 643.00,413.45 643.50,413.96 644.00,415.42 644.50,414.29 645.00,413.37 645.50,415.86 646.00,413.16 646.50,413.45 647.00,415.46 647.50,413.36 648.00,413.81 648.50,415.48 649.00,414.74 649.50,414.24 650.00,415.54 650.50,416.21 651.00,415.77 651.50,415.77 652.00,416.64 652.50,416.29 653.00,416.44 653.50,416.83 653.80,416.90 653.80,417.50 653.50,417.56 653.00,417.80 652.50,418.16 652.00,417.91 651.50,418.60 651.00,419.10 650.50,418.24 650.00,419.33 649.50,420.33 649.00,419.31 648.50,418.35 648.00,421.15 647.50,420.60 647.00,418.76 646.50,420.54 646.00,421.31 645.50,418.34 645.00,420.97 644.50,419.65 644.00,419.09 643.50,420.60 643.00,420.52 642.50,418.54 642.00,421.50 641.50,421.00 641.00,421.19 640.50,418.75 640.00,421.45 639.50,420.80 639.00,418.89 638.50,421.13 638.00,420.42 637.50,418.89 637.00,421.24 636.50,421.54 636.00,418.41 635.50,419.49 635.00,418.72 634.50,418.26 634.00,417.50" fill="#6e8012"/>
<polygon points="656.30,416.90 656.80,416.50 657.30,416.33 657.80,415.67 658.30,415.81 658.80,414.33 659.30,413.69 659.80,415.66 660.30,413.76 660.80,413.46 661.30,415.65 661.80,413.46 662.30,413.72 662.80,415.49 663.30,413.02 663.80,414.38 664.30,414.25 664.80,415.68 665.30,413.34 665.80,413.28 666.30,415.92 666.80,413.34 667.30,414.86 667.80,415.42 668.30,414.05 668.80,412.07 669.30,415.84 669.80,413.38 670.30,413.12 670.80,415.51 671.30,413.01 671.80,413.82 672.30,413.66 672.80,415.67 673.30,414.58 673.80,414.80 674.30,415.80 674.80,413.86 675.30,414.58 675.80,415.59 676.30,413.73 676.80,413.21 677.30,415.63 677.80,414.35 678.30,414.68 678.80,416.03 679.30,413.30 679.80,414.71 680.30,413.02 680.80,415.10 681.30,413.85 681.80,414.12 682.30,415.95 682.80,412.79 683.30,415.05 683.80,416.23 684.30,415.39 684.80,414.86 685.30,416.21 685.80,414.94 686.30,415.57 686.80,416.22 687.30,415.35 687.80,415.38 688.30,415.48 688.80,416.30 689.30,416.09 689.80,416.02 690.30,416.64 690.80,416.40 691.30,416.60 691.80,416.81 692.30,416.90 692.30,416.90 692.30,417.50 692.30,417.50 691.80,417.56 691.30,417.85 690.80,417.84 690.30,417.74 689.80,418.03 689.30,418.42 688.80,417.86 688.30,418.82 687.80,418.39 687.30,419.06 686.80,418.68 686.30,419.71 685.80,418.88 685.30,418.40 684.80,419.10 684.30,419.01 683.80,419.10 683.30,419.40 682.80,419.70 682.30,418.96 681.80,420.84 681.30,419.70 680.80,418.76 680.30,420.08 679.80,422.63 679.30,420.67 678.80,418.43 678.30,419.90 677.80,421.80 677.30,418.50 676.80,421.40 676.30,420.01 675.80,418.90 675.30,420.04 674.80,420.36 674.30,418.52 673.80,420.85 673.30,421.36 672.80,418.95 672.30,419.66 671.80,420.35 671.30,421.43 670.80,418.76 670.30,421.36 669.80,422.46 669.30,418.50 668.80,420.81 668.30,419.90 667.80,419.40 667.30,420.52 666.80,420.15 666.30,418.68 665.80,420.74 665.30,419.68 664.80,418.42 664.30,420.66 663.80,420.97 663.30,419.80 662.80,418.91 662.30,419.64 661.80,419.84 661.30,419.09 660.80,420.44 660.30,421.12 659.80,419.00 659.30,419.25 658.80,419.11 658.30,418.07 657.80,419.01 657.30,418.44 656.80,417.82 656.30,417.50" fill="#6e8012"/>
<rect x="514.00" y="447.60" width="60.00" height="0.80" fill="#3f8a1e" opacity="0.55"/>
<rect x="590.00" y="448.10" width="104.00" height="0.80" fill="#3f8a1e" opacity="0.55"/>
<polygon points="523.00,447.90 523.50,447.69 524.00,447.56 524.50,447.06 525.00,446.86 525.50,446.96 526.00,447.32 526.50,447.29 527.00,446.95 527.50,447.12 528.00,446.97 528.50,446.83 529.00,447.20 529.50,446.76 530.00,447.13 530.50,447.07 531.00,447.20 531.50,447.04 532.00,447.34 532.50,447.11 533.00,446.49 533.50,447.06 534.00,446.92 534.50,446.88 535.00,447.02 535.50,447.14 536.00,446.93 536.50,447.01 537.00,447.05 537.50,446.75 538.00,446.99 538.50,447.37 539.00,447.44 539.50,447.41 540.00,447.68 540.50,447.78 541.00,447.90 541.00,447.90 541.00,448.50 541.00,448.50 540.50,448.64 540.00,448.66 539.50,448.76 539.00,448.78 538.50,449.43 538.00,449.17 537.50,449.28 537.00,449.57 536.50,450.06 536.00,449.45 535.50,449.15 535.00,449.42 534.50,449.70 534.00,449.08 533.50,449.01 533.00,449.70 532.50,449.44 532.00,449.45 531.50,449.51 531.00,449.08 530.50,449.31 530.00,449.00 529.50,449.33 529.00,449.23 528.50,449.59 528.00,449.68 527.50,449.68 527.00,449.63 526.50,449.43 526.00,449.43 525.50,449.29 525.00,449.37 524.50,449.08 524.00,448.92 523.50,448.73 523.00,448.50" fill="#3f8a1e"/>
<polygon points="553.00,447.90 553.50,447.49 554.00,447.17 554.50,447.02 555.00,446.86 555.50,446.81 556.00,447.10 556.50,446.91 557.00,447.26 557.50,446.97 558.00,447.24 558.50,446.92 559.00,446.77 559.50,447.41 560.00,447.21 560.50,446.83 561.00,446.93 561.50,447.01 562.00,447.36 562.50,446.42 563.00,446.71 563.50,447.26 564.00,447.24 564.50,447.39 565.00,447.42 565.50,447.20 566.00,446.88 566.50,447.16 567.00,447.46 567.50,447.59 568.00,447.45 568.50,447.74 569.00,447.90 569.00,447.90 569.00,448.50 569.00,448.50 568.50,448.59 568.00,448.77 567.50,449.08 567.00,448.82 566.50,448.95 566.00,449.98 565.50,449.55 565.00,449.60 564.50,449.53 564.00,449.34 563.50,449.22 563.00,449.42 562.50,449.51 562.00,449.36 561.50,449.01 561.00,449.22 560.50,449.46 560.00,449.00 559.50,449.51 559.00,449.40 558.50,449.22 558.00,449.40 557.50,449.53 557.00,449.17 556.50,449.81 556.00,449.69 555.50,449.50 555.00,449.54 554.50,449.08 554.00,449.52 553.50,448.66 553.00,448.50" fill="#3f8a1e"/>
<polygon points="594.60,447.90 595.10,447.70 595.60,447.09 596.10,447.20 596.60,447.08 597.10,447.00 597.60,446.89 598.10,446.79 598.60,446.92 599.10,446.84 599.60,447.21 600.10,446.99 600.60,446.72 601.10,446.71 601.60,447.04 602.10,446.89 602.60,446.71 603.10,446.82 603.60,446.79 604.10,446.79 604.60,446.92 605.10,447.41 605.60,447.27 606.10,447.34 606.60,447.23 607.10,447.44 607.60,447.43 608.10,447.61 608.60,447.74 609.00,447.90 609.00,448.50 608.60,448.59 608.10,448.75 607.60,448.82 607.10,448.84 606.60,449.42 606.10,449.12 605.60,449.34 605.10,449.55 604.60,449.45 604.10,449.12 603.60,448.98 603.10,449.52 602.60,449.62 602.10,449.09 601.60,449.11 601.10,449.33 600.60,449.45 600.10,449.18 599.60,449.18 599.10,449.66 598.60,449.13 598.10,449.04 597.60,449.25 597.10,449.00 596.60,449.48 596.10,449.20 595.60,449.33 595.10,448.84 594.60,448.50" fill="#3f8a1e"/>
<polygon points="615.00,447.90 615.50,447.49 616.00,447.03 616.50,447.04 617.00,447.00 617.50,446.19 618.00,447.00 618.50,447.37 619.00,446.73 619.50,446.85 620.00,446.85 620.50,446.97 621.00,447.32 621.50,447.17 622.00,447.22 622.50,447.26 623.00,446.76 623.50,447.26 624.00,446.77 624.50,447.14 625.00,447.16 625.50,447.11 626.00,447.36 626.50,447.50 627.00,447.66 627.50,447.71 628.00,447.90 628.00,447.90 628.00,448.50 628.00,448.50 627.50,448.65 627.00,448.81 626.50,448.81 626.00,449.26 625.50,449.02 625.00,449.43 624.50,449.61 624.00,449.12 623.50,449.30 623.00,449.50 622.50,449.04 622.00,449.37 621.50,449.45 621.00,449.09 620.50,449.60 620.00,449.41 619.50,449.50 619.00,449.25 618.50,449.56 618.00,449.35 617.50,449.41 617.00,449.20 616.50,449.33 616.00,449.15 615.50,448.77 615.00,448.50" fill="#3f8a1e"/>
<polygon points="635.70,447.90 636.20,447.70 636.70,447.11 637.20,447.45 637.70,447.11 638.20,446.98 638.70,446.23 639.20,447.12 639.70,447.41 640.20,446.74 640.70,447.19 641.20,447.12 641.70,447.11 642.20,447.17 642.70,447.39 643.20,446.85 643.70,446.93 644.20,447.08 644.70,446.95 645.20,447.06 645.70,446.94 646.20,447.21 646.70,446.70 647.20,446.76 647.70,447.04 648.20,447.38 648.70,447.39 649.20,447.24 649.70,447.06 650.20,447.41 650.70,447.42 651.20,447.66 651.70,447.79 652.00,447.90 652.00,448.50 651.70,448.56 651.20,448.64 650.70,448.92 650.20,448.92 649.70,448.95 649.20,449.37 648.70,449.50 648.20,449.31 647.70,449.04 647.20,449.64 646.70,449.53 646.20,449.37 645.70,449.29 645.20,449.67 644.70,449.42 644.20,449.50 643.70,449.14 643.20,449.38 642.70,449.08 642.20,449.21 641.70,449.02 641.20,449.01 640.70,449.21 640.20,449.08 639.70,449.67 639.20,449.00 638.70,449.63 638.20,449.10 637.70,449.37 637.20,449.29 636.70,448.90 636.20,448.83 635.70,448.50" fill="#3f8a1e"/>
<polygon points="656.30,447.90 656.80,447.72 657.30,447.68 657.80,447.23 658.30,446.92 658.80,447.30 659.30,447.13 659.80,447.25 660.30,447.18 660.80,447.03 661.30,447.23 661.80,446.90 662.30,447.18 662.80,447.42 663.30,447.12 663.80,446.64 664.30,447.23 664.80,447.13 665.30,447.36 665.80,446.81 666.30,447.34 666.80,446.71 667.30,446.94 667.80,447.28 668.30,446.86 668.80,447.10 669.30,446.76 669.80,446.80 670.30,447.40 670.80,447.25 671.30,447.32 671.80,446.83 672.30,446.96 672.80,447.36 673.30,447.05 673.80,446.73 674.30,446.77 674.80,446.88 675.30,447.08 675.80,447.14 676.30,447.23 676.80,447.33 677.30,447.34 677.80,447.37 678.30,447.72 678.80,447.62 679.30,447.65 679.80,447.88 680.00,447.90 680.00,448.50 679.80,448.56 679.30,448.66 678.80,448.77 678.30,448.73 677.80,449.02 677.30,448.84 676.80,448.83 676.30,449.12 675.80,449.29 675.30,449.30 674.80,449.25 674.30,448.99 673.80,449.21 673.30,449.00 672.80,450.04 672.30,449.24 671.80,449.37 671.30,449.65 670.80,448.98 670.30,449.14 669.80,448.99 669.30,449.36 668.80,448.99 668.30,449.68 667.80,449.52 667.30,449.20 666.80,449.65 666.30,449.39 665.80,449.19 665.30,449.69 664.80,449.40 664.30,449.32 663.80,449.46 663.30,449.27 662.80,449.37 662.30,450.23 661.80,449.63 661.30,449.66 660.80,449.18 660.30,449.15 659.80,449.49 659.30,449.62 658.80,449.38 658.30,449.58 657.80,448.90 657.30,448.95 656.80,448.69 656.30,448.50" fill="#3f8a1e"/>
<rect x="325.00" y="479.20" width="249.00" height="0.80" fill="#137812" opacity="0.55"/>
<rect x="590.00" y="479.40" width="73.00" height="0.80" fill="#137812" opacity="0.55"/>
<polygon points="332.00,479.40 332.50,478.86 333.00,478.48 333.50,478.15 334.00,478.75 334.50,477.26 335.00,476.52 335.50,478.19 336.00,477.42 336.50,476.81 337.00,477.89 337.50,474.46 338.00,476.18 338.50,477.88 339.00,474.02 339.50,477.22 340.00,475.71 340.50,478.30 341.00,476.95 341.50,476.26 342.00,478.49 342.50,476.13 343.00,476.03 343.50,477.92 344.00,475.09 344.50,476.57 345.00,478.57 345.50,476.51 346.00,476.51 346.50,478.50 347.00,476.20 347.50,475.67 348.00,475.60 348.50,478.12 349.00,477.20 349.50,477.08 350.00,478.15 350.50,477.09 351.00,476.70 351.50,478.84 352.00,476.57 352.50,477.32 353.00,478.82 353.50,477.84 354.00,478.44 354.50,479.04 355.00,478.73 355.50,478.69 356.00,478.95 356.50,479.34 357.00,479.40 357.00,479.40 357.00,480.00 357.00,480.00 356.50,480.06 356.00,480.44 355.50,480.43 355.00,480.76 354.50,480.28 354.00,481.14 353.50,481.50 353.00,480.70 352.50,482.04 352.00,482.39 351.50,480.68 351.00,481.55 350.50,482.42 350.00,481.33 349.50,482.55 349.00,482.35 348.50,481.46 348.00,483.64 347.50,483.37 347.00,482.37 346.50,480.95 346.00,482.64 345.50,483.51 345.00,481.03 344.50,483.46 344.00,483.53 343.50,481.13 343.00,483.12 342.50,483.48 342.00,481.05 341.50,484.89 341.00,482.33 340.50,480.91 340.00,482.33 339.50,483.36 339.00,481.96 338.50,481.22 338.00,483.73 337.50,482.57 337.00,481.46 336.50,483.75 336.00,484.86 335.50,481.37 335.00,483.06 334.50,483.50 334.00,481.05 333.50,481.73 333.00,480.90 332.50,480.65 332.00,480.00" fill="#137812"/>
<polygon points="416.00,479.40 416.50,479.02 417.00,477.30 417.50,477.46 418.00,478.58 418.50,477.21 419.00,475.64 419.50,478.55 420.00,476.50 420.50,477.13 421.00,477.89 421.50,476.18 422.00,477.14 422.50,477.90 423.00,476.26 423.50,476.35 424.00,475.83 424.50,477.43 425.00,476.59 425.50,477.26 426.00,478.35 426.50,477.36 427.00,476.20 427.50,477.94 428.00,476.49 428.50,476.89 429.00,478.60 429.50,476.55 430.00,475.64 430.50,478.18 431.00,475.66 431.50,476.58 432.00,476.37 432.50,478.10 433.00,476.49 433.50,477.47 434.00,478.46 434.50,476.41 435.00,476.70 435.50,478.72 436.00,477.38 436.50,477.72 437.00,478.99 437.50,477.77 438.00,478.39 438.50,478.86 439.00,478.42 439.50,478.66 440.00,478.91 440.50,479.32 441.00,479.40 441.00,479.40 441.00,480.00 441.00,480.00 440.50,480.09 440.00,480.66 439.50,480.66 439.00,480.72 438.50,480.35 438.00,480.97 437.50,481.38 437.00,480.77 436.50,482.11 436.00,481.96 435.50,480.65 435.00,481.92 434.50,482.43 434.00,480.81 433.50,483.43 433.00,482.93 432.50,481.25 432.00,482.85 431.50,482.84 431.00,483.57 430.50,481.11 430.00,482.48 429.50,483.51 429.00,481.27 428.50,482.01 428.00,482.38 427.50,480.82 427.00,483.35 426.50,483.35 426.00,481.30 425.50,484.09 425.00,484.43 424.50,481.50 424.00,483.02 423.50,483.67 423.00,483.04 422.50,481.21 422.00,482.78 421.50,482.74 421.00,481.31 420.50,482.75 420.00,482.34 419.50,480.76 419.00,482.62 418.50,481.95 418.00,480.87 417.50,482.26 417.00,481.13 416.50,480.42 416.00,480.00" fill="#137812"/>
<polygon points="465.00,479.40 465.50,478.93 466.00,478.42 466.50,478.30 467.00,478.56 467.50,477.79 468.00,476.93 468.50,478.17 469.00,475.92 469.50,476.18 470.00,477.97 470.50,477.20 471.00,476.36 471.50,478.45 472.00,476.41 472.50,476.88 473.00,477.33 473.50,477.52 474.00,477.42 474.50,477.32 475.00,478.38 475.50,477.12 476.00,476.92 476.50,477.89 477.00,476.84 477.50,476.36 478.00,478.09 478.50,475.86 479.00,476.47 479.50,478.15 480.00,476.02 480.50,477.18 481.00,476.83 481.50,478.12 482.00,476.51 482.50,475.36 483.00,478.23 483.50,477.28 484.00,476.62 484.50,478.30 485.00,476.66 485.50,474.31 486.00,478.17 486.50,475.95 487.00,476.70 487.50,478.19 488.00,475.61 488.50,476.27 489.00,476.60 489.50,477.93 490.00,476.22 490.50,477.26 491.00,478.46 491.50,476.66 492.00,477.55 492.50,477.85 493.00,477.17 493.50,477.46 494.00,478.42 494.50,478.31 495.00,478.46 495.50,478.97 496.00,478.43 496.50,478.59 497.00,478.74 497.50,479.09 498.00,478.42 498.50,479.12 499.00,479.20 499.50,479.30 500.00,479.40 500.00,479.40 500.00,480.00 500.00,480.00 499.50,480.13 499.00,480.13 498.50,480.48 498.00,480.64 497.50,480.19 497.00,480.76 496.50,480.65 496.00,481.15 495.50,480.41 495.00,481.44 494.50,481.36 494.00,481.15 493.50,481.19 493.00,482.04 492.50,480.89 492.00,482.45 491.50,482.06 491.00,481.15 490.50,483.27 490.00,482.59 489.50,481.14 489.00,484.95 488.50,483.64 488.00,482.63 487.50,480.85 487.00,482.91 486.50,485.32 486.00,481.03 485.50,482.61 485.00,483.05 484.50,480.86 484.00,482.15 483.50,484.74 483.00,481.10 482.50,483.25 482.00,483.11 481.50,481.38 481.00,483.38 480.50,483.28 480.00,482.39 479.50,481.52 479.00,483.14 478.50,483.39 478.00,480.88 477.50,483.33 477.00,485.09 476.50,481.07 476.00,482.89 475.50,483.60 475.00,481.23 474.50,482.71 474.00,482.36 473.50,481.29 473.00,482.48 472.50,483.65 472.00,481.99 471.50,480.89 471.00,482.39 470.50,483.52 470.00,481.13 469.50,483.58 469.00,482.94 468.50,481.08 468.00,482.71 467.50,481.85 467.00,480.58 466.50,480.91 466.00,481.36 465.50,480.39 465.00,480.00" fill="#137812"/>
<polygon points="523.00,479.40 523.50,478.97 524.00,477.99 524.50,478.19 525.00,478.74 525.50,476.00 526.00,476.51 526.50,478.44 527.00,475.28 527.50,477.43 528.00,478.62 528.50,476.60 529.00,473.97 529.50,477.89 530.00,476.02 530.50,476.20 531.00,477.12 531.50,478.45 532.00,476.99 532.50,477.12 533.00,478.19 533.50,475.62 534.00,475.72 534.50,478.22 535.00,474.06 535.50,476.13 536.00,478.45 536.50,477.31 537.00,477.13 537.50,478.22 538.00,476.90 538.50,476.82 539.00,475.42 539.50,478.39 540.00,476.58 540.50,476.47 541.00,478.04 541.50,477.25 542.00,476.80 542.50,478.14 543.00,477.10 543.50,476.35 544.00,478.56 544.50,476.46 545.00,478.06 545.50,478.98 546.00,478.50 546.50,478.07 547.00,478.52 547.50,479.17 548.00,479.05 548.50,479.23 549.00,479.40 549.00,479.40 549.00,480.00 549.00,480.00 548.50,480.14 548.00,480.42 547.50,480.20 547.00,480.60 546.50,480.96 546.00,480.74 545.50,480.51 545.00,481.40 544.50,481.78 544.00,480.94 543.50,481.55 543.00,483.40 542.50,480.91 542.00,482.54 541.50,482.39 541.00,481.47 540.50,482.41 540.00,483.13 539.50,481.49 539.00,482.26 538.50,482.78 538.00,482.99 537.50,481.33 537.00,483.21 536.50,482.04 536.00,481.32 535.50,482.79 535.00,484.01 534.50,481.45 534.00,482.53 533.50,483.25 533.00,480.88 532.50,482.51 532.00,482.06 531.50,481.22 531.00,483.66 530.50,483.53 530.00,484.81 529.50,481.21 529.00,482.46 528.50,482.88 528.00,481.28 527.50,483.08 527.00,481.93 526.50,481.35 526.00,482.35 525.50,481.89 525.00,480.88 524.50,482.04 524.00,480.79 523.50,480.73 523.00,480.00" fill="#137812"/>
<polygon points="553.00,479.40 553.50,478.31 554.00,477.47 554.50,477.34 555.00,478.60 555.50,474.50 556.00,476.36 556.50,478.39 557.00,477.07 557.50,475.91 558.00,478.43 558.50,475.47 559.00,476.16 559.50,478.61 560.00,477.22 560.50,475.91 561.00,476.44 561.50,478.02 562.00,476.02 562.50,476.19 563.00,478.32 563.50,476.14 564.00,477.26 564.50,478.17 565.00,477.53 565.50,476.10 566.00,478.54 566.50,477.11 567.00,478.17 567.50,478.78 568.00,478.02 568.50,478.61 569.00,478.65 569.50,479.31 570.00,479.40 570.00,479.40 570.00,480.00 570.00,480.00 569.50,480.12 569.00,480.41 568.50,481.10 568.00,481.03 567.50,480.42 567.00,481.54 566.50,482.44 566.00,481.08 565.50,481.70 565.00,482.68 564.50,480.97 564.00,482.28 563.50,482.83 563.00,481.15 562.50,482.25 562.00,482.85 561.50,481.15 561.00,482.85 560.50,483.40 560.00,484.08 559.50,481.56 559.00,483.13 558.50,483.13 558.00,481.24 557.50,482.11 557.00,481.96 556.50,481.26 556.00,482.36 555.50,483.07 555.00,480.87 554.50,481.99 554.00,481.89 553.50,481.05 553.00,480.00" fill="#137812"/>
<polygon points="594.60,479.40 595.10,478.43 595.60,477.38 596.10,477.10 596.60,478.05 597.10,476.20 597.60,476.53 598.10,478.46 598.60,477.14 599.10,476.00 599.60,478.64 600.10,475.88 600.60,475.94 601.10,477.94 601.60,475.85 602.10,477.37 602.60,475.46 603.10,478.42 603.60,476.57 604.10,476.88 604.60,478.09 605.10,476.51 605.60,476.60 606.10,478.33 606.60,477.17 607.10,476.78 607.60,478.55 608.10,477.93 608.60,477.97 609.10,478.82 609.60,478.62 610.10,479.03 610.60,479.20 611.00,479.40 611.00,480.00 610.60,480.30 610.10,480.63 609.60,480.79 609.10,480.39 608.60,481.55 608.10,481.49 607.60,480.80 607.10,482.64 606.60,482.06 606.10,481.11 605.60,483.69 605.10,483.51 604.60,481.36 604.10,482.66 603.60,483.27 603.10,480.91 602.60,483.14 602.10,482.18 601.60,482.94 601.10,481.46 600.60,483.69 600.10,483.53 599.60,481.42 599.10,483.22 598.60,483.45 598.10,481.04 597.60,482.76 597.10,483.06 596.60,481.02 596.10,482.96 595.60,482.73 595.10,481.10 594.60,480.00" fill="#137812"/>
<polygon points="615.00,479.40 615.50,478.53 616.00,478.19 616.50,476.46 617.00,478.60 617.50,477.17 618.00,475.70 618.50,478.06 619.00,476.91 619.50,475.65 620.00,477.31 620.50,477.05 621.00,476.00 621.50,478.02 622.00,476.75 622.50,476.49 623.00,477.41 623.50,478.29 624.00,477.09 624.50,476.92 625.00,478.01 625.50,476.54 626.00,475.93 626.50,478.13 627.00,477.04 627.50,477.85 628.00,478.75 628.50,477.45 629.00,477.65 629.50,478.85 630.00,478.58 630.50,478.93 631.00,478.98 631.50,479.40 631.50,479.40 631.50,480.00 631.50,480.00 631.00,480.28 630.50,480.40 630.00,481.07 629.50,480.54 629.00,481.50 628.50,481.82 628.00,480.83 627.50,483.00 627.00,483.21 626.50,481.29 626.00,483.00 625.50,483.59 625.00,480.77 624.50,482.13 624.00,482.83 623.50,481.20 623.00,483.27 622.50,482.92 622.00,482.48 621.50,480.96 621.00,483.54 620.50,483.38 620.00,481.41 619.50,482.56 619.00,482.84 618.50,481.03 618.00,482.60 617.50,482.65 617.00,481.27 616.50,483.16 616.00,481.33 615.50,480.74 615.00,480.00" fill="#137812"/>
<polygon points="635.00,479.40 635.50,478.49 636.00,477.28 636.50,476.85 637.00,477.89 637.50,474.68 638.00,477.47 638.50,478.39 639.00,476.44 639.50,477.06 640.00,478.35 640.50,476.28 641.00,476.48 641.50,478.51 642.00,477.44 642.50,476.84 643.00,476.61 643.50,477.58 644.00,475.89 644.50,477.11 645.00,478.19 645.50,476.15 646.00,476.02 646.50,478.16 647.00,476.36 647.50,476.68 648.00,477.94 648.50,477.80 649.00,478.22 649.50,478.93 650.00,478.57 650.50,478.65 651.00,478.66 651.50,479.27 652.00,479.40 652.00,479.40 652.00,480.00 652.00,480.00 651.50,480.14 651.00,480.75 650.50,481.03 650.00,481.16 649.50,480.68 649.00,481.66 648.50,482.22 648.00,480.80 647.50,482.61 647.00,483.34 646.50,481.21 646.00,482.37 645.50,482.41 645.00,481.42 644.50,482.65 644.00,483.03 643.50,481.26 643.00,483.14 642.50,482.55 642.00,483.49 641.50,482.16 641.00,482.11 640.50,484.61 640.00,480.97 639.50,484.48 639.00,483.51 638.50,480.88 638.00,482.02 637.50,483.09 637.00,482.15 636.50,484.62 636.00,482.91 635.50,480.71 635.00,480.00" fill="#137812"/>
<polygon points="656.30,479.40 656.80,476.60 657.30,476.87 657.80,477.06 658.30,478.40 658.80,476.21 659.30,477.09 659.80,478.04 660.30,476.05 660.80,477.77 661.30,479.22 661.50,479.40 661.50,480.00 661.30,480.18 660.80,481.64 660.30,481.68 659.80,481.20 659.30,482.72 658.80,481.90 658.30,481.48 657.80,483.58 657.30,482.52 656.80,482.59 656.30,480.00" fill="#137812"/>
<defs><linearGradient id="shd" x1="0" x2="1" y1="0" y2="0"><stop offset="0" stop-color="#000" stop-opacity="0.45"/><stop offset="1" stop-color="#000" stop-opacity="0"/></linearGradient></defs>
<rect x="199.10" y="93.30" width="1.60" height="429.70" fill="url(#shd)" />
<rect x="229.00" y="93.30" width="1.00" height="429.70" fill="rgba(0,0,0,0.2)" />
<rect x="228.00" y="93.30" width="1.00" height="429.70" fill="rgba(0,0,0,0.035)" />
<rect x="230.00" y="93.30" width="1.00" height="429.70" fill="rgba(0,0,0,0.035)" />
<rect x="260.00" y="93.30" width="1.00" height="429.70" fill="rgba(0,0,0,0.2)" />
<rect x="259.00" y="93.30" width="1.00" height="429.70" fill="rgba(0,0,0,0.035)" />
<rect x="261.00" y="93.30" width="1.00" height="429.70" fill="rgba(0,0,0,0.035)" />
<rect x="290.00" y="93.30" width="1.00" height="429.70" fill="rgba(0,0,0,0.2)" />
<rect x="289.00" y="93.30" width="1.00" height="429.70" fill="rgba(0,0,0,0.035)" />
<rect x="291.00" y="93.30" width="1.00" height="429.70" fill="rgba(0,0,0,0.035)" />
<rect x="321.00" y="93.30" width="1.00" height="429.70" fill="rgba(0,0,0,0.2)" />
<rect x="320.00" y="93.30" width="1.00" height="429.70" fill="rgba(0,0,0,0.035)" />
<rect x="322.00" y="93.30" width="1.00" height="429.70" fill="rgba(0,0,0,0.035)" />
<rect x="352.00" y="93.30" width="1.00" height="429.70" fill="rgba(0,0,0,0.2)" />
<rect x="351.00" y="93.30" width="1.00" height="429.70" fill="rgba(0,0,0,0.035)" />
<rect x="353.00" y="93.30" width="1.00" height="429.70" fill="rgba(0,0,0,0.035)" />
<rect x="383.00" y="93.30" width="1.00" height="429.70" fill="rgba(0,0,0,0.2)" />
<rect x="382.00" y="93.30" width="1.00" height="429.70" fill="rgba(0,0,0,0.035)" />
<rect x="384.00" y="93.30" width="1.00" height="429.70" fill="rgba(0,0,0,0.035)" />
<rect x="414.00" y="93.30" width="1.00" height="429.70" fill="rgba(0,0,0,0.2)" />
<rect x="413.00" y="93.30" width="1.00" height="429.70" fill="rgba(0,0,0,0.035)" />
<rect x="415.00" y="93.30" width="1.00" height="429.70" fill="rgba(0,0,0,0.035)" />
<rect x="445.00" y="93.30" width="1.00" height="429.70" fill="rgba(0,0,0,0.2)" />
<rect x="444.00" y="93.30" width="1.00" height="429.70" fill="rgba(0,0,0,0.035)" />
<rect x="446.00" y="93.30" width="1.00" height="429.70" fill="rgba(0,0,0,0.035)" />
<rect x="476.00" y="93.30" width="1.00" height="429.70" fill="rgba(0,0,0,0.2)" />
<rect x="475.00" y="93.30" width="1.00" height="429.70" fill="rgba(0,0,0,0.035)" />
<rect x="477.00" y="93.30" width="1.00" height="429.70" fill="rgba(0,0,0,0.035)" />
<rect x="507.00" y="93.30" width="1.00" height="429.70" fill="rgba(0,0,0,0.2)" />
<rect x="506.00" y="93.30" width="1.00" height="429.70" fill="rgba(0,0,0,0.035)" />
<rect x="508.00" y="93.30" width="1.00" height="429.70" fill="rgba(0,0,0,0.035)" />
<rect x="537.00" y="93.30" width="2.00" height="429.70" fill="rgba(0,0,0,0.125)" />
<rect x="568.00" y="93.30" width="2.00" height="429.70" fill="rgba(0,0,0,0.125)" />
<rect x="599.00" y="93.30" width="2.00" height="429.70" fill="rgba(0,0,0,0.125)" />
<rect x="630.00" y="93.30" width="2.00" height="429.70" fill="rgba(0,0,0,0.125)" />
<rect x="660.70" y="93.30" width="2.00" height="429.70" fill="rgba(0,0,0,0.125)" />
<rect x="692.00" y="93.30" width="1.00" height="429.70" fill="rgba(0,0,0,0.2)" />
<rect x="691.00" y="93.30" width="1.00" height="429.70" fill="rgba(0,0,0,0.035)" />
<rect x="693.00" y="93.30" width="1.00" height="429.70" fill="rgba(0,0,0,0.035)" />
<text x="211.70" y="103.70" font-size="8.6" fill="#fff" font-weight="bold" stroke="#428ebd" stroke-width="0.12" textLength="30.00" lengthAdjust="spacingAndGlyphs" clip-path="url(#cl0)">Rock Kit</text>
<text x="252.90" y="134.62" font-size="8.6" fill="#fff" font-weight="bold" stroke="#5a76c0" stroke-width="0.12" textLength="40.65" lengthAdjust="spacingAndGlyphs" clip-path="url(#cl1)">HipHop Kit</text>
<text x="283.90" y="165.53" font-size="8.6" fill="#fff" font-weight="bold" stroke="#6a62c0" stroke-width="0.12" textLength="42.59" lengthAdjust="spacingAndGlyphs" clip-path="url(#cl2)">Trance Saw</text>
<text x="455.30" y="196.45" font-size="8.6" fill="#fff" font-weight="bold" stroke="#8557be" stroke-width="0.12" textLength="57.48" lengthAdjust="spacingAndGlyphs" clip-path="url(#cl3)">Electric Bass-01</text>
<text x="538.50" y="196.45" font-size="8.6" fill="#fff" font-weight="bold" stroke="#8557be" stroke-width="0.12" textLength="57.48" lengthAdjust="spacingAndGlyphs" clip-path="url(#cl4)">Electric Bass-01</text>
<text x="249.90" y="227.36" font-size="8.6" fill="#fff" font-weight="bold" stroke="#a34ab8" stroke-width="0.12" textLength="199.11" lengthAdjust="spacingAndGlyphs" clip-path="url(#cl5)">Cubase 7 - Lucky Number - 0017 - Audio - Guitar 1_01</text>
<text x="537.30" y="227.36" font-size="8.6" fill="#fff" font-weight="bold" stroke="#a34ab8" stroke-width="0.12" textLength="171.75" lengthAdjust="spacingAndGlyphs" clip-path="url(#cl6)">Cubase 7 - Lucky Numb... - Audio - Guitar 1_01</text>
<text x="249.90" y="258.27" font-size="8.6" fill="#fff" font-weight="bold" stroke="#b6459c" stroke-width="0.12" textLength="215.40" lengthAdjust="spacingAndGlyphs" clip-path="url(#cl7)">Cubase 7 - Lucky Number - 0...8 - Audio - Guitar 2 high_01</text>
<text x="538.10" y="258.27" font-size="8.6" fill="#fff" font-weight="bold" stroke="#b6459c" stroke-width="0.12" textLength="173.32" lengthAdjust="spacingAndGlyphs" clip-path="url(#cl8)">Cubase 7 - Lucky Numb...dio - Guitar 2 high_01</text>
<text x="518.90" y="289.19" font-size="8.6" fill="#fff" font-weight="bold" stroke="#b5426e" stroke-width="0.12" textLength="30.11" lengthAdjust="spacingAndGlyphs" clip-path="url(#cl9)">Cub...01</text>
<text x="619.60" y="289.19" font-size="8.6" fill="#fff" font-weight="bold" stroke="#b5426e" stroke-width="0.12" textLength="98.07" lengthAdjust="spacingAndGlyphs" clip-path="url(#cl10)">Cubase 7 - L...GuitarFX_01</text>
<text x="528.80" y="320.11" font-size="8.6" fill="#fff" font-weight="bold" stroke="#b94142" stroke-width="0.12" textLength="182.50" lengthAdjust="spacingAndGlyphs" clip-path="url(#cl11)">Cubase 7 - Lucky Numbe...21 - Audio - Chorus_01</text>
<text x="456.40" y="351.02" font-size="8.6" fill="#fff" font-weight="bold" stroke="#b86c40" stroke-width="0.12" textLength="76.15" lengthAdjust="spacingAndGlyphs" clip-path="url(#cl12)">Cubase 7 ...idge2_01</text>
<text x="456.40" y="381.94" font-size="8.6" fill="#fff" font-weight="bold" stroke="#b39b46" stroke-width="0.12" textLength="76.15" lengthAdjust="spacingAndGlyphs" clip-path="url(#cl13)">Cubase 7 ...idge1_01</text>
<text x="292.90" y="412.85" font-size="8.6" fill="#fff" font-weight="bold" stroke="#a9bb54" stroke-width="0.12" textLength="17.96" lengthAdjust="spacingAndGlyphs" clip-path="url(#cl14)">Lead</text>
<text x="592.30" y="412.85" font-size="8.6" fill="#fff" font-weight="bold" stroke="#a9bb54" stroke-width="0.12" textLength="17.96" lengthAdjust="spacingAndGlyphs" clip-path="url(#cl15)">Lead</text>
<text x="515.50" y="443.77" font-size="8.6" fill="#fff" font-weight="bold" stroke="#7ab842" stroke-width="0.12" textLength="57.10" lengthAdjust="spacingAndGlyphs" clip-path="url(#cl16)">Cubase...gh_01</text>
<text x="592.30" y="443.77" font-size="8.6" fill="#fff" font-weight="bold" stroke="#7ab842" stroke-width="0.12" textLength="102.22" lengthAdjust="spacingAndGlyphs" clip-path="url(#cl17)">Cubase 7 - Lu...Voc high_01</text>
<text x="326.70" y="474.68" font-size="8.6" fill="#fff" font-weight="bold" stroke="#4fad45" stroke-width="0.12" textLength="206.98" lengthAdjust="spacingAndGlyphs" clip-path="url(#cl18)">Cubase 7 - Lucky Number - 0028 - Audio - B-Voc mid_01</text>
<text x="592.30" y="474.68" font-size="8.6" fill="#fff" font-weight="bold" stroke="#4fad45" stroke-width="0.12" textLength="69.69" lengthAdjust="spacingAndGlyphs" clip-path="url(#cl19)">Cubase 7... mid_01</text>
</svg></body></html>
